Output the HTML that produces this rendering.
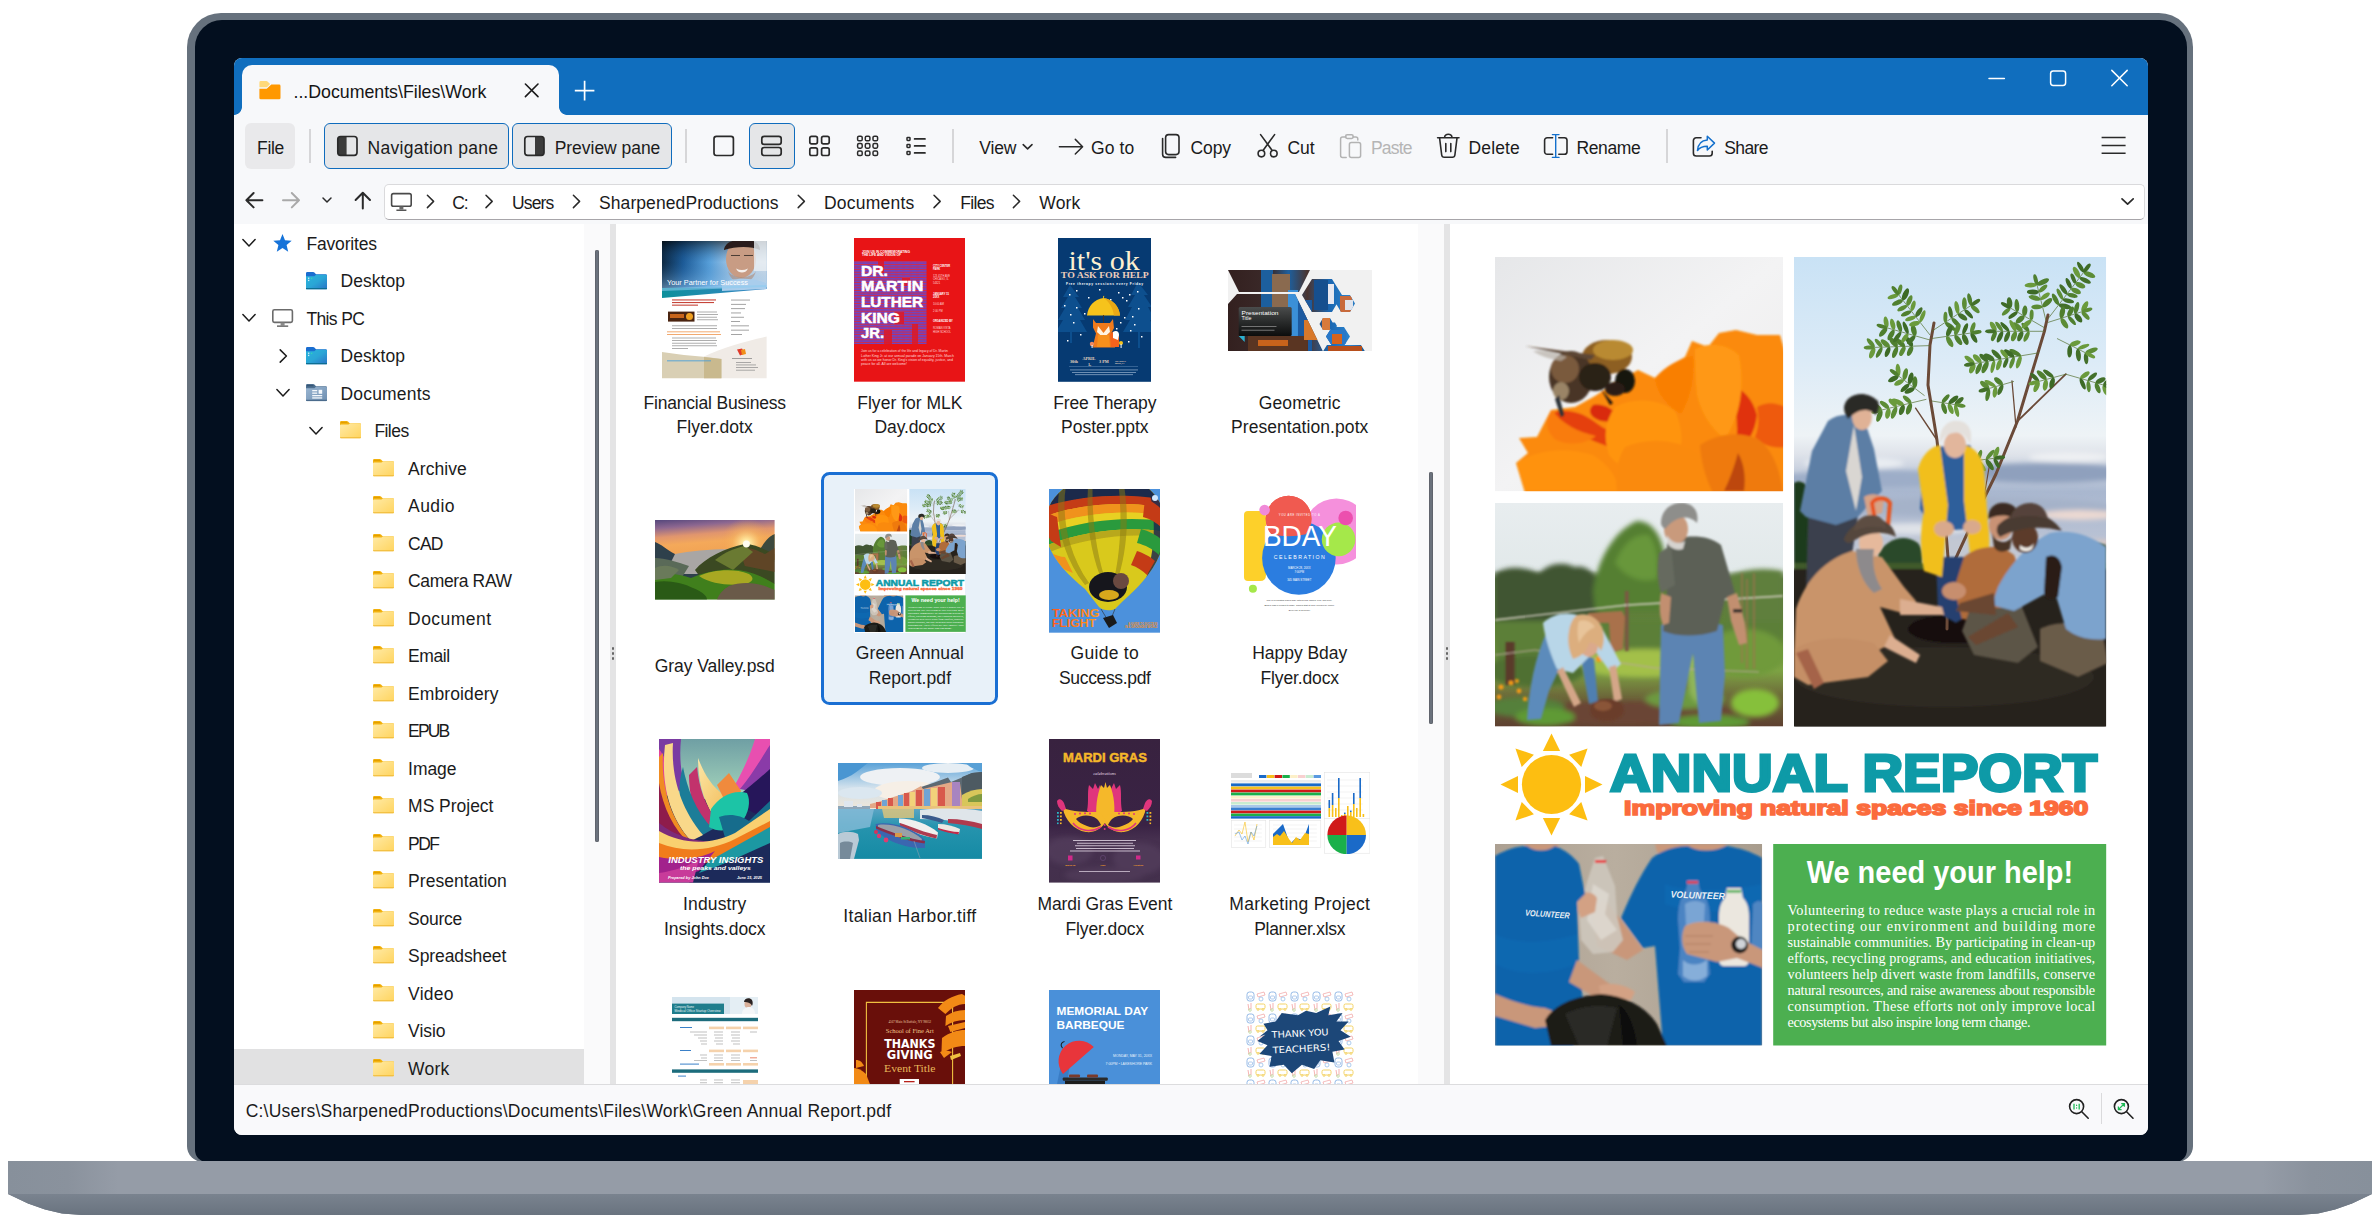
<!DOCTYPE html>
<html lang="en">
<head>
<meta charset="utf-8">
<title>File Viewer - Work</title>
<style>
*{box-sizing:border-box;margin:0;padding:0}
html,body{width:2380px;height:1230px;background:#fff;overflow:hidden}
body{font-family:"Liberation Sans",sans-serif;font-size:17.5px;color:#1b1b1b;position:relative}
.abs{position:absolute}
#stage{position:absolute;left:0;top:0;width:2380px;height:1230px;overflow:hidden;background:#fff}
/* laptop */
#bezel{position:absolute;left:187px;top:13px;width:2006px;height:1149px;background:#66717d;border-radius:34px 34px 16px 16px}
#bezel i{position:absolute;left:8px;top:7px;right:6px;bottom:0;background:#030f1f;border-radius:27px 27px 12px 12px}
#base{position:absolute;left:8px;top:1161px;width:2364px;height:54px;background:#727c88;clip-path:polygon(0 0,2364px 0,2364px 33px,2344px 42.500px,2327px 48.500px,2310px 52.500px,2290px 54px,74px 54px,54px 52.500px,37px 48.500px,20px 42.500px,0 33px);overflow:hidden}
#base i{position:absolute;left:0;top:0;width:100%;height:33px;background:linear-gradient(90deg,#87909b 0,#8a929d 60px,#959ca7 110px,#959ca7 2254px,#8a929d 2304px,#87909b 100%)}
#base b{position:absolute;left:0;top:33px;width:100%;height:21px;background:linear-gradient(180deg,#7a838f,#69737f)}
/* window */
#win{position:absolute;left:234px;top:58px;width:1914px;height:1077px;border-radius:8px;overflow:hidden;background:#f7f8fa}
#g{position:absolute;left:-234px;top:-58px;width:2380px;height:1230px}
.t{position:absolute;white-space:nowrap;line-height:20px}
svg{position:absolute;overflow:visible}
svg.th{overflow:hidden}
.ic{fill:none;stroke:#2a2a2a;stroke-width:1.6;stroke-linecap:round;stroke-linejoin:round}
.sep{position:absolute;width:1.5px;background:#d6d6d8}
</style>
</head>
<body>
<div id="stage">
<div id="bezel"><i></i></div>
<div id="base"><i></i><b></b></div>
<div id="win"><div id="g">
<svg width="0" height="0" style="left:0;top:0"><defs><filter id="b0" x="-5%" y="-5%" width="110%" height="110%"><feGaussianBlur stdDeviation=".5"/></filter></defs></svg>
<!-- title bar -->
<div class="abs" style="left:234px;top:58px;width:1914px;height:57px;background:#106ebe"></div>
<div class="abs" style="left:241.5px;top:64.8px;width:317px;height:51px;background:#f7f8fa;border-radius:10px 10px 0 0"></div>
<div class="abs" style="left:233.5px;top:106.6px;width:8px;height:8px;background:radial-gradient(circle at 0 0,rgba(247,248,250,0) 7.5px,#f7f8fa 8.2px)"></div>
<div class="abs" style="left:558.5px;top:106.6px;width:8px;height:8px;background:radial-gradient(circle at 100% 0,rgba(247,248,250,0) 7.5px,#f7f8fa 8.2px)"></div>
<svg style="left:255px;top:78px" width="30" height="26" viewBox="255 78 30 26"><path d="M259.400 82.400q0-1.300 1.300-1.300h5.800q.6 0 1 .4l2.600 2.600-3.200 3.200h-7.500z" fill="#ffd97a"/><path d="M259.400 88.800h7.300l4.600-4.300h7.800q1.400 0 1.400 1.400v12q0 1.400-1.400 1.400h-18.300q-1.400 0-1.400-1.400z" fill="#ff9800"/></svg>
<span class="t" style="left:293.50px;top:82.13px;font-size:17.80px;letter-spacing:-0.024px;color:#151515">...Documents\Files\Work</span>
<svg style="left:520px;top:80px" width="24" height="22" viewBox="520 80 24 22"><path d="M525.4 84l12.6 12.6M538 84l-12.6 12.6" stroke="#1b1b1b" stroke-width="1.6" fill="none" stroke-linecap="round"/></svg>
<svg style="left:570px;top:76px" width="30" height="30" viewBox="570 76 30 30"><path d="M574.8 90.6h19.6M584.6 80.8v19.6" stroke="#fff" stroke-width="1.7" fill="none"/></svg>
<svg style="left:1980px;top:62px" width="160" height="34" viewBox="1980 62 160 34"><g stroke="#fff" stroke-width="1.5" fill="none" stroke-linecap="round"><path d="M1989 78.6h15.4"/><rect x="2050.6" y="71" width="15" height="14.4" rx="2.6"/><path d="M2111.8 70.4l15.4 15.4M2127.2 70.4l-15.4 15.4"/></g></svg>
<!-- toolbar -->
<div class="abs" style="left:245px;top:123px;width:50.4px;height:45.8px;background:#e9e9eb;border-radius:6px"></div>
<span class="t" style="left:257.00px;top:137.74px;font-size:17.50px;letter-spacing:-0.300px;">File</span>
<div class="sep" style="left:309.2px;top:129px;height:34px"></div>
<div class="abs" style="left:324.4px;top:123px;width:185px;height:45.8px;background:#e5e6e8;border:1.8px solid #0f6cbd;border-radius:6px"></div>
<svg style="left:334px;top:132px" width="28" height="28" viewBox="334 132 28 28"><path d="M346.6 136.5h-6.2a2.6 2.6 0 0 0-2.6 2.6v13.6a2.6 2.6 0 0 0 2.6 2.6h6.2z" fill="#3b3b3b"/><rect x="337.8" y="136.5" width="19.2" height="18.8" rx="2.8" class="ic" style="stroke-width:1.7"/></svg>
<span class="t" style="left:367.50px;top:137.74px;font-size:17.50px;letter-spacing:0.294px;">Navigation pane</span>
<div class="abs" style="left:511.8px;top:123px;width:159.8px;height:45.8px;background:#e5e6e8;border:1.8px solid #0f6cbd;border-radius:6px"></div>
<svg style="left:521px;top:132px" width="28" height="28" viewBox="521 132 28 28"><path d="M535 136.5h6.4a2.6 2.6 0 0 1 2.6 2.6v13.6a2.6 2.6 0 0 1-2.6 2.6H535z" fill="#3b3b3b"/><rect x="524.8" y="136.5" width="19.2" height="18.8" rx="2.8" class="ic" style="stroke-width:1.7"/></svg>
<span class="t" style="left:554.70px;top:137.74px;font-size:17.50px;letter-spacing:-0.036px;">Preview pane</span>
<div class="sep" style="left:685.4px;top:129px;height:34px"></div>
<div class="abs" style="left:748.8px;top:123px;width:46px;height:45.8px;background:#e5e6e8;border:1.8px solid #0f6cbd;border-radius:6px"></div>
<svg style="left:705px;top:128px" width="230" height="36" viewBox="705 128 230 36"><g class="ic" style="stroke-width:1.7">
<rect x="714" y="136.3" width="19.4" height="19.2" rx="2.4"/>
<rect x="761.8" y="136.3" width="19.4" height="8" rx="2.4"/><rect x="761.8" y="147.5" width="19.4" height="8" rx="2.4"/>
<rect x="809.8" y="136.3" width="7.6" height="7.6" rx="1.8"/><rect x="821.6" y="136.3" width="7.6" height="7.6" rx="1.8"/><rect x="809.8" y="147.9" width="7.6" height="7.6" rx="1.8"/><rect x="821.6" y="147.9" width="7.6" height="7.6" rx="1.8"/>
</g><g class="ic" style="stroke-width:1.5">
<rect x="857.6" y="136.2" width="4.6" height="4.6" rx="1.4"/><rect x="865.3" y="136.2" width="4.6" height="4.6" rx="1.4"/><rect x="873" y="136.2" width="4.6" height="4.6" rx="1.4"/>
<rect x="857.6" y="143.6" width="4.6" height="4.6" rx="1.4"/><rect x="865.3" y="143.6" width="4.6" height="4.6" rx="1.4"/><rect x="873" y="143.6" width="4.6" height="4.6" rx="1.4"/>
<rect x="857.6" y="151" width="4.6" height="4.6" rx="1.4"/><rect x="865.3" y="151" width="4.6" height="4.6" rx="1.4"/><rect x="873" y="151" width="4.6" height="4.6" rx="1.4"/>
<rect x="907" y="137.4" width="3" height="3" rx=".6"/><rect x="907" y="144.4" width="3" height="3" rx=".6"/><rect x="907" y="151.4" width="3" height="3" rx=".6"/>
<path d="M914.6 138.9h10.4M914.6 145.9h10.4M914.6 152.9h10.4" style="stroke-width:1.7"/>
</g></svg>
<div class="sep" style="left:952.4px;top:129px;height:34px"></div>
<span class="t" style="left:979.30px;top:137.74px;font-size:17.50px;letter-spacing:-0.154px;">View</span>
<svg style="left:1020px;top:138px" width="16" height="16" viewBox="1020 138 16 16"><path d="M1023.2 144.6l4.4 4.2 4.4-4.2" class="ic" style="stroke-width:1.6"/></svg>
<svg style="left:1055px;top:130px" width="32" height="32" viewBox="1055 130 32 32"><path d="M1059.4 146.7h22.6M1075.3 139.4l7.3 7.3-7.3 7.3" class="ic" style="stroke-width:1.5"/></svg>
<span class="t" style="left:1091.00px;top:137.74px;font-size:17.50px;letter-spacing:0.100px;">Go to</span>
<svg style="left:1158px;top:130px" width="26" height="32" viewBox="1158 130 26 32"><g class="ic" style="stroke-width:1.6"><rect x="1165.6" y="134.6" width="13.4" height="20" rx="3"/><path d="M1162.6 138.6v15.6a3.2 3.2 0 0 0 3.2 3.2h9.8"/></g></svg>
<span class="t" style="left:1190.60px;top:137.74px;font-size:17.50px;letter-spacing:-0.114px;">Copy</span>
<svg style="left:1254px;top:130px" width="28" height="32" viewBox="1254 130 28 32"><g class="ic" style="stroke-width:1.6"><path d="M1260.6 134.6l11.4 15.6M1274.6 134.6l-11.4 15.6"/><circle cx="1261.4" cy="153.6" r="3.3"/><circle cx="1273.8" cy="153.6" r="3.3"/></g></svg>
<span class="t" style="left:1287.40px;top:137.74px;font-size:17.50px;letter-spacing:-0.011px;">Cut</span>
<svg style="left:1336px;top:130px" width="30" height="32" viewBox="1336 130 30 32"><g class="ic" style="stroke:#b3b3b3;stroke-width:1.5"><path d="M1346 137h-3.4a2 2 0 0 0-2 2v16.4a2 2 0 0 0 2 2h3.6M1353 137h2.8a2 2 0 0 1 2 2v1"/><rect x="1345.6" y="134.8" width="7.6" height="3.6" rx="1.6"/><rect x="1349.4" y="142.4" width="11.2" height="15" rx="2"/></g></svg>
<span class="t" style="left:1371.00px;top:137.74px;font-size:17.50px;letter-spacing:-0.830px;color:#b5b5b5">Paste</span>
<svg style="left:1434px;top:130px" width="30" height="32" viewBox="1434 130 30 32"><g class="ic" style="stroke-width:1.6"><path d="M1437.6 137.8h21.4M1444.6 137.6a3.7 3.4 0 0 1 7.4 0M1439.6 138.2l2.1 16.8a2.6 2.6 0 0 0 2.6 2.3h8a2.6 2.6 0 0 0 2.6-2.3l2.1-16.8M1445.8 143.6v8M1450.8 143.6v8"/></g></svg>
<span class="t" style="left:1468.60px;top:137.74px;font-size:17.50px;letter-spacing:0.102px;">Delete</span>
<svg style="left:1540px;top:130px" width="32" height="32" viewBox="1540 130 32 32"><g class="ic" style="stroke-width:1.6"><path d="M1552.6 137.7h-5.4a2.6 2.6 0 0 0-2.6 2.6v11.4a2.6 2.6 0 0 0 2.6 2.6h5.4M1558.8 137.7h5.6a2.6 2.6 0 0 1 2.6 2.6v11.4a2.6 2.6 0 0 1-2.6 2.6h-5.6"/><path d="M1555.7 134.6v22.8M1552.4 134.6h6.6M1552.4 157.4h6.6" style="stroke:#1470cc;stroke-width:1.4"/></g></svg>
<span class="t" style="left:1576.40px;top:137.74px;font-size:17.50px;letter-spacing:-0.358px;">Rename</span>
<div class="sep" style="left:1666px;top:129px;height:34px"></div>
<svg style="left:1688px;top:130px" width="32" height="32" viewBox="1688 130 32 32"><g class="ic" style="stroke-width:1.6"><path d="M1701 137.8h-4.8a2.8 2.8 0 0 0-2.8 2.8v12.6a2.8 2.8 0 0 0 2.8 2.8h13.2a2.8 2.8 0 0 0 2.8-2.8v-2"/><path d="M1707.3 136.2l7.2 6.9-7.2 6.9v-3.8c-4.4 0-7.8 1.300-9.800 4.300.500-6.300 4.400-10.100 9.800-10.500z" style="stroke:#1470cc;stroke-width:1.5"/></g></svg>
<span class="t" style="left:1724.30px;top:137.74px;font-size:17.50px;letter-spacing:-0.640px;">Share</span>
<svg style="left:2096px;top:130px" width="34" height="32" viewBox="2096 130 34 32"><path d="M2101.600 137.500h24M2101.600 145.400h24M2101.600 153.300h24" stroke="#2a2a2a" stroke-width="1.500" fill="none"/></svg>
<!-- address row -->
<svg style="left:240px;top:186px" width="140" height="30" viewBox="240 186 140 30"><g class="ic" style="stroke-width:2"><path d="M246.400 200.200h16M253.600 193l-7.200 7.200 7.200 7.200"/><path d="M355.600 200l7.200-7.200 7.200 7.200M362.800 193v15.400"/></g><path d="M283 200.200h16M291.800 193l7.200 7.200-7.200 7.200" class="ic" style="stroke:#a9a9a9;stroke-width:2"/><path d="M323 198l4 4 4-4" class="ic" style="stroke-width:1.500"/></svg>
<div class="abs" style="left:384px;top:183.600px;width:1761px;height:36.600px;background:#fff;border:1px solid #dadadc;border-bottom:1.600px solid #a7a5a9;border-radius:5px"></div>
<svg style="left:388px;top:188px" width="28" height="26" viewBox="388 188 28 26"><g class="ic" style="stroke:#4a4a4a;stroke-width:1.600"><rect x="391.600" y="193.600" width="19.600" height="12.600" rx="1.800"/></g><path d="M399.400 206.400h4v3h-4z" fill="#6a6a6a"/><path d="M396.400 209.400h10v1.500h-10z" fill="#555"/></svg>
<svg style="left:420px;top:190px" width="610" height="24" viewBox="420 190 610 24"><g class="ic" style="stroke-width:1.500"><path d="M427.400 195.200l6.200 6.200-6.200 6.200"/><path d="M486 195.200l6.200 6.200-6.200 6.200"/><path d="M573.400 195.200l6.200 6.200-6.200 6.200"/><path d="M798.200 195.200l6.200 6.200-6.200 6.200"/><path d="M934 195.200l6.200 6.200-6.200 6.200"/><path d="M1013.400 195.200l6.200 6.200-6.200 6.200"/></g></svg>
<span class="t" style="left:452.20px;top:192.64px;font-size:17.50px;letter-spacing:-1.200px;">C:</span>
<span class="t" style="left:512.00px;top:192.64px;font-size:17.50px;letter-spacing:-0.840px;">Users</span>
<span class="t" style="left:599.00px;top:192.64px;font-size:17.50px;letter-spacing:0.083px;">SharpenedProductions</span>
<span class="t" style="left:824.00px;top:192.64px;font-size:17.50px;letter-spacing:0.221px;">Documents</span>
<span class="t" style="left:960.30px;top:192.64px;font-size:17.50px;letter-spacing:-0.670px;">Files</span>
<span class="t" style="left:1039.30px;top:192.64px;font-size:17.50px;letter-spacing:0.172px;">Work</span>
<svg style="left:2118px;top:192px" width="20" height="20" viewBox="2118 192 20 20"><path d="M2122 198.800l5.600 5.400 5.600-5.400" class="ic" style="stroke-width:1.700"/></svg>
<!-- nav pane -->
<div class="abs" style="left:234px;top:224px;width:350px;height:861px;background:#fff"></div>
<div class="abs" style="left:584px;top:224px;width:26px;height:861px;background:#fafafb"></div>
<div class="abs" style="left:610px;top:224px;width:5.800px;height:861px;background:#e4e4e5"></div>
<div class="abs" style="left:594.800px;top:249.600px;width:4.200px;height:592px;background:#6b727d;border-radius:2.100px;box-shadow:inset 0 0 0 .6px #595c63"></div>
<div class="abs" style="left:611.800px;top:647.400px;width:2.200px;height:2.200px;background:#666;border-radius:50%;box-shadow:0 5px 0 #666,0 10px 0 #666"></div>
<div class="abs" style="left:234px;top:1049px;width:350px;height:36px;background:#e1e1e2"></div>
<svg width="0" height="0" style="left:0;top:0"><defs>
<linearGradient id="gy" x1="0" y1="0" x2="1" y2="1"><stop offset="0" stop-color="#ffeaa6"/><stop offset="1" stop-color="#ffd45e"/></linearGradient>
<linearGradient id="gb" x1="0" y1="0" x2="1" y2="1"><stop offset="0" stop-color="#2ab4dc"/><stop offset=".5" stop-color="#2aa6d6"/><stop offset="1" stop-color="#2a72c6"/></linearGradient>
<linearGradient id="gd" x1="0" y1="0" x2="1" y2="1"><stop offset="0" stop-color="#9ab6d2"/><stop offset="1" stop-color="#6d8eb0"/></linearGradient>
<symbol id="fy" viewBox="0 0 21 17.400"><path d="M0 1.300Q0 0 1.300 0h5.500q.7 0 1.200.5L9.700 2.200h10Q21 2.200 21 3.500v3H0z" fill="#f2b20e"/><path d="M1 1.500h6.300" stroke="#e39e00" stroke-width="1" fill="none"/><path d="M0 4.400q0-1 1-1h7.300q.6 0 1-.4l.9-.800h9.600q1.200 0 1.200 1.200v12.800q0 1.200-1.200 1.200H1.200Q0 17.400 0 16.200z" fill="url(#gy)"/><path d="M0 16.200h21q0 1.200-1.200 1.200H1.200Q0 17.400 0 16.200z" fill="#efb936"/></symbol>
<symbol id="desk" viewBox="0 0 21 17.600"><path d="M0 1.300Q0 0 1.300 0h5.900q.7 0 1.200.5L10 2.200h9.800Q21 2.200 21 3.500v3H0z" fill="#1a6dd0"/><path d="M0 4.200h8.400l1.600-1.400h9.800q1.200 0 1.200 1.200v12.400q0 1.200-1.200 1.200H1.200Q0 17.600 0 16.400z" fill="url(#gb)"/><path d="M0 16h21v.4q0 1.200-1.200 1.200H1.200Q0 17.600 0 16.400z" fill="#0d6e92"/><rect x="2" y="5.600" width="1.300" height="1.300" fill="#cfeefa"/><rect x="2" y="7.800" width="1.300" height="1.300" fill="#cfeefa"/><rect x="5" y="5.800" width="1.200" height="1.200" fill="#35d6b0"/></symbol>
<symbol id="docs" viewBox="0 0 21 17.200"><path d="M0 1.300Q0 0 1.300 0h5.900q.7 0 1.200.5L10 2.200h9.800Q21 2.200 21 3.500v3H0z" fill="#4d6f90"/><path d="M1 1.700h6.500" stroke="#2f4d6b" stroke-width="1.100" fill="none"/><path d="M0 4.200h8.400l1.600-1.400h9.800q1.200 0 1.200 1.200v12q0 1.200-1.200 1.200H1.200Q0 17.200 0 16z" fill="url(#gd)"/><path d="M0 15.800h21v.2q0 1.200-1.200 1.200H1.200Q0 17.200 0 16z" fill="#4b6b8c"/><g fill="#f4f8fc"><rect x="6.200" y="6" width="5" height="1.300"/><rect x="6.200" y="8.500" width="5" height="1.300"/><rect x="12.600" y="5.800" width="3.600" height="4"/><rect x="6.200" y="11" width="10" height="1.300"/><rect x="6.200" y="13.300" width="10" height="1.300"/></g></symbol>
</defs></svg>
<svg style="left:241.0px;top:237.0px" width="16" height="12" viewBox="0 0 16 12"><path d="M1.900 2.600l6.100 6.400 6.100-6.400" class="ic" style="stroke-width:1.500;stroke:#1b1b1b"/></svg>
<svg style="left:273.3px;top:234.2px" width="19" height="18" viewBox="0 0 19 18"><path d="M9.500 0l2.500 6.300 6.700.5-5.100 4.300 1.600 6.600-5.700-3.600-5.700 3.600 1.600-6.600L.3 6.800l6.700-.5z" fill="#1673d9"/></svg>
<span class="t" style="left:306.40px;top:233.74px;font-size:17.50px;letter-spacing:-0.163px;">Favorites</span>
<svg style="left:306.0px;top:271.5px" width="21" height="17.6"><use href="#desk"/></svg>
<span class="t" style="left:340.50px;top:271.24px;font-size:17.50px;letter-spacing:0.029px;">Desktop</span>
<svg style="left:241.0px;top:312.0px" width="16" height="12" viewBox="0 0 16 12"><path d="M1.900 2.600l6.100 6.400 6.100-6.400" class="ic" style="stroke-width:1.500;stroke:#1b1b1b"/></svg>
<svg style="left:272.2px;top:308.8px" width="22" height="19" viewBox="0 0 22 19"><rect x=".8" y=".8" width="19.600" height="12.600" rx="1.600" fill="#fff" stroke="#6b6b6b" stroke-width="1.600"/><rect x="8.600" y="13.600" width="4" height="3" fill="#8a8a8a"/><rect x="5" y="16.400" width="11.200" height="1.500" fill="#6b6b6b"/></svg>
<span class="t" style="left:306.40px;top:308.74px;font-size:17.50px;letter-spacing:-0.619px;">This PC</span>
<svg style="left:276.7px;top:348.1px" width="12" height="16" viewBox="0 0 12 16"><path d="M3.200 1.900l6.200 6.100-6.200 6.100" class="ic" style="stroke-width:1.500;stroke:#1b1b1b"/></svg>
<svg style="left:306.0px;top:346.5px" width="21" height="17.6"><use href="#desk"/></svg>
<span class="t" style="left:340.50px;top:346.24px;font-size:17.50px;letter-spacing:0.029px;">Desktop</span>
<svg style="left:274.7px;top:387.0px" width="16" height="12" viewBox="0 0 16 12"><path d="M1.900 2.600l6.100 6.400 6.100-6.400" class="ic" style="stroke-width:1.500;stroke:#1b1b1b"/></svg>
<svg style="left:306.0px;top:384.0px" width="21" height="17.2"><use href="#docs"/></svg>
<span class="t" style="left:340.50px;top:383.74px;font-size:17.50px;letter-spacing:0.188px;">Documents</span>
<svg style="left:308.3px;top:424.5px" width="16" height="12" viewBox="0 0 16 12"><path d="M1.900 2.600l6.100 6.400 6.100-6.400" class="ic" style="stroke-width:1.500;stroke:#1b1b1b"/></svg>
<svg style="left:339.9px;top:421.3px" width="21" height="17.4"><use href="#fy"/></svg>
<span class="t" style="left:374.40px;top:421.24px;font-size:17.50px;letter-spacing:-0.550px;">Files</span>
<svg style="left:373.3px;top:458.8px" width="21" height="17.4"><use href="#fy"/></svg>
<span class="t" style="left:408.10px;top:458.74px;font-size:17.50px;letter-spacing:0.035px;">Archive</span>
<svg style="left:373.3px;top:496.3px" width="21" height="17.4"><use href="#fy"/></svg>
<span class="t" style="left:408.10px;top:496.24px;font-size:17.50px;letter-spacing:0.408px;">Audio</span>
<svg style="left:373.3px;top:533.8px" width="21" height="17.4"><use href="#fy"/></svg>
<span class="t" style="left:408.10px;top:533.74px;font-size:17.50px;letter-spacing:-0.817px;">CAD</span>
<svg style="left:373.3px;top:571.3px" width="21" height="17.4"><use href="#fy"/></svg>
<span class="t" style="left:408.10px;top:571.24px;font-size:17.50px;letter-spacing:-0.368px;">Camera RAW</span>
<svg style="left:373.3px;top:608.8px" width="21" height="17.4"><use href="#fy"/></svg>
<span class="t" style="left:408.10px;top:608.74px;font-size:17.50px;letter-spacing:0.455px;">Document</span>
<svg style="left:373.3px;top:646.3px" width="21" height="17.4"><use href="#fy"/></svg>
<span class="t" style="left:408.10px;top:646.24px;font-size:17.50px;letter-spacing:-0.432px;">Email</span>
<svg style="left:373.3px;top:683.8px" width="21" height="17.4"><use href="#fy"/></svg>
<span class="t" style="left:408.10px;top:683.74px;font-size:17.50px;letter-spacing:0.092px;">Embroidery</span>
<svg style="left:373.3px;top:721.3px" width="21" height="17.4"><use href="#fy"/></svg>
<span class="t" style="left:408.10px;top:721.24px;font-size:17.50px;letter-spacing:-1.839px;">EPUB</span>
<svg style="left:373.3px;top:758.8px" width="21" height="17.4"><use href="#fy"/></svg>
<span class="t" style="left:408.10px;top:758.74px;font-size:17.50px;letter-spacing:-0.068px;">Image</span>
<svg style="left:373.3px;top:796.3px" width="21" height="17.4"><use href="#fy"/></svg>
<span class="t" style="left:408.10px;top:796.24px;font-size:17.50px;letter-spacing:-0.028px;">MS Project</span>
<svg style="left:373.3px;top:833.8px" width="21" height="17.4"><use href="#fy"/></svg>
<span class="t" style="left:408.10px;top:833.74px;font-size:17.50px;letter-spacing:-1.534px;">PDF</span>
<svg style="left:373.3px;top:871.3px" width="21" height="17.4"><use href="#fy"/></svg>
<span class="t" style="left:408.10px;top:871.24px;font-size:17.50px;letter-spacing:0.045px;">Presentation</span>
<svg style="left:373.3px;top:908.8px" width="21" height="17.4"><use href="#fy"/></svg>
<span class="t" style="left:408.10px;top:908.74px;font-size:17.50px;letter-spacing:-0.275px;">Source</span>
<svg style="left:373.3px;top:946.3px" width="21" height="17.4"><use href="#fy"/></svg>
<span class="t" style="left:408.10px;top:946.24px;font-size:17.50px;letter-spacing:-0.104px;">Spreadsheet</span>
<svg style="left:373.3px;top:983.8px" width="21" height="17.4"><use href="#fy"/></svg>
<span class="t" style="left:408.10px;top:983.74px;font-size:17.50px;letter-spacing:0.251px;">Video</span>
<svg style="left:373.3px;top:1021.3px" width="21" height="17.4"><use href="#fy"/></svg>
<span class="t" style="left:408.10px;top:1021.24px;font-size:17.50px;letter-spacing:-0.063px;">Visio</span>
<svg style="left:373.3px;top:1058.8px" width="21" height="17.4"><use href="#fy"/></svg>
<span class="t" style="left:408.10px;top:1058.74px;font-size:17.50px;letter-spacing:0.222px;">Work</span>
<!-- files pane -->
<div class="abs" style="left:615.800px;top:224px;width:802.400px;height:861px;background:#fff"></div>
<div class="abs" style="left:1418.200px;top:224px;width:26px;height:861px;background:#fafafb"></div>
<div class="abs" style="left:1444.200px;top:224px;width:5.800px;height:861px;background:#e4e4e5"></div>
<div class="abs" style="left:1429px;top:472px;width:4.200px;height:252.400px;background:#6b727d;border-radius:2.100px;box-shadow:inset 0 0 0 .6px #595c63"></div>
<div class="abs" style="left:1445.800px;top:647.400px;width:2.200px;height:2.200px;background:#666;border-radius:50%;box-shadow:0 5px 0 #666,0 10px 0 #666"></div>
<div class="abs" style="left:1450px;top:224px;width:698px;height:861px;background:#fff"></div>
<div class="abs" style="left:821.300px;top:471.900px;width:177.200px;height:233.400px;background:#e8f1f9;border:3px solid #1a6fd3;border-radius:8.500px"></div>
<span class="t" style="left:643.55px;top:392.84px;font-size:17.50px;letter-spacing:-0.200px;">Financial Business</span>
<span class="t" style="left:676.60px;top:417.34px;font-size:17.50px;letter-spacing:0.034px;">Flyer.dotx</span>
<span class="t" style="left:857.25px;top:392.84px;font-size:17.50px;letter-spacing:0.021px;">Flyer for MLK</span>
<span class="t" style="left:874.55px;top:417.34px;font-size:17.50px;letter-spacing:-0.119px;">Day.docx</span>
<span class="t" style="left:1053.30px;top:392.84px;font-size:17.50px;letter-spacing:-0.144px;">Free Therapy</span>
<span class="t" style="left:1061.10px;top:417.34px;font-size:17.50px;letter-spacing:-0.014px;">Poster.pptx</span>
<span class="t" style="left:1258.75px;top:392.84px;font-size:17.50px;letter-spacing:0.131px;">Geometric</span>
<span class="t" style="left:1231.00px;top:417.34px;font-size:17.50px;letter-spacing:0.071px;">Presentation.potx</span>
<span class="t" style="left:654.75px;top:655.64px;font-size:17.50px;letter-spacing:-0.069px;">Gray Valley.psd</span>
<span class="t" style="left:855.85px;top:643.44px;font-size:17.50px;letter-spacing:0.089px;">Green Annual</span>
<span class="t" style="left:868.75px;top:667.94px;font-size:17.50px;letter-spacing:0.058px;">Report.pdf</span>
<span class="t" style="left:1070.55px;top:643.44px;font-size:17.50px;letter-spacing:0.293px;">Guide to</span>
<span class="t" style="left:1059.05px;top:667.94px;font-size:17.50px;letter-spacing:-0.348px;">Success.pdf</span>
<span class="t" style="left:1252.25px;top:643.44px;font-size:17.50px;letter-spacing:-0.044px;">Happy Bday</span>
<span class="t" style="left:1260.55px;top:667.94px;font-size:17.50px;letter-spacing:-0.145px;">Flyer.docx</span>
<span class="t" style="left:683.00px;top:894.04px;font-size:17.50px;letter-spacing:0.144px;">Industry</span>
<span class="t" style="left:663.90px;top:918.54px;font-size:17.50px;letter-spacing:-0.041px;">Insights.docx</span>
<span class="t" style="left:843.25px;top:906.24px;font-size:17.50px;letter-spacing:0.326px;">Italian Harbor.tiff</span>
<span class="t" style="left:1037.40px;top:894.04px;font-size:17.50px;letter-spacing:-0.085px;">Mardi Gras Event</span>
<span class="t" style="left:1065.45px;top:918.54px;font-size:17.50px;letter-spacing:-0.105px;">Flyer.docx</span>
<span class="t" style="left:1229.35px;top:894.04px;font-size:17.50px;letter-spacing:0.267px;">Marketing Project</span>
<span class="t" style="left:1254.15px;top:918.54px;font-size:17.50px;letter-spacing:-0.271px;">Planner.xlsx</span>
<!-- thumb: annual report page (scaled clone) -->
<div class="abs" style="left:853.900px;top:488.600px;width:111.500px;height:144.400px;background:#fff"></div>
<svg style="left:854.700px;top:489.300px" width="110.750" height="142.880" viewBox="0 0 611.200 788.500">
<defs>
<filter id="b1" x="-5%" y="-5%" width="110%" height="110%"><feGaussianBlur stdDeviation="1.1"/></filter>
<filter id="b2" x="-10%" y="-10%" width="120%" height="120%"><feGaussianBlur stdDeviation="2.6"/></filter>
<filter id="b4" x="-20%" y="-20%" width="140%" height="140%"><feGaussianBlur stdDeviation="6"/></filter>
<clipPath id="cbee"><rect x="0" y="0" width="288.1" height="234.3"/></clipPath>
<clipPath id="cpl"><rect x="299" y="0" width="312.2" height="469.6"/></clipPath>
<clipPath id="cga"><rect x="0" y="246" width="288.1" height="223.6"/></clipPath>
<clipPath id="cvo"><rect x="0" y="587" width="267.2" height="201.5"/></clipPath>
<linearGradient id="gbee" x1="0" y1="0" x2="1" y2="1"><stop offset="0" stop-color="#e6e7e9"/><stop offset=".5" stop-color="#f3f3f4"/><stop offset="1" stop-color="#ecebea"/></linearGradient>
<linearGradient id="gsky" x1="0" y1="0" x2="0" y2="1"><stop offset="0" stop-color="#c9e2f5"/><stop offset=".22" stop-color="#dcebf7"/><stop offset=".38" stop-color="#eef3f6"/><stop offset=".42" stop-color="#dfe3ea"/><stop offset=".5" stop-color="#a9b7cf"/><stop offset=".6" stop-color="#b9c2d4"/><stop offset=".66" stop-color="#cfd0d6"/><stop offset=".67" stop-color="#2a2622"/><stop offset="1" stop-color="#1f1b18"/></linearGradient>
<linearGradient id="ggar" x1="0" y1="0" x2="0" y2="1"><stop offset="0" stop-color="#e8edef"/><stop offset=".3" stop-color="#e2e9ea"/><stop offset=".34" stop-color="#5d7442"/><stop offset=".55" stop-color="#5f8238"/><stop offset=".75" stop-color="#7da344"/><stop offset=".86" stop-color="#6d6a3a"/><stop offset="1" stop-color="#5e4030"/></linearGradient>
<linearGradient id="gwall" x1="0" y1="0" x2="1" y2="0"><stop offset="0" stop-color="#aca092"/><stop offset=".45" stop-color="#b9ae9f"/><stop offset="1" stop-color="#a89c8d"/></linearGradient>
</defs>
<!-- ============ BEE ============ -->
<g clip-path="url(#cbee)">
<rect x="0" y="0" width="288.1" height="234.3" fill="url(#gbee)"/>
<g filter="url(#b1)">
<path d="M30 236L21 206 33 196 24 181 42 180 56 153 80 150 100 139 118 127 143 113 160 121 176 108 190 100 197 84 213 90 224 76 241 73 262 78 285 78 290 95V236z" fill="#fb8a08"/>
<path d="M60 155c14-4 30 2 40 10 10 8 22 12 36 20 6 4-2 10-12 8-20-6-40-14-56-26-6-5-10-10-8-12z" fill="#e5400c"/>
<path d="M98 148c10-2 20 4 26 12-8 6-18 6-26 0-4-4-4-8 0-12z" fill="#d92c08"/>
<path d="M236 128c12 4 22 14 26 30-2 18-10 30-22 38 4-20 2-44-4-68z" fill="#e0320a"/>
<path d="M262 150c10-6 20-4 28 0v40c-12 2-22-2-30-10 4-10 4-20 2-30z" fill="#ee5a0a"/>
<path d="M200 92c16-8 34-4 44 6 6 30 2 60-14 84-14-10-24-26-28-44-2-16-2-32-2-46z" fill="#ff9812"/>
<path d="M120 150c20-10 44-8 60 4 10 22 8 44-4 62-24 6-48 0-62-18-6-18-4-34 6-48z" fill="#ff9410"/>
<path d="M22 206c20-14 50-16 76-8 16 10 24 22 26 36H30z" fill="#ff920c"/>
<path d="M160 121c10-12 26-20 38-22 2 20-2 40-12 58-14-8-24-20-26-36z" fill="#f97f06"/>
<path d="M130 190c24-10 52-8 72 6 14 12 22 26 22 40H122c-2-18 0-34 8-46z" fill="#fa8a0a"/>
<path d="M205 188c18-12 40-14 58-6 14 10 22 30 25 54h-70c-8-16-12-32-13-48z" fill="#ef7a0c"/>
<path d="M243 196c6 10 8 24 6 38h-20c6-12 10-24 14-38z" fill="#a8320a" opacity=".7"/>
<path d="M57 153c10 14 26 22 44 26-10 8-26 10-40 4-10-8-12-20-4-30z" fill="#f97c08"/>
</g>
<g filter="url(#b1)">
<ellipse cx="112" cy="100" rx="25" ry="17" fill="#8d5e22"/>
<ellipse cx="118" cy="93" rx="20" ry="10" fill="#b98a32"/>
<ellipse cx="76" cy="120" rx="22" ry="26" fill="#4a3626"/>
<ellipse cx="70" cy="112" rx="14" ry="14" fill="#7a5a3c"/>
<ellipse cx="66" cy="134" rx="8" ry="9" fill="#9a8466"/>
<ellipse cx="100" cy="120" rx="16" ry="14" fill="#2a2018"/>
<ellipse cx="130" cy="124" rx="10" ry="12" fill="#17120f"/>
<ellipse cx="120" cy="132" rx="10" ry="7" fill="#2a1c14"/>
<path d="M30 89l70 9-4 5-38-8z" fill="#5d4634"/>
<path d="M38 94c10-2 24 2 34 6l-6 4c-10-2-20-4-28-10z" fill="#b9b2aa" opacity=".7"/>
<path d="M64 138l5 20-3 2-6-18z" fill="#2a3038"/>
<path d="M106 132l12 14-3 2z" fill="#1d1410"/>
</g>
</g>

<!-- ============ PLANTING ============ -->
<g clip-path="url(#cpl)"><g transform="translate(299,0)">
<rect x="0" y="0" width="312.2" height="469.6" fill="url(#gsky)"/>
<g filter="url(#b2)">
<ellipse cx="250" cy="216" rx="90" ry="10" fill="#8fa0bd"/>
<ellipse cx="90" cy="222" rx="110" ry="9" fill="#9dadc8"/>
<ellipse cx="60" cy="206" rx="50" ry="6" fill="#e9edf2"/>
<ellipse cx="275" cy="200" rx="40" ry="5" fill="#eef0f3"/>
<ellipse cx="180" cy="250" rx="140" ry="10" fill="#a5b2c9"/>
<ellipse cx="285" cy="258" rx="40" ry="5" fill="#ecd9d2"/>
<ellipse cx="120" cy="272" rx="60" ry="6" fill="#dfe2e8"/>
<ellipse cx="290" cy="288" rx="40" ry="5" fill="#f0c9b4"/>
<ellipse cx="200" cy="290" rx="120" ry="10" fill="#c3c8d3"/>
</g>
<g filter="url(#b1)">
<path d="M0 226c6-4 12 0 18 8v80H0z" fill="#1f3a1e"/>
<path d="M84 296c10-14 26-20 40-10 6 8 6 18 2 28H84z" fill="#2c4a2a"/>
<path d="M288 300c8-12 16-16 24-12v24h-24z" fill="#4a5a3a"/>
<rect x="0" y="306" width="312.200" height="8" fill="#3f5a2c"/>
<rect x="0" y="312" width="312.200" height="160" fill="#26211d"/>
<ellipse cx="150" cy="420" rx="150" ry="30" fill="#2f2924"/>
<ellipse cx="160" cy="372" rx="46" ry="14" fill="#14110f"/>
</g>
<!-- tree -->
<g fill="none" stroke="#6b4a38" stroke-linecap="round" stroke-linejoin="round">
<path d="M153 372L154 300 150 250 143 183 134 128 136 88 140 66" stroke-width="3"/>
<path d="M143 183L121.600 151.200" stroke-width="1.400"/>
<path d="M154 318L180 262 202 217 223.600 163.700 250.400 74.300 254 58" stroke-width="3"/>
<path d="M224 163.700L271.800 117.200" stroke-width="1.800"/>
<path d="M222 170L218 124" stroke-width="1.300"/>
<path d="M190 240L196 205" stroke-width="1.200"/>
</g>
<g stroke="#55702f" stroke-width=".7" fill="none">
<path d="M136.0 88.6L80.5 90.4"/>
<path d="M136.0 83.0L93.0 70.8"/>
<path d="M136.0 78.0L104.6 37.7"/>
<path d="M137.7 74.3L177.0 48.4"/>
<path d="M137.7 81.5L177.0 76.0"/>
<path d="M132.4 142.3L87.7 153.0"/>
<path d="M130.6 138.7L104.6 119.0"/>
<path d="M137.7 144.0L161.0 147.6"/>
<path d="M250.4 74.3L202.0 74.3"/>
<path d="M250.4 70.7L216.4 51.0"/>
<path d="M252.0 63.6L243.0 27.8"/>
<path d="M254.0 61.8L289.7 15.3"/>
<path d="M254.0 65.4L288.0 54.7"/>
<path d="M245.0 95.8L180.6 106.5"/>
<path d="M220.0 124.4L195.0 131.5"/>
<path d="M263.0 81.5L291.5 95.8"/>
<path d="M271.8 117.2L309.4 128.0"/>
<path d="M271.8 117.2L245.0 124.4"/>
<path d="M170.0 205.0L200.3 201.3"/>
</g>
<g>
<ellipse cx="116.1" cy="94.0" rx="5.4" ry="2.5" fill="#4f7f2f" transform="rotate(116 116.1 94.0)"/>
<ellipse cx="115.4" cy="84.8" rx="5.3" ry="2.4" fill="#3d6a26" transform="rotate(236 115.4 84.8)"/>
<ellipse cx="108.4" cy="94.1" rx="5.3" ry="2.3" fill="#5c8c36" transform="rotate(117 108.4 94.1)"/>
<ellipse cx="106.3" cy="85.8" rx="5.8" ry="2.6" fill="#4f7f2f" transform="rotate(218 106.3 85.8)"/>
<ellipse cx="101.1" cy="95.3" rx="6.1" ry="2.4" fill="#4f7f2f" transform="rotate(111 101.1 95.3)"/>
<ellipse cx="99.6" cy="85.3" rx="5.8" ry="2.7" fill="#4f7f2f" transform="rotate(230 99.6 85.3)"/>
<ellipse cx="93.6" cy="94.9" rx="5.4" ry="2.3" fill="#3d6a26" transform="rotate(112 93.6 94.9)"/>
<ellipse cx="91.3" cy="86.4" rx="5.6" ry="2.6" fill="#5c8c36" transform="rotate(219 91.3 86.4)"/>
<ellipse cx="85.2" cy="95.4" rx="6.0" ry="2.1" fill="#4f7f2f" transform="rotate(119 85.2 95.4)"/>
<ellipse cx="84.6" cy="86.1" rx="5.3" ry="2.0" fill="#5c8c36" transform="rotate(229 84.6 86.1)"/>
<ellipse cx="78.2" cy="95.9" rx="5.9" ry="2.5" fill="#6a9a3c" transform="rotate(113 78.2 95.9)"/>
<ellipse cx="76.8" cy="85.9" rx="5.8" ry="2.2" fill="#5c8c36" transform="rotate(230 76.8 85.9)"/>
<ellipse cx="75.1" cy="90.6" rx="5.4" ry="2" fill="#5c8c36" transform="rotate(178 75.1 90.6)"/>
<ellipse cx="117.3" cy="82.8" rx="5.6" ry="2.3" fill="#43702a" transform="rotate(-226 117.3 82.8)"/>
<ellipse cx="119.8" cy="73.4" rx="5.6" ry="2.7" fill="#4f7f2f" transform="rotate(-104 119.8 73.4)"/>
<ellipse cx="110.9" cy="81.1" rx="5.4" ry="2.2" fill="#6a9a3c" transform="rotate(-233 110.9 81.1)"/>
<ellipse cx="111.7" cy="70.7" rx="6.5" ry="2.1" fill="#3d6a26" transform="rotate(-112 111.7 70.7)"/>
<ellipse cx="103.3" cy="80.0" rx="6.4" ry="2.2" fill="#43702a" transform="rotate(-234 103.3 80.0)"/>
<ellipse cx="105.3" cy="69.1" rx="6.0" ry="2.3" fill="#4f7f2f" transform="rotate(-108 105.3 69.1)"/>
<ellipse cx="97.1" cy="77.9" rx="5.9" ry="2.5" fill="#4f7f2f" transform="rotate(-240 97.1 77.9)"/>
<ellipse cx="98.7" cy="67.3" rx="5.6" ry="2.4" fill="#6a9a3c" transform="rotate(-104 98.7 67.3)"/>
<ellipse cx="89.2" cy="75.1" rx="5.7" ry="2.5" fill="#4f7f2f" transform="rotate(-229 89.2 75.1)"/>
<ellipse cx="92.1" cy="65.2" rx="5.7" ry="2.4" fill="#6a9a3c" transform="rotate(-99 92.1 65.2)"/>
<ellipse cx="87.8" cy="69.3" rx="5.4" ry="2" fill="#4f7f2f" transform="rotate(-164 87.8 69.3)"/>
<ellipse cx="120.6" cy="66.7" rx="5.6" ry="2.5" fill="#6a9a3c" transform="rotate(-195 120.6 66.7)"/>
<ellipse cx="128.5" cy="59.3" rx="6.4" ry="2.1" fill="#6a9a3c" transform="rotate(-68 128.5 59.3)"/>
<ellipse cx="116.5" cy="61.5" rx="5.6" ry="2.1" fill="#6a9a3c" transform="rotate(-198 116.5 61.5)"/>
<ellipse cx="124.9" cy="55.1" rx="5.6" ry="2.3" fill="#43702a" transform="rotate(-56 124.9 55.1)"/>
<ellipse cx="112.2" cy="56.5" rx="5.7" ry="2.2" fill="#4f7f2f" transform="rotate(-204 112.2 56.5)"/>
<ellipse cx="119.1" cy="48.9" rx="5.5" ry="2.2" fill="#6a9a3c" transform="rotate(-73 119.1 48.9)"/>
<ellipse cx="108.3" cy="51.2" rx="5.5" ry="2.2" fill="#5c8c36" transform="rotate(-207 108.3 51.2)"/>
<ellipse cx="115.4" cy="43.5" rx="5.7" ry="2.4" fill="#5c8c36" transform="rotate(-67 115.4 43.5)"/>
<ellipse cx="103.5" cy="45.6" rx="5.9" ry="2.4" fill="#4f7f2f" transform="rotate(-204 103.5 45.6)"/>
<ellipse cx="111.5" cy="37.3" rx="6.4" ry="2.7" fill="#3d6a26" transform="rotate(-66 111.5 37.3)"/>
<ellipse cx="99.1" cy="39.5" rx="5.8" ry="2.1" fill="#6a9a3c" transform="rotate(-198 99.1 39.5)"/>
<ellipse cx="105.9" cy="32.6" rx="5.3" ry="2.1" fill="#5c8c36" transform="rotate(-76 105.9 32.6)"/>
<ellipse cx="101.3" cy="33.4" rx="5.4" ry="2" fill="#4f7f2f" transform="rotate(-128 101.3 33.4)"/>
<ellipse cx="151.4" cy="60.1" rx="5.3" ry="2.0" fill="#5c8c36" transform="rotate(-88 151.4 60.1)"/>
<ellipse cx="156.3" cy="69.4" rx="6.5" ry="2.4" fill="#4f7f2f" transform="rotate(38 156.3 69.4)"/>
<ellipse cx="156.5" cy="55.2" rx="6.1" ry="2.1" fill="#43702a" transform="rotate(-101 156.5 55.2)"/>
<ellipse cx="161.9" cy="65.5" rx="6.0" ry="2.3" fill="#4f7f2f" transform="rotate(46 161.9 65.5)"/>
<ellipse cx="162.9" cy="50.4" rx="6.6" ry="2.3" fill="#6a9a3c" transform="rotate(-100 162.9 50.4)"/>
<ellipse cx="168.6" cy="59.9" rx="5.4" ry="2.5" fill="#43702a" transform="rotate(34 168.6 59.9)"/>
<ellipse cx="170.4" cy="46.5" rx="6.2" ry="2.4" fill="#5c8c36" transform="rotate(-91 170.4 46.5)"/>
<ellipse cx="174.7" cy="56.9" rx="5.9" ry="2.1" fill="#3d6a26" transform="rotate(46 174.7 56.9)"/>
<ellipse cx="175.7" cy="42.3" rx="6.3" ry="2.2" fill="#4f7f2f" transform="rotate(-102 175.7 42.3)"/>
<ellipse cx="181.2" cy="52.1" rx="5.6" ry="2.3" fill="#5c8c36" transform="rotate(41 181.2 52.1)"/>
<ellipse cx="181.5" cy="45.4" rx="5.4" ry="2" fill="#43702a" transform="rotate(-33 181.5 45.4)"/>
<ellipse cx="155.2" cy="73.9" rx="5.9" ry="2.5" fill="#43702a" transform="rotate(-67 155.2 73.9)"/>
<ellipse cx="155.7" cy="84.7" rx="6.1" ry="2.6" fill="#5c8c36" transform="rotate(61 155.7 84.7)"/>
<ellipse cx="163.3" cy="72.4" rx="6.3" ry="2.5" fill="#5c8c36" transform="rotate(-68 163.3 72.4)"/>
<ellipse cx="164.3" cy="83.0" rx="5.9" ry="2.5" fill="#4f7f2f" transform="rotate(54 164.3 83.0)"/>
<ellipse cx="171.2" cy="71.7" rx="5.9" ry="2.1" fill="#3d6a26" transform="rotate(-67 171.2 71.7)"/>
<ellipse cx="171.3" cy="82.5" rx="5.8" ry="2.7" fill="#43702a" transform="rotate(67 171.3 82.5)"/>
<ellipse cx="178.8" cy="70.6" rx="5.7" ry="2.2" fill="#5c8c36" transform="rotate(-71 178.8 70.6)"/>
<ellipse cx="179.9" cy="80.8" rx="5.7" ry="2.3" fill="#3d6a26" transform="rotate(59 179.9 80.8)"/>
<ellipse cx="182.3" cy="75.3" rx="5.4" ry="2" fill="#4f7f2f" transform="rotate(-8 182.3 75.3)"/>
<ellipse cx="115.0" cy="151.8" rx="6.1" ry="2.6" fill="#4f7f2f" transform="rotate(109 115.0 151.8)"/>
<ellipse cx="113.1" cy="142.4" rx="5.4" ry="2.3" fill="#5c8c36" transform="rotate(222 113.1 142.4)"/>
<ellipse cx="107.9" cy="152.9" rx="5.4" ry="2.6" fill="#43702a" transform="rotate(109 107.9 152.9)"/>
<ellipse cx="103.8" cy="145.0" rx="6.5" ry="2.5" fill="#6a9a3c" transform="rotate(205 103.8 145.0)"/>
<ellipse cx="100.1" cy="155.6" rx="6.5" ry="2.5" fill="#5c8c36" transform="rotate(111 100.1 155.6)"/>
<ellipse cx="98.7" cy="145.7" rx="5.2" ry="2.4" fill="#6a9a3c" transform="rotate(226 98.7 145.7)"/>
<ellipse cx="93.9" cy="156.5" rx="5.4" ry="2.6" fill="#6a9a3c" transform="rotate(102 93.9 156.5)"/>
<ellipse cx="90.5" cy="147.7" rx="5.7" ry="2.4" fill="#5c8c36" transform="rotate(218 90.5 147.7)"/>
<ellipse cx="85.4" cy="158.9" rx="6.3" ry="2.5" fill="#4f7f2f" transform="rotate(111 85.4 158.9)"/>
<ellipse cx="82.4" cy="149.3" rx="6.5" ry="2.3" fill="#5c8c36" transform="rotate(215 82.4 149.3)"/>
<ellipse cx="82.4" cy="154.3" rx="5.4" ry="2" fill="#5c8c36" transform="rotate(167 82.4 154.3)"/>
<ellipse cx="115.6" cy="133.5" rx="5.5" ry="2.4" fill="#3d6a26" transform="rotate(-205 115.6 133.5)"/>
<ellipse cx="120.8" cy="125.2" rx="6.0" ry="2.6" fill="#4f7f2f" transform="rotate(-88 120.8 125.2)"/>
<ellipse cx="111.0" cy="130.9" rx="5.7" ry="2.3" fill="#3d6a26" transform="rotate(-222 111.0 130.9)"/>
<ellipse cx="116.7" cy="121.3" rx="5.9" ry="2.6" fill="#3d6a26" transform="rotate(-76 116.7 121.3)"/>
<ellipse cx="105.1" cy="125.5" rx="5.4" ry="2.4" fill="#6a9a3c" transform="rotate(-207 105.1 125.5)"/>
<ellipse cx="111.3" cy="117.1" rx="6.1" ry="2.5" fill="#5c8c36" transform="rotate(-77 111.3 117.1)"/>
<ellipse cx="99.4" cy="121.8" rx="5.9" ry="2.5" fill="#3d6a26" transform="rotate(-208 99.4 121.8)"/>
<ellipse cx="104.1" cy="112.9" rx="6.2" ry="2.4" fill="#6a9a3c" transform="rotate(-95 104.1 112.9)"/>
<ellipse cx="100.3" cy="115.7" rx="5.4" ry="2" fill="#4f7f2f" transform="rotate(-143 100.3 115.7)"/>
<ellipse cx="151.7" cy="141.6" rx="5.3" ry="2.1" fill="#4f7f2f" transform="rotate(-49 151.7 141.6)"/>
<ellipse cx="150.1" cy="151.3" rx="5.9" ry="2.4" fill="#4f7f2f" transform="rotate(72 150.1 151.3)"/>
<ellipse cx="159.4" cy="142.8" rx="6.1" ry="2.4" fill="#3d6a26" transform="rotate(-39 159.4 142.8)"/>
<ellipse cx="156.7" cy="151.8" rx="5.6" ry="2.4" fill="#6a9a3c" transform="rotate(68 156.7 151.8)"/>
<ellipse cx="165.2" cy="144.0" rx="5.5" ry="2.4" fill="#43702a" transform="rotate(-40 165.2 144.0)"/>
<ellipse cx="162.6" cy="153.8" rx="6.4" ry="2.1" fill="#6a9a3c" transform="rotate(75 162.6 153.8)"/>
<ellipse cx="166.3" cy="148.4" rx="5.4" ry="2" fill="#5c8c36" transform="rotate(9 166.3 148.4)"/>
<ellipse cx="232.6" cy="79.5" rx="5.7" ry="2.2" fill="#5c8c36" transform="rotate(116 232.6 79.5)"/>
<ellipse cx="231.4" cy="70.2" rx="5.5" ry="2.2" fill="#4f7f2f" transform="rotate(229 231.4 70.2)"/>
<ellipse cx="226.3" cy="79.2" rx="5.4" ry="2.5" fill="#43702a" transform="rotate(114 226.3 79.2)"/>
<ellipse cx="223.7" cy="70.0" rx="6.4" ry="2.7" fill="#5c8c36" transform="rotate(222 223.7 70.0)"/>
<ellipse cx="220.0" cy="79.3" rx="5.3" ry="2.6" fill="#5c8c36" transform="rotate(111 220.0 79.3)"/>
<ellipse cx="218.9" cy="68.7" rx="6.4" ry="2.1" fill="#6a9a3c" transform="rotate(242 218.9 68.7)"/>
<ellipse cx="213.1" cy="79.6" rx="5.8" ry="2.3" fill="#43702a" transform="rotate(112 213.1 79.6)"/>
<ellipse cx="210.9" cy="69.8" rx="6.2" ry="2.0" fill="#3d6a26" transform="rotate(226 210.9 69.8)"/>
<ellipse cx="206.0" cy="79.9" rx="6.2" ry="2.3" fill="#3d6a26" transform="rotate(115 206.0 79.9)"/>
<ellipse cx="205.1" cy="69.5" rx="5.9" ry="2.0" fill="#5c8c36" transform="rotate(233 205.1 69.5)"/>
<ellipse cx="199.9" cy="79.2" rx="5.3" ry="2.2" fill="#4f7f2f" transform="rotate(113 199.9 79.2)"/>
<ellipse cx="199.3" cy="69.6" rx="5.5" ry="2.5" fill="#6a9a3c" transform="rotate(240 199.3 69.6)"/>
<ellipse cx="196.6" cy="74.3" rx="5.4" ry="2" fill="#43702a" transform="rotate(180 196.6 74.3)"/>
<ellipse cx="232.7" cy="66.9" rx="6.0" ry="2.4" fill="#6a9a3c" transform="rotate(-219 232.7 66.9)"/>
<ellipse cx="237.6" cy="57.8" rx="5.3" ry="2.0" fill="#5c8c36" transform="rotate(-87 237.6 57.8)"/>
<ellipse cx="226.2" cy="62.4" rx="5.3" ry="2.7" fill="#4f7f2f" transform="rotate(-219 226.2 62.4)"/>
<ellipse cx="230.8" cy="53.8" rx="5.3" ry="2.6" fill="#4f7f2f" transform="rotate(-85 230.8 53.8)"/>
<ellipse cx="219.0" cy="58.2" rx="5.4" ry="2.0" fill="#3d6a26" transform="rotate(-216 219.0 58.2)"/>
<ellipse cx="222.9" cy="48.6" rx="6.5" ry="2.4" fill="#4f7f2f" transform="rotate(-94 222.9 48.6)"/>
<ellipse cx="212.2" cy="54.6" rx="5.5" ry="2.1" fill="#5c8c36" transform="rotate(-221 212.2 54.6)"/>
<ellipse cx="215.6" cy="45.6" rx="5.5" ry="2.7" fill="#43702a" transform="rotate(-98 215.6 45.6)"/>
<ellipse cx="211.7" cy="48.3" rx="5.4" ry="2" fill="#3d6a26" transform="rotate(-150 211.7 48.3)"/>
<ellipse cx="242.9" cy="49.9" rx="5.6" ry="2.4" fill="#5c8c36" transform="rotate(-181 242.9 49.9)"/>
<ellipse cx="253.3" cy="45.6" rx="6.3" ry="2.7" fill="#4f7f2f" transform="rotate(-42 253.3 45.6)"/>
<ellipse cx="240.7" cy="40.9" rx="6.2" ry="2.4" fill="#5c8c36" transform="rotate(-165 240.7 40.9)"/>
<ellipse cx="251.2" cy="39.2" rx="5.5" ry="2.3" fill="#6a9a3c" transform="rotate(-36 251.2 39.2)"/>
<ellipse cx="238.9" cy="35.0" rx="6.0" ry="2.6" fill="#3d6a26" transform="rotate(-179 238.9 35.0)"/>
<ellipse cx="249.0" cy="31.5" rx="5.5" ry="2.2" fill="#5c8c36" transform="rotate(-41 249.0 31.5)"/>
<ellipse cx="236.8" cy="28.1" rx="6.2" ry="2.4" fill="#6a9a3c" transform="rotate(-183 236.8 28.1)"/>
<ellipse cx="249.0" cy="25.0" rx="6.6" ry="2.6" fill="#4f7f2f" transform="rotate(-25 249.0 25.0)"/>
<ellipse cx="241.7" cy="22.6" rx="5.4" ry="2" fill="#4f7f2f" transform="rotate(-104 241.7 22.6)"/>
<ellipse cx="261.5" cy="42.3" rx="6.4" ry="2.3" fill="#4f7f2f" transform="rotate(-119 261.5 42.3)"/>
<ellipse cx="270.9" cy="49.3" rx="6.4" ry="2.6" fill="#43702a" transform="rotate(12 270.9 49.3)"/>
<ellipse cx="265.9" cy="37.1" rx="6.2" ry="2.0" fill="#5c8c36" transform="rotate(-118 265.9 37.1)"/>
<ellipse cx="274.5" cy="43.8" rx="5.8" ry="2.2" fill="#43702a" transform="rotate(13 274.5 43.8)"/>
<ellipse cx="269.4" cy="32.3" rx="6.0" ry="2.2" fill="#43702a" transform="rotate(-127 269.4 32.3)"/>
<ellipse cx="278.3" cy="38.4" rx="5.5" ry="2.2" fill="#4f7f2f" transform="rotate(14 278.3 38.4)"/>
<ellipse cx="274.7" cy="26.3" rx="5.9" ry="2.1" fill="#3d6a26" transform="rotate(-115 274.7 26.3)"/>
<ellipse cx="282.0" cy="33.9" rx="5.3" ry="2.6" fill="#5c8c36" transform="rotate(25 282.0 33.9)"/>
<ellipse cx="279.3" cy="21.4" rx="5.3" ry="2.0" fill="#43702a" transform="rotate(-113 279.3 21.4)"/>
<ellipse cx="286.3" cy="28.2" rx="5.3" ry="2.7" fill="#5c8c36" transform="rotate(22 286.3 28.2)"/>
<ellipse cx="282.5" cy="15.3" rx="6.2" ry="2.6" fill="#6a9a3c" transform="rotate(-119 282.5 15.3)"/>
<ellipse cx="291.2" cy="23.4" rx="6.2" ry="2.3" fill="#43702a" transform="rotate(25 291.2 23.4)"/>
<ellipse cx="286.6" cy="10.1" rx="6.1" ry="2.0" fill="#3d6a26" transform="rotate(-121 286.6 10.1)"/>
<ellipse cx="295.5" cy="17.7" rx="6.2" ry="2.6" fill="#5c8c36" transform="rotate(22 295.5 17.7)"/>
<ellipse cx="293.0" cy="11.0" rx="5.4" ry="2" fill="#3d6a26" transform="rotate(-52 293.0 11.0)"/>
<ellipse cx="268.3" cy="55.4" rx="6.0" ry="2.6" fill="#4f7f2f" transform="rotate(-78 268.3 55.4)"/>
<ellipse cx="270.4" cy="66.3" rx="6.0" ry="2.6" fill="#5c8c36" transform="rotate(57 270.4 66.3)"/>
<ellipse cx="276.6" cy="54.5" rx="5.3" ry="2.4" fill="#4f7f2f" transform="rotate(-62 276.6 54.5)"/>
<ellipse cx="277.9" cy="63.5" rx="5.8" ry="2.0" fill="#4f7f2f" transform="rotate(49 277.9 63.5)"/>
<ellipse cx="282.6" cy="50.9" rx="6.2" ry="2.3" fill="#4f7f2f" transform="rotate(-75 282.6 50.9)"/>
<ellipse cx="284.4" cy="61.0" rx="5.3" ry="2.7" fill="#3d6a26" transform="rotate(51 284.4 61.0)"/>
<ellipse cx="290.8" cy="49.5" rx="5.9" ry="2.5" fill="#6a9a3c" transform="rotate(-62 290.8 49.5)"/>
<ellipse cx="291.6" cy="58.6" rx="5.3" ry="2.2" fill="#5c8c36" transform="rotate(47 291.6 58.6)"/>
<ellipse cx="293.2" cy="53.1" rx="5.4" ry="2" fill="#5c8c36" transform="rotate(-17 293.2 53.1)"/>
<ellipse cx="224.8" cy="105.1" rx="6.6" ry="2.3" fill="#6a9a3c" transform="rotate(108 224.8 105.1)"/>
<ellipse cx="221.2" cy="95.7" rx="6.5" ry="2.2" fill="#4f7f2f" transform="rotate(209 221.2 95.7)"/>
<ellipse cx="218.1" cy="105.6" rx="6.1" ry="2.1" fill="#5c8c36" transform="rotate(110 218.1 105.6)"/>
<ellipse cx="215.2" cy="96.4" rx="6.1" ry="2.5" fill="#3d6a26" transform="rotate(215 215.2 96.4)"/>
<ellipse cx="211.7" cy="105.9" rx="5.2" ry="2.0" fill="#43702a" transform="rotate(111 211.7 105.9)"/>
<ellipse cx="210.2" cy="96.9" rx="5.3" ry="2.2" fill="#6a9a3c" transform="rotate(230 210.2 96.9)"/>
<ellipse cx="204.9" cy="107.7" rx="5.9" ry="2.3" fill="#6a9a3c" transform="rotate(110 204.9 107.7)"/>
<ellipse cx="202.4" cy="97.4" rx="6.6" ry="2.4" fill="#43702a" transform="rotate(225 202.4 97.4)"/>
<ellipse cx="198.9" cy="109.6" rx="6.5" ry="2.0" fill="#6a9a3c" transform="rotate(103 198.9 109.6)"/>
<ellipse cx="195.2" cy="100.3" rx="5.9" ry="2.7" fill="#43702a" transform="rotate(209 195.2 100.3)"/>
<ellipse cx="191.1" cy="110.2" rx="6.5" ry="2.7" fill="#4f7f2f" transform="rotate(115 191.1 110.2)"/>
<ellipse cx="189.7" cy="100.8" rx="5.4" ry="2.4" fill="#43702a" transform="rotate(221 189.7 100.8)"/>
<ellipse cx="184.7" cy="111.3" rx="6.3" ry="2.4" fill="#4f7f2f" transform="rotate(113 184.7 111.3)"/>
<ellipse cx="183.2" cy="101.6" rx="5.5" ry="2.6" fill="#6a9a3c" transform="rotate(224 183.2 101.6)"/>
<ellipse cx="178.3" cy="111.4" rx="5.4" ry="2.7" fill="#6a9a3c" transform="rotate(115 178.3 111.4)"/>
<ellipse cx="175.6" cy="102.8" rx="6.2" ry="2.3" fill="#6a9a3c" transform="rotate(217 175.6 102.8)"/>
<ellipse cx="175.3" cy="107.4" rx="5.4" ry="2" fill="#43702a" transform="rotate(171 175.3 107.4)"/>
<ellipse cx="206.4" cy="132.8" rx="5.7" ry="2.2" fill="#43702a" transform="rotate(114 206.4 132.8)"/>
<ellipse cx="204.5" cy="124.2" rx="5.4" ry="2.6" fill="#4f7f2f" transform="rotate(220 204.5 124.2)"/>
<ellipse cx="201.0" cy="135.1" rx="5.6" ry="2.3" fill="#6a9a3c" transform="rotate(98 201.0 135.1)"/>
<ellipse cx="196.2" cy="126.5" rx="6.4" ry="2.1" fill="#6a9a3c" transform="rotate(209 196.2 126.5)"/>
<ellipse cx="193.8" cy="137.8" rx="6.4" ry="2.2" fill="#4f7f2f" transform="rotate(101 193.8 137.8)"/>
<ellipse cx="190.7" cy="127.9" rx="5.6" ry="2.7" fill="#5c8c36" transform="rotate(219 190.7 127.9)"/>
<ellipse cx="189.8" cy="133.0" rx="5.4" ry="2" fill="#43702a" transform="rotate(164 189.8 133.0)"/>
<ellipse cx="281.3" cy="86.3" rx="5.6" ry="2.5" fill="#6a9a3c" transform="rotate(-18 281.3 86.3)"/>
<ellipse cx="275.7" cy="94.3" rx="6.3" ry="2.4" fill="#3d6a26" transform="rotate(92 275.7 94.3)"/>
<ellipse cx="289.5" cy="89.7" rx="6.2" ry="2.0" fill="#6a9a3c" transform="rotate(-20 289.5 89.7)"/>
<ellipse cx="284.4" cy="98.1" rx="6.3" ry="2.5" fill="#43702a" transform="rotate(84 284.4 98.1)"/>
<ellipse cx="297.6" cy="93.7" rx="6.5" ry="2.4" fill="#5c8c36" transform="rotate(-19 297.6 93.7)"/>
<ellipse cx="292.1" cy="101.5" rx="5.7" ry="2.2" fill="#43702a" transform="rotate(84 292.1 101.5)"/>
<ellipse cx="296.3" cy="98.2" rx="5.4" ry="2" fill="#6a9a3c" transform="rotate(27 296.3 98.2)"/>
<ellipse cx="290.9" cy="118.1" rx="5.6" ry="2.4" fill="#6a9a3c" transform="rotate(-35 290.9 118.1)"/>
<ellipse cx="288.7" cy="126.9" rx="6.1" ry="2.1" fill="#3d6a26" transform="rotate(66 288.7 126.9)"/>
<ellipse cx="298.4" cy="119.7" rx="5.9" ry="2.2" fill="#43702a" transform="rotate(-41 298.4 119.7)"/>
<ellipse cx="294.6" cy="129.4" rx="5.8" ry="2.1" fill="#5c8c36" transform="rotate(84 294.6 129.4)"/>
<ellipse cx="306.6" cy="123.5" rx="5.4" ry="2.4" fill="#43702a" transform="rotate(-25 306.6 123.5)"/>
<ellipse cx="303.7" cy="131.0" rx="5.6" ry="2.4" fill="#4f7f2f" transform="rotate(69 303.7 131.0)"/>
<ellipse cx="314.0" cy="124.5" rx="5.8" ry="2.3" fill="#3d6a26" transform="rotate(-37 314.0 124.5)"/>
<ellipse cx="311.5" cy="133.2" rx="5.6" ry="2.5" fill="#6a9a3c" transform="rotate(68 311.5 133.2)"/>
<ellipse cx="314.6" cy="129.5" rx="5.4" ry="2" fill="#43702a" transform="rotate(16 314.6 129.5)"/>
<ellipse cx="258.1" cy="126.0" rx="5.7" ry="2.5" fill="#3d6a26" transform="rotate(105 258.1 126.0)"/>
<ellipse cx="254.4" cy="116.7" rx="6.4" ry="2.2" fill="#43702a" transform="rotate(216 254.4 116.7)"/>
<ellipse cx="251.4" cy="128.1" rx="5.7" ry="2.5" fill="#6a9a3c" transform="rotate(99 251.4 128.1)"/>
<ellipse cx="247.7" cy="118.1" rx="6.4" ry="2.6" fill="#4f7f2f" transform="rotate(223 247.7 118.1)"/>
<ellipse cx="242.6" cy="129.7" rx="5.8" ry="2.5" fill="#6a9a3c" transform="rotate(114 242.6 129.7)"/>
<ellipse cx="240.7" cy="120.3" rx="5.9" ry="2.1" fill="#3d6a26" transform="rotate(224 240.7 120.3)"/>
<ellipse cx="239.8" cy="125.8" rx="5.4" ry="2" fill="#6a9a3c" transform="rotate(165 239.8 125.8)"/>
<ellipse cx="185.6" cy="198.1" rx="5.5" ry="2.1" fill="#5c8c36" transform="rotate(-71 185.6 198.1)"/>
<ellipse cx="187.6" cy="208.7" rx="6.6" ry="2.1" fill="#6a9a3c" transform="rotate(54 187.6 208.7)"/>
<ellipse cx="196.2" cy="197.6" rx="6.3" ry="2.0" fill="#5c8c36" transform="rotate(-49 196.2 197.6)"/>
<ellipse cx="195.7" cy="207.7" rx="6.5" ry="2.5" fill="#43702a" transform="rotate(56 195.7 207.7)"/>
<ellipse cx="202.3" cy="195.6" rx="6.1" ry="2.4" fill="#6a9a3c" transform="rotate(-70 202.3 195.6)"/>
<ellipse cx="202.7" cy="206.1" rx="5.4" ry="2.0" fill="#3d6a26" transform="rotate(63 202.7 206.1)"/>
<ellipse cx="205.7" cy="200.6" rx="5.4" ry="2" fill="#3d6a26" transform="rotate(-7 205.7 200.6)"/>
</g>
<!-- people -->
<g filter="url(#b1)">
<!-- left standing -->
<path d="M14 262l4 -10 46 6-6 40-22 34-24 4z" fill="#3b414d"/>
<path d="M34 164c10-8 24-8 36-2l10 30 8 42-10 10-14 16-22 8-30-8-6-6 12-60z" fill="#5b7ea5"/>
<path d="M60 168l8 52-6 34-10-40z" fill="#d9d6d2"/>
<path d="M70 240c6-4 14-4 20 2l-2 14-14 4z" fill="#d7a386"/>
<ellipse cx="68" cy="160" rx="10" ry="13" fill="#e0b296"/>
<path d="M50 150c2-14 22-18 34-6 2 6 0 10-2 14-8-8-18-6-28 4-3-4-4-8-4-12z" fill="#2b2a27"/>
<path d="M78 246c4-6 14-6 18 0l-2 22c-4 4-10 4-12 0z" fill="none" stroke="#e8531c" stroke-width="4"/>
<!-- center woman -->
<path d="M142 300h40l-4 56-16 10-18-10z" fill="#25416f"/>
<path d="M126 252c2-30 8-50 14-62l36-2c8 14 12 34 14 62l-14 22-36 2z" fill="#2f5f9b"/>
<path d="M124 212c4-14 12-22 22-24l8 60-6 72-18-6c-4-20-4-40 0-60z" fill="#f1bf1d"/>
<path d="M170 188c10 2 18 10 20 24l4 54c2 14 2 28-2 42l-14 6-8-70z" fill="#f1bf1d"/>
<ellipse cx="161" cy="188" rx="11" ry="13" fill="#e2b69c"/>
<path d="M146 186c-2-14 8-24 18-22 10 0 16 10 12 24-4-10-10-14-16-12-6 0-10 4-14 10z" fill="#e4e0dc"/>
<ellipse cx="150" cy="272" rx="10" ry="8" fill="#d9a98c"/>
<ellipse cx="178" cy="270" rx="9" ry="7" fill="#d9a98c"/>
<!-- man -->
<path d="M170 300c14-12 36-14 50-2l16 40-20 30-48-6-8-30z" fill="#b06c3a"/>
<path d="M176 352l52-2 16 40-20 16-44-8-12-24z" fill="#5c5446"/>
<ellipse cx="207" cy="268" rx="12" ry="15" fill="#c99274"/>
<path d="M194 262c0-14 12-20 24-14 6 4 8 10 6 18-6-8-16-10-30-4z" fill="#3a2a20"/>
<path d="M198 276c4 10 14 12 20 4l-2 12c-6 4-12 4-16-2z" fill="#4a3526"/>
<ellipse cx="160" cy="334" rx="12" ry="9" fill="#c78e6e"/>
<!-- right woman -->
<path d="M246 372c14-8 40-8 62 0l6 34-30 14-38-16z" fill="#6b5b49"/>
<path d="M204 330c10-20 30-44 52-54 20-4 40 2 56 14v92c-16 2-30-2-40-10l-12-40-40 22-22-6z" fill="#7ba3cd"/>
<path d="M200 336l-34 10-4 8 40 4z" fill="#6b4630"/>
<path d="M214 356l-40 24 8 8 42-18z" fill="#6b4630"/>
<ellipse cx="231" cy="281" rx="13" ry="15" fill="#5b3b2b"/>
<path d="M226 288c4 4 10 4 14-2l-2 6c-4 3-8 3-12 0z" fill="#f4f0ea"/>
<path d="M204 268c10-10 26-14 44-10 10 4 16 10 20 16-20-6-44-4-62 6-4-4-4-8-2-12z" fill="#4a3a31"/>
<path d="M216 262c2-10 10-16 20-16s16 6 18 16c-12-4-26-4-38 0z" fill="#54433a"/>
<path d="M252 300c8-4 14 0 16 10l-4 30c-6 4-12 2-14-4z" fill="#2b1f18"/>
<!-- kneeling woman -->
<path d="M2 352c10-30 30-50 56-58l30 6 22 30 12 14-6 14-30-8 16 34-34 18-40 4-28-10z" fill="#c9946b"/>
<path d="M0 392c20-12 50-14 80-6l14 18-20 16-60 8-14-8z" fill="#c58f66"/>
<path d="M106 342l42 8 2 8-44 0z" fill="#dcae90"/>
<path d="M96 378l30 20-4 8-32-16z" fill="#dcae90"/>
<path d="M2 396l12-4 16 34-10 6z" fill="#a5644a"/>
<ellipse cx="77" cy="286" rx="12" ry="14" fill="#e6b99c"/>
<path d="M62 292c0 16 6 34 18 44l8-4c-8-12-10-26-8-40z" fill="#8d8a8c"/>
<path d="M50 282c4-12 20-22 34-20 10 2 16 8 18 18-12-6-28-6-46 6-4 0-6-2-6-4z" fill="#54463c"/>
<path d="M60 274c0-10 8-16 18-16 8 0 14 6 14 14-10-4-22-2-32 2z" fill="#5d4e43"/>
</g>
</g></g>

<!-- ============ GARDEN ============ -->
<g clip-path="url(#cga)"><g transform="translate(0,246)">
<rect x="0" y="0" width="288.100" height="223.600" fill="url(#ggar)"/>
<g filter="url(#b2)">
<path d="M0 70c14-8 30-6 44 0 10-10 24-12 36-6 8-2 14 2 20 8l4 50H0z" fill="#3f5533"/>
<path d="M98 88c4-30 20-60 44-70 18 0 28 20 30 50l-4 40H100z" fill="#557f30"/>
<path d="M120 60c8-20 20-30 34-28 8 10 10 26 8 44-14 4-30 0-42-16z" fill="#68973a"/>
<path d="M232 74c16-8 36-10 56-6v60h-56z" fill="#5f7f3d"/>
<rect x="0" y="118" width="288" height="40" fill="#5c7f37"/>
<ellipse cx="150" cy="160" rx="70" ry="14" fill="#a3c04a"/>
<ellipse cx="250" cy="150" rx="40" ry="24" fill="#6f9a3b"/>
<ellipse cx="40" cy="168" rx="50" ry="16" fill="#4f6f33"/>
<ellipse cx="130" cy="210" rx="110" ry="12" fill="#6a4534"/><ellipse cx="30" cy="204" rx="40" ry="10" fill="#55803a"/><ellipse cx="190" cy="196" rx="40" ry="10" fill="#6d9a40"/>
<ellipse cx="260" cy="200" rx="24" ry="14" fill="#86c03a"/>
<ellipse cx="205" cy="178" rx="12" ry="22" fill="#8fb65a"/>
<ellipse cx="50" cy="214" rx="30" ry="9" fill="#5e9a36"/>
<ellipse cx="215" cy="219" rx="40" ry="7" fill="#5e9a36"/>
</g>
<g filter="url(#b1)">
<path d="M93 110l34-2 3 6-2 32-12 4-2-30-22 0z" fill="#a9714c"/>
<rect x="10.600" y="139" width="9" height="43" fill="#5a3a2b"/>
<rect x="130" y="88" width="3.600" height="60" fill="#7a5843"/>
<path d="M0 117l132-15M133 102l155-9" stroke="#d9d2c8" stroke-width="1.300" fill="none"/>
<path d="M0 152l40-5 120 18 104 4" stroke="#b9a89a" stroke-width="1" fill="none"/>
<path d="M247 70v90M252 76v90M259 70v96" stroke="#a4714e" stroke-width="1.200" fill="none"/>
<g fill="#f29a16"><circle cx="6" cy="184" r="2.600"/><circle cx="16" cy="180" r="2.400"/><circle cx="24" cy="188" r="2.400"/><circle cx="4" cy="194" r="2.400"/><circle cx="30" cy="196" r="2.200"/><circle cx="22" cy="178" r="2"/><circle cx="104" cy="156" r="3"/></g>
<!-- man -->
<path d="M166 122c14-6 40-6 62 0l2 50-4 46-22 2-6-70-14 70-20 2z" fill="#5b84b3"/>
<path d="M172 40c12-8 40-10 54 2l14 48-10 6-8 32c-18 6-40 6-54 0l4-40z" fill="#5c6056"/>
<path d="M164 50l12-8 4 40-14 8c-4-12-4-26-2-40z" fill="#666a5f"/>
<path d="M166 90l10 4-2 26-6 2c-4-10-4-20-2-32z" fill="#c28f70"/>
<path d="M232 94l10-4 8 30 2 20-8 2-8-24z" fill="#c28f70"/>
<rect x="238" y="106" width="9" height="3.500" fill="#2a2a2a"/>
<ellipse cx="181" cy="26" rx="12" ry="15" fill="#c99a7b"/>
<path d="M166 20c0-14 12-22 24-20 10 2 14 10 12 20-8-8-20-8-32 6-3-2-4-4-4-6z" fill="#8e8e8b"/>
<path d="M172 32c4 8 12 10 18 6l-2 8c-6 2-12 0-16-6z" fill="#d6d3cf"/>
<!-- woman -->
<path d="M52 128c6-4 14-4 20 0l-4 30-14 30-8 28-14 1c2-32 8-62 20-89z" fill="#5b8bbb"/>
<path d="M86 156c4-3 9-3 13 0l4 42-9 3z" fill="#4f7fb0"/>
<path d="M48 120c8-8 20-11 30-9 12 2 22 8 30 16l18 34-10 9-16-22-22 22-16-4c-6-14-12-30-14-46z" fill="#b8d6e8"/>
<path d="M62 168l6-4 18 36-7 4z" fill="#d4a688"/>
<path d="M114 164l7-2 6 34-8 3z" fill="#d4a688"/>
<ellipse cx="94" cy="144" rx="9" ry="10" fill="#dba98c"/>
<path d="M82 112c10-3 20 2 25 12 3 9 2 18-1 24-3-6-7-9-12-8-2 8-8 14-16 16-4-8-6-18-4-28 1-7 4-13 8-16z" fill="#dcae7e"/>
<path d="M84 118c6-2 12 0 16 6-6 2-12 8-16 16-2-8-2-16 0-22z" fill="#e8c49a"/>
<ellipse cx="112" cy="207" rx="17" ry="11" fill="#6a3e2a"/>
<ellipse cx="108" cy="203" rx="9" ry="5" fill="#8a5438"/>
</g>
</g></g>
<!-- ============ BANNER ============ -->
<g fill="#fdbe11">
<circle cx="56.500" cy="527.500" r="29.600"/>
<g id="rays"><path d="M56.500 476.500l8.600 17.500h-17.200z"/><path d="M56.500 578.500l8.600-17.500h-17.200z"/><path d="M5.500 527.500l17.500-8.600v17.200z"/><path d="M107.500 527.500l-17.500-8.600v17.200z"/></g>
<use href="#rays" transform="rotate(45 56.500 527.500)"/>
</g>
<text x="115.100" y="534.500" font-family="'Liberation Sans',sans-serif" font-weight="700" font-size="51.600" fill="#0e9aa7" stroke="#0e9aa7" stroke-width="3" stroke-linejoin="miter" stroke-miterlimit="3" textLength="487" lengthAdjust="spacingAndGlyphs">ANNUAL REPORT</text>
<text x="129.100" y="557.800" font-family="'Liberation Sans',sans-serif" font-weight="700" font-size="21" fill="#fb6b3d" stroke="#fb6b3d" stroke-width="1.700" stroke-linejoin="miter" stroke-miterlimit="3" textLength="464.300" lengthAdjust="spacingAndGlyphs">Improving natural spaces since 1960</text>

<!-- ============ VOLUNTEERS ============ -->
<g clip-path="url(#cvo)"><g transform="translate(0,587)">
<rect x="0" y="0" width="267.200" height="201.500" fill="url(#gwall)"/>
<g filter="url(#b1)">
<!-- right person -->
<path d="M160 0h70l2 8c-14 8-50 8-70 0z" fill="#c9977a"/>
<path d="M157 14c10-8 24-12 36-12 10 6 26 6 38 0 14 2 26 6 36 12v188H168l-8-100-12 2-22-30c10-24 20-44 31-60z" fill="#0a63ab"/>
<path d="M170 40c20 8 60 8 97 0v20c-30 10-70 10-97 0z" fill="#0f6cb6" opacity=".6"/>
<path d="M126 76l22 30-16 10-30-14-6-40 14-6z" fill="#c9977a"/>
<!-- crushed bottle -->
<path d="M100 14l8-2 4 10 8 20 2 30 6 24-10 12-20 2-12-14-2-28 8-30z" fill="#cdc6bd" opacity=".9"/>
<path d="M98 40l16 10-4 20 12 16-16 10-14-20z" fill="#e6e1da" opacity=".6"/>
<rect x="100" y="16" width="11" height="3" fill="#e8343a"/>
<path d="M84 52c6-6 14-4 18 2l-2 14-14 6c-4-8-4-16-2-22z" fill="#d3a184"/>
<!-- left person -->
<path d="M30 0h34l-4 8c-8 4-18 4-26 0z" fill="#c9977a"/>
<path d="M0 12c10-6 22-10 32-10 8 6 20 6 28 0 10 4 18 10 24 18l6 30-8 8 2 60 4 40-10 46H0z" fill="#0a63ab"/>
<path d="M0 90c20 10 50 10 82 0v30c-30 12-60 12-82 0z" fill="#0f6cb6" opacity=".5"/>
<path d="M82 116l30 22 10 6-4 10-20-2-24-14z" fill="#c9977a"/>
<path d="M104 142c10-4 26-2 36 6l-4 8-30-4z" fill="#d3a184"/>
<path d="M0 150c14 6 30 12 50 14l16 6-6 12-20 2-40-12z" fill="#c9977a"/>
<!-- bag -->
<path d="M50 176c10-16 30-24 56-26 24 2 44 12 56 30l10 22H56z" fill="#1b1b19"/>
<path d="M70 170c16-8 34-10 52-6l-10 38H84z" fill="#2b2b28"/>
<path d="M124 160c10 8 16 24 18 42h-14z" fill="#0f0f0e"/>
<!-- bottles -->
<path d="M193 36h10l2 10c8 8 10 18 10 30l-2 30 2 24-6 8h-20l-6-8 2-26-2-28c0-12 2-22 8-30z" fill="#4f86c4" opacity=".95"/>
<path d="M190 60c6-4 14-4 20 0l-2 40c-4 4-12 4-16 0z" fill="#8fb4dc" opacity=".7"/>
<path d="M188 116c6 6 16 6 24 0v16c-8 6-16 6-24 0z" fill="#9fc0e2" opacity=".7"/>
<rect x="192" y="37" width="11" height="2.600" fill="#e8343a"/>
<path d="M232 44h14l2 10c4 4 6 10 6 18v44c0 4-2 6-6 6h-18c-4 0-6-2-6-6V72c0-8 2-14 6-18z" fill="#ebe7df"/>
<rect x="232" y="46" width="14" height="2.600" fill="#3fae4a"/>
<path d="M258 60c4-4 8-4 10 0v50l-12-4z" fill="#4f86c2"/>
<!-- right hand -->
<path d="M190 82c10-6 30-6 44 2l14 12 20 10v18l-26-10-20 4-30-8c-6-8-6-20-2-28z" fill="#c9977a"/>
<path d="M190 92h28M190 100h26M194 108h20" stroke="#b07f63" stroke-width="1.200" fill="none"/>
<circle cx="244.700" cy="101" r="8.400" fill="#1d1d1d"/>
<circle cx="246" cy="100" r="5" fill="#cfd3d8"/>
</g>
<text x="30" y="71.600" font-family="'Liberation Sans',sans-serif" font-weight="700" font-style="italic" font-size="8.600" fill="#e9eef4" textLength="44.500" lengthAdjust="spacingAndGlyphs" transform="rotate(4 30 71.600)">VOLUNTEER</text>
<text x="175.400" y="53.600" font-family="'Liberation Sans',sans-serif" font-weight="700" font-style="italic" font-size="9.400" fill="#e9eef4" textLength="54.600" lengthAdjust="spacingAndGlyphs" transform="rotate(2 175.400 53.600)">VOLUNTEER</text>
</g></g>
<!-- ============ GREEN BOX ============ -->
<rect x="278.200" y="587" width="333" height="201.500" fill="#4caf50"/>
<text x="444.900" y="626" text-anchor="middle" font-family="'Liberation Sans',sans-serif" font-weight="700" font-size="32" fill="#fff" textLength="266.400" lengthAdjust="spacingAndGlyphs">We need your help!</text>
<g font-family="'Liberation Serif',serif" font-size="14.300" fill="#fff">
<text x="292.500" y="658.200" textLength="307.700" lengthAdjust="spacing">Volunteering to reduce waste plays a crucial role in</text>
<text x="292.500" y="674.200" textLength="307.700" lengthAdjust="spacing">protecting our environment and building more</text>
<text x="292.500" y="690.200" textLength="307.700" lengthAdjust="spacing">sustainable communities. By participating in clean-up</text>
<text x="292.500" y="706.200" textLength="307.700" lengthAdjust="spacing">efforts, recycling programs, and education initiatives,</text>
<text x="292.500" y="722.200" textLength="307.700" lengthAdjust="spacing">volunteers help divert waste from landfills, conserve</text>
<text x="292.500" y="738.200" textLength="307.700" lengthAdjust="spacing">natural resources, and raise awareness about responsible</text>
<text x="292.500" y="754.200" textLength="307.700" lengthAdjust="spacing">consumption. These efforts not only improve local</text>
<text x="292.500" y="770.200" textLength="243" lengthAdjust="spacing">ecosystems but also inspire long term change.</text>
</g>

</svg>
<!-- thumb 1: Financial Business Flyer -->
<svg class="th" style="left:662.400px;top:241.400px" width="104.800" height="137.600" viewBox="0 0 104.800 137.600">
<defs>
<linearGradient id="t1a" x1="0" y1="0" x2="1" y2="0"><stop offset="0" stop-color="#0c2236"/><stop offset=".2" stop-color="#1c5a96"/><stop offset=".45" stop-color="#5da6e0"/><stop offset=".75" stop-color="#d6e6f4"/><stop offset="1" stop-color="#eef2f6"/></linearGradient>
<linearGradient id="t1b" x1="0" y1="0" x2="0" y2="1"><stop offset="0" stop-color="#000" stop-opacity=".55"/><stop offset=".45" stop-color="#1a5a9a" stop-opacity=".1"/><stop offset="1" stop-color="#8cc0ea" stop-opacity=".55"/></linearGradient>
<linearGradient id="t1c" x1="0" y1="0" x2="1" y2="0"><stop offset="0" stop-color="#0d8f9b"/><stop offset="1" stop-color="#3a86c8"/></linearGradient>
<clipPath id="t1k"><rect width="104.800" height="137.600"/></clipPath>
</defs>
<g clip-path="url(#t1k)">
<rect width="104.800" height="137.600" fill="#fff"/>
<path d="M0 0h104.800v48L0 57z" fill="url(#t1c)"/>
<path d="M0 0h104.800v46L0 47z" fill="url(#t1a)"/>
<path d="M0 0h104.800v46L0 47z" fill="url(#t1b)"/>
<g filter="url(#b0)"><ellipse cx="79" cy="18" rx="15" ry="19" fill="#c89c84"/><path d="M62 8c2-8 12-10 22-9 8 0 14 3 14 10-8-4-24-4-36 0z" fill="#2a1f1a"/><path d="M74 27.500c4 2 8 2 12 0-1.500 3-3.500 4-6 4s-4.500-1-6-4z" fill="#f5f0ec"/><path d="M69 14.500h9M82 14.500h9" stroke="#4a3a34" stroke-width="1" fill="none"/><path d="M66 30c4 8 24 8 28 0-2 8-8 12-14 12s-12-4-14-12z" fill="#b08a76" opacity=".6"/><path d="M60 44c6-8 30-8 44-2v6l-44 2z" fill="#a9cdec"/><rect x="92" y="0" width="13" height="30" fill="#e9eef3" opacity=".8"/></g>
<path d="M0 47l104.800-3v2L0 50z" fill="#8ecbf0" opacity=".6"/>
<text x="5" y="43.600" font-family="'Liberation Sans',sans-serif" font-size="7.300" fill="#fff" textLength="81" lengthAdjust="spacingAndGlyphs">Your Partner for Success</text>
<g fill="#c6453a"><rect x="10" y="58.400" width="44" height="1.100"/><rect x="10" y="61" width="42" height="1.100"/><rect x="10" y="63.600" width="26" height="1.100"/></g>
<rect x="6" y="70.600" width="26.500" height="10" fill="#4a2410"/><rect x="8" y="73" width="14" height="4" fill="#c8641a"/><circle cx="27.500" cy="75.500" r="3.500" fill="#f0a020"/>
<g fill="#9a9a9a"><rect x="35" y="70.600" width="20" height=".8"/><rect x="35" y="73.200" width="21" height=".8"/><rect x="35" y="75.800" width="20" height=".8"/><rect x="35" y="78.400" width="21" height=".8"/><rect x="10" y="84.400" width="45" height=".8"/><rect x="10" y="87" width="45" height=".8"/>
<rect x="10" y="96.600" width="44" height=".8"/><rect x="10" y="99.200" width="45" height=".8"/><rect x="10" y="101.800" width="44" height=".8"/><rect x="10" y="104.400" width="45" height=".8"/><rect x="10" y="107" width="16" height=".8"/>
<rect x="69" y="58.600" width="19" height=".9"/><rect x="69" y="62.900" width="15" height=".9"/><rect x="69" y="67.200" width="14" height=".9"/><rect x="69" y="71.500" width="10" height=".9"/><rect x="69" y="75.800" width="13" height=".9"/><rect x="69" y="80.100" width="9" height=".9"/><rect x="69" y="84.400" width="18" height=".9"/><rect x="69" y="88.700" width="18" height=".9"/><rect x="69" y="93" width="11" height=".9"/></g>
<g fill="#f0a060"><rect x="5" y="90.400" width="53" height=".9"/><rect x="5" y="93" width="54" height=".9"/></g>
<path d="M42 137.600v-22c20-10 44-16 62.800-20v42z" fill="#f0ebe6"/>
<path d="M0 111c14 2 30 4 44 5l16 2v19.600H0z" fill="#d9cfb4"/>
<path d="M42 116l17 2v19.600H42z" fill="#c9b98e"/>
<rect x="5" y="119.400" width="44" height=".9" fill="#4aa0d8"/>
<path d="M75 108.600l5-1 3 5-5 2z" fill="#e03a2a"/><path d="M79 109l4-1 1 5-4 1z" fill="#f0901a"/>
<g fill="#8a8a8a"><rect x="70" y="117" width="20" height=".8"/><rect x="74" y="121" width="15" height=".7"/><rect x="74" y="123.600" width="20" height=".7"/><rect x="74" y="126.200" width="22" height=".7"/><rect x="74" y="128.800" width="19" height=".7"/></g>
</g></svg>
<!-- thumb 2: MLK -->
<svg class="th" style="left:854.200px;top:238.200px" width="111.300" height="143.700" viewBox="0 0 111.300 143.700">
<defs><pattern id="t2p" width="7" height="2.600" patternUnits="userSpaceOnUse"><rect width="7" height="2.600" fill="#7b3fb4"/><rect y="0" width="7" height=".7" fill="#e8262a"/><rect x="2" y="1.300" width="4" height=".6" fill="#5a4fd0"/></pattern></defs>
<rect width="111.300" height="143.700" fill="#e81416"/>
<rect x="0" y="23" width="72.500" height="83" fill="url(#t2p)"/>
<g fill="#e81416" opacity=".75"><rect x="24" y="23" width="6" height="12"/><rect x="48" y="40" width="8" height="8"/><rect x="40" y="74" width="10" height="12"/><rect x="58" y="86" width="6" height="20"/><rect x="30" y="92" width="8" height="14"/></g>
<g font-family="'Liberation Sans',sans-serif" font-weight="700" fill="#fff">
<text x="8" y="14.600" font-size="2.700" textLength="48" lengthAdjust="spacingAndGlyphs">JOIN US IN COMMEMORATING</text>
<text x="8" y="18.200" font-size="2.700" textLength="39" lengthAdjust="spacingAndGlyphs">THE LIFE AND VISION OF</text>
<g font-size="14" stroke="#fff" stroke-width=".5">
<text x="7" y="37.900" textLength="27" lengthAdjust="spacingAndGlyphs">DR.</text>
<text x="7" y="53.400" textLength="62.400" lengthAdjust="spacingAndGlyphs">MARTIN</text>
<text x="7" y="69.300" textLength="62" lengthAdjust="spacingAndGlyphs">LUTHER</text>
<text x="7" y="84.600" textLength="39" lengthAdjust="spacingAndGlyphs">KING</text>
<text x="7" y="100.500" textLength="23" lengthAdjust="spacingAndGlyphs">JR.</text>
</g>
<text x="79" y="28.600" font-size="2.600">CITY CENTER</text><text x="79" y="32" font-size="2.600">PARK</text>
<text x="79" y="56.600" font-size="2.600">JANUARY 15</text><text x="79" y="60" font-size="2.600">20XX</text>
<text x="79" y="84.400" font-size="2.600">ORGANIZED BY</text>
</g>
<g font-family="'Liberation Sans',sans-serif" fill="#ffd9d6" font-size="2.600">
<text x="79" y="38.800">123 45TH AVE</text><text x="79" y="42.300">CHICAGO, IL</text><text x="79" y="45.800">54321</text>
<text x="79" y="67">10:00 AM</text><text x="79" y="74">2:00 PM</text>
<text x="79" y="91.500">ROMAN VISTA</text><text x="79" y="95">HIGH SCHOOL</text>
<text x="7" y="114.500" textLength="87" lengthAdjust="spacingAndGlyphs">Join us for a celebration of the life and legacy of Dr. Martin</text>
<text x="7" y="118.700" textLength="93" lengthAdjust="spacingAndGlyphs">Luther King Jr. at our annual parade on January 15th. March</text>
<text x="7" y="122.900" textLength="92" lengthAdjust="spacingAndGlyphs">with us as we honor Dr. King's vision of equality, justice, and</text>
<text x="7" y="127.100" textLength="46" lengthAdjust="spacingAndGlyphs">peace for all. All are welcome!</text>
</g>
</svg>
<!-- thumb 3: Therapy poster -->
<svg class="th" style="left:1058.100px;top:238.200px" width="93.400" height="143.800" viewBox="0 0 93.400 143.800">
<rect width="93.400" height="143.800" fill="#063a72"/>
<g fill="#0d4f8e">
<path d="M12 47l9 12h-4l7 11h-4l7 12h-5l7 12H14v11h-2V94H-2l7-12H0l7-12H3l7-11H5z"/>
<path d="M80 44l10 13h-4l8 12h-4l7 13h-5l6 12H82v16h-2V94H65l7-12h-5l7-13h-4l7-12h-4z"/>
</g>
<g fill="#fff"><rect x="11" y="56" width="1.500" height="1.500"/><rect x="18" y="52" width="1.500" height="1.500"/><rect x="30" y="59" width="1.500" height="1.500"/><rect x="41" y="51" width="1.500" height="1.500"/><rect x="52" y="61" width="1.500" height="1.500"/><rect x="60" y="54" width="1.500" height="1.500"/><rect x="64" y="59" width="1.500" height="1.500"/><rect x="71" y="56" width="1.500" height="1.500"/><rect x="79" y="53" width="1.500" height="1.500"/><rect x="6" y="67" width="1.500" height="1.500"/><rect x="18" y="69" width="1.500" height="1.500"/><rect x="26" y="75" width="1.500" height="1.500"/><rect x="12" y="76" width="1.500" height="1.500"/><rect x="68" y="62" width="1.500" height="1.500"/><rect x="80" y="70" width="1.500" height="1.500"/><rect x="74" y="78" width="1.500" height="1.500"/><rect x="66" y="79" width="1.500" height="1.500"/><rect x="62" y="84" width="1.500" height="1.500"/><rect x="15" y="84" width="1.500" height="1.500"/><rect x="22" y="96" width="1.500" height="1.500"/><rect x="9" y="102" width="1.500" height="1.500"/><rect x="76" y="86" width="1.500" height="1.500"/><rect x="72" y="92" width="1.500" height="1.500"/><rect x="83" y="98" width="1.500" height="1.500"/><rect x="70" y="103" width="1.500" height="1.500"/><rect x="58" y="90" width="1.500" height="1.500"/></g>
<path d="M29 77.400C30 68 36 61.500 45.400 59.900 55 61.500 61 68 62 77.400z" fill="#f6c31c"/>
<path d="M45.400 59.900C51 63 55 70 56 77.400h6C61 68 55 61.500 45.400 59.900z" fill="#e9a815"/>
<path d="M45.400 59.900l.4-2" stroke="#f6c31c" stroke-width="1"/>
<rect x="45" y="77" width=".9" height="8" fill="#4a3020"/>
<path d="M35 81l3 4h14l3-4 1 9-3 6 4 8v5.600H35l1-6 2-8-3-6z" fill="#f07a1c"/>
<path d="M40 88l5.500 7 5.500-7 1 6-6.500 6-6.500-6z" fill="#fff3e0"/>
<path d="M52 96c4-4 8-3 9 1v12h-8z" fill="#f4621c"/><path d="M55 94c3-2 6-1 6 3l-1 5-5-2z" fill="#fff"/>
<path d="M40 97h11l1 12H39z" fill="#f6901c"/>
<circle cx="34" cy="106" r="2.200" fill="#f08a60"/><circle cx="63" cy="105" r="2" fill="#f6c31c"/><rect x="33.600" y="107" width="1" height="3" fill="#fff"/><rect x="62.600" y="106" width="1" height="4" fill="#fff"/>
<text x="46.200" y="31.700" text-anchor="middle" font-family="'Liberation Serif',serif" font-size="27" fill="#fdf0d0" textLength="71.500" lengthAdjust="spacingAndGlyphs">it's ok</text>
<text x="46.800" y="40.300" text-anchor="middle" font-family="'Liberation Serif',serif" font-weight="700" font-size="8.400" fill="#eccdbc" textLength="88" lengthAdjust="spacingAndGlyphs">TO ASK FOR HELP</text>
<text x="46.500" y="47" text-anchor="middle" font-family="'Liberation Sans',sans-serif" font-weight="700" font-size="3.300" fill="#fff" textLength="77" lengthAdjust="spacing">Free therapy sessions every Friday</text>
<g font-family="'Liberation Serif',serif" font-weight="700" fill="#e8d8c0">
<text x="12" y="125.400" font-size="4.200">30th</text><text x="24.500" y="122" font-size="4.200">APRIL</text><text x="30" y="128" font-size="4.200">1,</text><text x="41" y="125.400" font-size="4.200">3 PM</text>
<text x="57" y="123.600" font-size="1.900">4567 Main St.</text><text x="57" y="126.200" font-size="1.900">Buffalo, NY</text>
</g>
<rect x="11" y="128.500" width="69" height=".4" fill="#7aa0c8"/>
<g fill="#9ab4d0"><rect x="12" y="131.600" width="68" height=".7"/><rect x="14" y="134" width="64" height=".7"/><rect x="17" y="136.400" width="58" height=".7"/></g>
</svg>
<!-- thumb 4: Geometric presentation -->
<svg class="th" style="left:1227.800px;top:269.500px" width="144.200" height="81.400" viewBox="0 0 144.200 81.400">
<defs>
<linearGradient id="t4a" x1="0" y1="0" x2="1" y2="0"><stop offset="0" stop-color="#33201f"/><stop offset=".3" stop-color="#3b2a2a"/><stop offset=".42" stop-color="#1d5f9e"/><stop offset=".55" stop-color="#4a3430"/><stop offset=".7" stop-color="#1b66b0"/><stop offset=".85" stop-color="#2b84d0"/><stop offset="1" stop-color="#16406e"/></linearGradient>
<linearGradient id="t4b" x1="0" y1="0" x2="0" y2="1"><stop offset="0" stop-color="#4a4c4c"/><stop offset=".5" stop-color="#2a2c2c"/><stop offset="1" stop-color="#0c0d0d"/></linearGradient>
<clipPath id="t4k"><path d="M0 0h82l-11 22H11zM0 34l9-10h58l28 57.400H0zM84 9h20l10 16-10 17H84L74 25zM113 25h9l5 8.500-5 8.500h-9l-5-8.500zM95 48h7l3.500 6-3.500 6h-7l-3.500-6zM104 57h12l6 9.500-6 9.500h-12l-6-9.500zM99 75h34l4 6.400H95zM103 52.500h4l2 3.500-2 3.500h-4l-2-3.500z"/></clipPath>
</defs>
<rect width="144.200" height="81.400" fill="#f1f1f1"/>
<g clip-path="url(#t4k)">
<rect width="144.200" height="81.400" fill="url(#t4a)"/>
<g filter="url(#b0)">
<rect x="33" y="0" width="12" height="50" fill="#1d5f9e"/><rect x="44" y="4" width="18" height="40" fill="#8a6a50"/><rect x="60" y="20" width="10" height="61" fill="#3a90d8"/><rect x="70" y="30" width="14" height="51" fill="#1a5aa0"/>
<rect x="20" y="66" width="60" height="15.400" fill="#5a3424"/><rect x="30" y="70" width="30" height="6" fill="#c8641a"/><rect x="76" y="50" width="14" height="20" fill="#d8782a"/>
<rect x="86" y="10" width="14" height="30" fill="#174f8e"/><rect x="100" y="14" width="6" height="20" fill="#e8e8f0"/><rect x="112" y="26" width="12" height="16" fill="#c86a3a"/><rect x="117" y="30" width="8" height="10" fill="#e0e4ec"/>
<rect x="98" y="60" width="20" height="14" fill="#2a78c8"/><rect x="104" y="64" width="10" height="10" fill="#d8641a"/><rect x="100" y="76" width="34" height="6" fill="#b8501a"/><rect x="94" y="48" width="8" height="12" fill="#d87a3a"/>
</g>
</g>
<rect x="10.700" y="37" width="53" height="29" rx="1.500" fill="url(#t4b)"/>
<path d="M10.700 66l6 6v-6z" fill="#2bb0d0"/>
<g font-family="'Liberation Sans',sans-serif" fill="#fff"><text x="13.500" y="44.800" font-size="5.400" textLength="37" lengthAdjust="spacingAndGlyphs">Presentation</text><text x="13.500" y="50.300" font-size="5.400">Title</text></g>
<g fill="#8a8a8a"><rect x="13.500" y="56" width="35" height=".8"/><rect x="13.500" y="59.800" width="33" height=".8"/></g>
</svg>
<!-- thumb 5: Gray Valley -->
<svg class="th" style="left:654.800px;top:520.400px" width="119.800" height="79.700" viewBox="0 0 119.800 79.700">
<defs>
<linearGradient id="t5a" x1="0" y1="0" x2=".25" y2="1"><stop offset="0" stop-color="#55477c"/><stop offset=".2" stop-color="#8d6790"/><stop offset=".42" stop-color="#e0956e"/><stop offset=".62" stop-color="#f4a95a"/><stop offset="1" stop-color="#f0a050"/></linearGradient>
<radialGradient id="t5s" cx="91.400" cy="24" r="26" gradientUnits="userSpaceOnUse"><stop offset="0" stop-color="#fffbe8"/><stop offset=".18" stop-color="#ffe9a0" stop-opacity=".95"/><stop offset=".55" stop-color="#f8b860" stop-opacity=".5"/><stop offset="1" stop-color="#f0a050" stop-opacity="0"/></radialGradient>
<clipPath id="t5k"><rect width="119.800" height="79.700"/></clipPath>
</defs>
<g clip-path="url(#t5k)">
<rect width="119.800" height="40" fill="url(#t5a)"/>
<rect width="119.800" height="50" fill="url(#t5s)"/>
<g filter="url(#b0)">
<path d="M0 22c6 2 12 8 20 12 10 4 20 8 30 10v14H0z" fill="#2f3f4c"/>
<path d="M20 34c20-4 50-6 72-4l-30 24H10z" fill="#a9a6a4"/>
<path d="M0 38c10 0 22 4 34 8l-10 16H0z" fill="#5a6a58"/>
<path d="M119.800 14c-6 2-10 8-14 14l-8 8 22 6z" fill="#3d4a3e"/>
<path d="M40 50c10-12 30-22 50-26 10 0 20 6 29.800 10v30H50z" fill="#3a4a20"/><path d="M84 28c8-2 18 2 26 6l9.800-6v24l-30-6z" fill="#5e4428"/>
<path d="M60 40c10-8 20-12 30-14l8 6-20 18z" fill="#6a7a30"/>
<path d="M0 56c10-4 24-2 36 2 14-6 30-10 48-8 14 2 26 8 35.800 14v15.700H0z" fill="#3f7f1c"/>
<path d="M44 56c14-6 34-8 50-2 6 4 4 8-4 10-16 2-34 0-46-8z" fill="#a8a822"/>
<path d="M0 62c12-2 26 0 38 6 10 4 14 8 14 11.700H0z" fill="#2a5a16"/>
<path d="M74 66c10-4 24-4 36 0l9.800 4v9.700H62c2-6 6-10 12-13.700z" fill="#6a5a48"/>
<path d="M0 48c8-4 18-2 24 2l-8 8-16 2z" fill="#6a7a5a"/>
</g>
<circle cx="91.400" cy="24" r="3.500" fill="#fffdf0" filter="url(#b0)"/>
</g></svg>
<!-- thumb 7: Balloon -->
<svg class="th" style="left:1049.300px;top:488.900px" width="111" height="143.700" viewBox="0 0 111 143.700">
<defs>
<clipPath id="t7k"><path d="M-4 40C-6 10 20-14 58-14c40 0 62 26 58 60-4 30-24 50-42 66l-8 8c-4 2-12 2-16-2L36 100C14 82-2 64-4 40z"/></clipPath>
<linearGradient id="t7t" x1="0" y1="0" x2="1" y2="0"><stop offset="0" stop-color="#ff5a1a"/><stop offset="1" stop-color="#ff9a1a"/></linearGradient>
</defs>
<rect width="111" height="143.700" fill="#4c91dc"/>
<g clip-path="url(#t7k)">
<rect x="-10" y="-20" width="130" height="150" fill="#d9c91c"/>
<g filter="url(#b0)">
<path d="M-10-20h130v34C90 4 30 4-10 22z" fill="#1d2b4c"/>
<path d="M-10 20C30 4 90 4 120 12v8C90 12 30 12-10 30z" fill="#c43a16"/>
<path d="M-10 30C30 12 90 12 120 20v8C90 20 30 22-10 40z" fill="#f0921c"/>
<path d="M-10 40C30 22 90 20 120 28v6C90 26 30 30-10 48z" fill="#e8d022"/>
<path d="M-10 48C30 30 90 26 120 34v10C90 36 30 40-10 60z" fill="#2a9a3c"/>
<path d="M-10 60C30 40 90 36 120 44v6C90 42 30 48-10 68z" fill="#b8a81a"/>
<path d="M84-20c20 6 34 26 36 50l-4 40-22 30c10-30 14-60 8-90-2-12-8-22-18-30z" fill="#1d2b4c" opacity=".85"/>
<path d="M96 10c8 2 16 8 20 16l-2 14c-6-6-12-10-20-12z" fill="#c43a16"/>
<path d="M92 40c8 2 16 6 22 12l-4 14c-6-6-14-10-22-12z" fill="#2a9a3c"/>
<path d="M88 62c6 2 14 6 18 10l-8 14c-4-4-10-8-16-10z" fill="#c43a16"/>
<path d="M-6 20c4 4 8 6 14 8l4 30-10-6c-6-10-8-20-8-32z" fill="#c43a16"/>
<path d="M2 64c4 2 10 4 14 4l8 16-10-4c-6-4-10-10-12-16z" fill="#f0921c"/>
<path d="M18-10c-6 30-2 70 22 104l-4 2C12 66 4 26 12-8z" fill="#8a7a10" opacity=".5"/>
<path d="M44-14c-2 36 2 76 14 110h-3C40 64 36 24 40-14z" fill="#8a7a10" opacity=".5"/>
<path d="M68-14c6 36 4 76-4 110h3c12-34 14-74 6-110z" fill="#8a7a10" opacity=".5"/>
<ellipse cx="59" cy="98" rx="19" ry="15" fill="#14181f"/>
<circle cx="72" cy="92" r="8" fill="#6a4a40"/>
<ellipse cx="60" cy="106" rx="10" ry="5" fill="#d8a81a"/>
</g></g>
<path d="M52 120l6 10M66 120l-4 10" stroke="#2a2a2a" stroke-width=".6"/>
<path d="M54 129l10-3 4 8-8 5z" fill="#1a1a1a"/>
<circle cx="106" cy="9" r="3" fill="#cfe6ff" filter="url(#b0)"/>
<g font-family="'Liberation Sans',sans-serif" font-weight="700" fill="url(#t7t)"><text x="2.900" y="127.600" font-size="11" textLength="47.800" lengthAdjust="spacingAndGlyphs">TAKING</text><text x="2.900" y="138.300" font-size="11" textLength="44" lengthAdjust="spacingAndGlyphs">FLIGHT</text></g>
<g font-family="'Liberation Sans',sans-serif" font-weight="700" fill="#f0901c" font-size="2.700" text-anchor="end"><text x="108.500" y="135.600">A GUIDE TO SUCCESS</text><text x="108.500" y="139.200">IN A GROUNDED WORLD</text></g>
</svg>
<!-- thumb 8: Bday -->
<svg class="th" style="left:1244px;top:488.900px" width="111.700" height="143.700" viewBox="0 0 111.700 143.700">
<rect width="111.700" height="143.700" fill="#fff"/>
<path d="M0 26q0-4 4-4h12q6 0 6 6v58q0 6-6 6H4q-4 0-4-4z" fill="#fdd02a"/>
<circle cx="92.400" cy="42.600" r="33" fill="#f590dc"/>
<circle cx="44.600" cy="29.700" r="22.900" fill="#f05a50"/>
<circle cx="54.900" cy="69" r="36.800" fill="#2b7de0"/>
<path d="M21.700 29.700a22.900 22.900 0 0 1 45.800 0c0 6-2 11.500-5.600 15.600q-17 4-34.600 0c-3.600-4.100-5.600-9.600-5.600-15.600z" fill="#f05a50"/>
<circle cx="94.600" cy="50.400" r="16.800" fill="#a5e84a"/>
<circle cx="101.700" cy="29" r="7.300" fill="#ec4fae"/>
<circle cx="20.600" cy="21.100" r="5.300" fill="#f08ad8"/>
<circle cx="8.900" cy="99.700" r="4" fill="#a5e84a"/>
<g font-family="'Liberation Sans',sans-serif" fill="#fff" text-anchor="middle">
<text x="55.300" y="26.600" font-size="2.700" textLength="41" lengthAdjust="spacing">YOU ARE INVITED TO A</text>
<text x="56" y="56.900" font-size="29" textLength="74" lengthAdjust="spacingAndGlyphs" stroke="#2b7de0" stroke-width="0">BDAY</text>
<text x="55.300" y="70.400" font-size="5.200" textLength="51" lengthAdjust="spacing">CELEBRATION</text>
<text x="55.300" y="79.600" font-size="2.800">MARCH 28, 20XX</text><text x="55.300" y="84.400" font-size="2.800">7:00PM</text><text x="55.300" y="91.600" font-size="2.800">345 MAIN STREET</text>
</g>
<g font-family="'Liberation Sans',sans-serif" fill="#333" text-anchor="middle" font-size="2.200">
<text x="55.500" y="112.500">Join in celebrating John's bday with friends, games, food, and more.</text>
<text x="55.500" y="117.500">Bring a dish or dessert to share. Games start at 7pm, followed by dinner.</text>
<text x="55.500" y="122.500">Everyone is welcome!</text>
</g>
</svg>
<!-- thumb 9: Industry insights -->
<svg class="th" style="left:659.300px;top:739.300px" width="111" height="143.600" viewBox="0 0 111 143.600">
<defs><linearGradient id="t9s" x1="0" y1="0" x2="0" y2="1"><stop offset="0" stop-color="#6f9fa4"/><stop offset="1" stop-color="#a6d6bc"/></linearGradient>
<linearGradient id="t9y" x1="0" y1="0" x2="1" y2="1"><stop offset="0" stop-color="#fbe7a8"/><stop offset="1" stop-color="#f2b44a"/></linearGradient></defs>
<rect width="111" height="143.600" fill="#1d2a5c"/>
<rect x="14" y="0" width="84" height="60" fill="url(#t9s)"/>
<g filter="url(#b0)">
<path d="M0 0h22c-2 20 0 40 8 58L0 40z" fill="#7a3aa2"/>
<path d="M0 10c8 10 14 30 20 50l-20-6z" fill="#e2429a"/>
<path d="M111 0H96C90 20 80 40 70 56l41-20z" fill="#e850b0"/>
<path d="M111 6c-8 12-18 30-30 44l30 6z" fill="#8a3aa8"/>
<path d="M111 30C100 40 88 50 78 58c8 14 20 20 33 18z" fill="#26185a"/>
<path d="M39 19c4 10 10 24 22 34 8 8 14 14 16 22l-20 6c-10-14-18-34-18-62z" fill="url(#t9y)"/>
<path d="M58 46l12-12 12 18-10 22z" fill="#f08a3c"/>
<path d="M30 36l8-8c2 20 8 40 22 56l-16 4C34 74 30 54 30 36z" fill="#c2306c"/>
<path d="M24 28c4 20 12 44 30 62l-14 8C22 80 16 54 24 28z" fill="#1f7d98"/>
<path d="M14 4c-2 30 6 64 30 92l-12 6C8 76 2 40 6 6z" fill="#f9d88a"/>
<path d="M4 14c-2 30 6 66 30 90l-10 4C2 84-4 50 0 18z" fill="#f08c24"/>
<path d="M0 44c4 24 14 46 32 62l-32 6z" fill="#8e1c4c"/>
<path d="M52 70c8-12 22-20 36-16 4 8 2 20-6 30-10 8-22 10-32 4z" fill="#1fc4a6"/>
<path d="M60 78c10-4 22-2 30 4l21-20v40L70 112z" fill="#176c8c"/>
<path d="M0 84c20 16 46 22 70 16l41-28v18L64 118 0 112z" fill="#7c2a7a"/>
<path d="M0 92c24 14 52 14 76 2l35-24v14L66 112 0 116z" fill="#f9d070"/>
<path d="M0 104c24 10 52 8 76-4l35-18v10l-50 30-61 8z" fill="#f07c1c"/>
<path d="M111 88L50 122l-10 12 71-26z" fill="#1d98a2"/>
<path d="M0 118c20 4 40 2 56-6l-16 20-40 11.600z" fill="#a2208c"/>
<path d="M111 104L40 136l-10 7.600h81z" fill="#1a2a5a"/>
<path d="M0 134c14-2 28-6 40-14l-6 23.600H0z" fill="#c83a9a"/>
</g>
<g font-family="'Liberation Sans',sans-serif" font-weight="700" font-style="italic" fill="#fff">
<text x="9.300" y="124.300" font-size="9" textLength="95" lengthAdjust="spacingAndGlyphs">INDUSTRY INSIGHTS</text>
<text x="21" y="130.600" font-size="5.600" textLength="71" lengthAdjust="spacingAndGlyphs">the peaks and valleys</text>
<text x="9" y="140" font-size="2.900" textLength="41" lengthAdjust="spacingAndGlyphs">Prepared by John Doe</text>
<text x="78" y="140" font-size="2.900" textLength="25" lengthAdjust="spacingAndGlyphs">June 15, 2025</text>
</g>
</svg>
<!-- thumb 10: Italian Harbor -->
<svg class="th" style="left:837.900px;top:763.100px" width="144" height="95.900" viewBox="0 0 144 95.900">
<defs>
<linearGradient id="t10s" x1="0" y1="0" x2="0" y2="1"><stop offset="0" stop-color="#5aa2d8"/><stop offset=".5" stop-color="#cfe0ec"/><stop offset="1" stop-color="#f3e7d6"/></linearGradient>
<linearGradient id="t10w" x1="0" y1="0" x2="0" y2="1"><stop offset="0" stop-color="#5aa4c4"/><stop offset=".35" stop-color="#2694ae"/><stop offset="1" stop-color="#158aa4"/></linearGradient>
</defs>
<rect width="144" height="48" fill="url(#t10s)"/>
<g filter="url(#b0)">
<ellipse cx="62" cy="14" rx="40" ry="9" fill="#eef1f4"/><ellipse cx="70" cy="28" rx="34" ry="10" fill="#f6efe6"/><ellipse cx="22" cy="30" rx="22" ry="6" fill="#dbe7f0"/><ellipse cx="110" cy="5" rx="26" ry="5" fill="#e6eef4"/>
<path d="M0 0h30c-8 6-16 14-30 18z" fill="#4a96d2"/><path d="M128 0h16v9c-6-2-12-4-16-9z" fill="#58a0d6"/>
<path d="M83 24l12-4 15-5.500 3 4.500 11-4.500 10-4.500 10-1V44H83z" fill="#5d6972"/>
<path d="M124 14l10-4 10-1v22l-20 4z" fill="#4e5a62"/>
<path d="M32 41l8-2 34-11 9-5 2 3 29-7 8 1 2 16 20-5v14H32z" fill="#e4a886"/>
<path d="M38 39h5v7h-5zM50 35h5v11h-5zM66 30h5v16h-5zM78 27h6v19h-6zM100 24h7v22h-7z" fill="#d8584c"/>
<path d="M44 37h5v9h-5zM60 32h5v14h-5zM86 26h6v20h-6z" fill="#6fa4d4"/>
<path d="M72 29h5v17h-5zM93 25h6v21h-6z" fill="#f2d27a"/>
<path d="M114 19h8v24h-8z" fill="#a884c0"/>
<path d="M124 32c6-4 14-6 20-6v18h-20z" fill="#d8c65a"/><path d="M130 36c4-3 10-5 14-5v8h-14z" fill="#7f9a40"/>
<path d="M0 43h32v3H0z" fill="#8fa6b8"/><rect x="6" y="38" width="9" height="6" fill="#dfe6ee"/><rect x="19" y="41" width="5" height="3" fill="#dfe6ee"/>
<rect x="40" y="43" width="104" height="3.500" fill="#e9c27c"/>
</g>
<rect y="46" width="144" height="49.900" fill="url(#t10w)"/>
<g filter="url(#b0)">
<path d="M0 46h36l-4 18-32 6z" fill="#86bcd8" opacity=".8"/>
<path d="M44 46h32v9H46z" fill="#ecc873" opacity=".75"/>
<path d="M82 47c20-2 44-2 62 1v14c-18-3-40-6-62-6z" fill="#dfe5ea"/>
<path d="M110 56c12 0 24 2 34 5v5c-10-3-22-5-34-6z" fill="#b03a4e"/>
<path d="M84 52c8 0 16 2 22 5l-2 3c-6-2-14-4-20-5z" fill="#3a5a8c"/>
<path d="M61 55.600c14 0 30 6 39 14l-1 6c-14-2-30-8-38-16z" fill="#f0f0ee"/>
<path d="M62 60c12 4 26 10 37 12l-.5 3.500c-12-2-26-8-36.500-13z" fill="#ad3a50"/>
<path d="M100 61c8 0 16 2 22 5l-1 5c-8-1-16-3-21-6z" fill="#ece8e2"/><path d="M100 65c7 2 15 4 21 4l-.5 2.500c-7-1-15-3-20.500-5z" fill="#c02a48"/>
<path d="M37.600 61c16-3 38 4 49 16l.5 8c-18 1-40-7-49-18z" fill="#3a66b0"/>
<path d="M40 62c14-2 32 4 44 14l-1 3c-14-1-32-7-43-15z" fill="#9aa0a8"/>
<path d="M38 63c14 6 34 13 49 15l-.3 2.500c-16-2-36-9-48.700-15z" fill="#8a2f48"/>
<rect x="57" y="70" width="7" height="4" fill="#d89a4a"/><rect x="63" y="74" width="9" height="2.500" fill="#34b070"/>
<circle cx="38" cy="69" r="2" fill="#d8305a"/><circle cx="41" cy="73" r="2.200" fill="#e03a70"/><circle cx="48" cy="77" r="2.400" fill="#e03a70"/>
<path d="M0 71c6-3 14-3 20 0l1 6-5 18.900H0z" fill="#b9cad6"/>
<path d="M2 80c4-2 9-2 13 0l-3 15.900H2z" fill="#768a9a"/>
<path d="M76 78l6 17" stroke="#8aa0b0" stroke-width=".6"/>
</g>
</svg>
<!-- thumb 11: Mardi Gras -->
<svg class="th" style="left:1049px;top:739.300px" width="111.300" height="143.600" viewBox="0 0 111.300 143.600">
<defs><linearGradient id="t11b" x1="0" y1="0" x2="0" y2="1"><stop offset="0" stop-color="#38223f"/><stop offset=".6" stop-color="#3a2345"/><stop offset=".7" stop-color="#46304f"/><stop offset="1" stop-color="#43304c"/></linearGradient></defs>
<rect width="111.300" height="143.600" fill="url(#t11b)"/>
<g filter="url(#b2)" opacity=".5"><ellipse cx="20" cy="112" rx="24" ry="14" fill="#5a4463"/><ellipse cx="90" cy="120" rx="26" ry="16" fill="#5a4463"/><ellipse cx="55" cy="136" rx="40" ry="8" fill="#584260"/></g>
<text x="55.900" y="23.300" text-anchor="middle" font-family="'Liberation Sans',sans-serif" font-weight="700" font-size="13.600" fill="#f5b82a" stroke="#f5b82a" stroke-width=".5" textLength="84" lengthAdjust="spacingAndGlyphs">MARDI GRAS</text>
<text x="55.500" y="35.600" text-anchor="middle" font-family="'Liberation Serif',serif" font-style="italic" font-size="4.600" fill="#e8dcea">celebrations</text>
<path d="M38 72c2-10 0-18 2-26l4 4 2-6 3 6 2-4c2 12 2 24 3 36z" fill="#e0357c"/>
<path d="M73 72c-2-10 0-18-2-26l-4 4-2-6-3 6-2-4c-2 12-2 24-3 36z" fill="#e0357c"/>
<path d="M48 84c-2-14 0-28 4-38l3 3 1.500-6 1.500 6 3-3c4 10 6 24 3 38z" fill="#f5b82a"/>
<path d="M13.900 69c10 4 22 4 34 4 4 0 6 4 8 8 2-4 4-8 8-8 12 0 24 0 33-4-2 12-10 22-22 24-8 1-15-3-19-9-4 6-11 10-19 9-12-2-21-12-23.100-24z" fill="#f5b82a"/>
<path d="M27 80c4-4 14-5 21 0 2 2 3 4 4 6-4 3-10 3-14 1-5-2-9-4-11-7z" fill="#3a2345"/>
<path d="M84 80c-4-4-14-5-21 0-2 2-3 4-4 6 4 3 10 3 14 1 5-2 9-4 11-7z" fill="#3a2345"/>
<path d="M24 84c6 8 18 10 28 4M87 84c-6 8-18 10-28 4" stroke="#e0357c" stroke-width="1.600" fill="none"/>
<g fill="#e0357c"><circle cx="26" cy="75" r="1"/><circle cx="31" cy="74.400" r="1"/><circle cx="36" cy="74.200" r="1"/><circle cx="41" cy="74.400" r="1"/><circle cx="70" cy="74.400" r="1"/><circle cx="75" cy="74.200" r="1"/><circle cx="80" cy="74.400" r="1"/><circle cx="85" cy="75" r="1"/><circle cx="55.700" cy="86" r="1"/><circle cx="55.700" cy="90" r="1"/></g>
<path d="M8 62c2-3 5-2 7 2l2 6-4 2c-3-3-5-6-5-10z" fill="#e0357c"/><path d="M103 62c-2-3-5-2-7 2l-2 6 4 2c3-3 5-6 5-10z" fill="#e0357c"/>
<g fill="#2bb8c8"><rect x="8" y="73" width="1.800" height="1.800"/><rect x="8" y="76.500" width="1.800" height="1.800"/><rect x="8" y="80" width="1.800" height="1.800"/><rect x="8" y="83.500" width="1.600" height="1.600"/><rect x="84.500" y="73" width="1.800" height="1.800" transform="translate(13 0)"/><rect x="97.500" y="76.500" width="1.800" height="1.800"/><rect x="97.500" y="80" width="1.800" height="1.800"/></g>
<g fill="#f5b82a"><rect x="11" y="73" width="1.800" height="1.800"/><rect x="11" y="76.500" width="1.800" height="1.800"/><rect x="11" y="80" width="1.800" height="1.800"/><rect x="11" y="83.500" width="1.600" height="1.600"/><rect x="100.500" y="73" width="1.800" height="1.800"/><rect x="100.500" y="76.500" width="1.800" height="1.800"/><rect x="100.500" y="80" width="1.800" height="1.800"/><rect x="100.500" y="83.500" width="1.600" height="1.600"/></g>
<g fill="#e8dcea"><rect x="24" y="101.200" width="63" height=".8"/><rect x="28" y="103.800" width="56" height=".8"/><rect x="26" y="106.400" width="60" height=".8"/><rect x="27" y="109" width="58" height=".8"/><rect x="21" y="111.600" width="70" height=".8"/><rect x="30" y="132" width="51" height=".7"/></g>
<g fill="#d02a8a"><rect x="19" y="116.500" width="4.500" height="5"/><rect x="87" y="116.500" width="4.500" height="4"/></g><circle cx="54" cy="119" r="2.600" fill="none" stroke="#6a4a7a" stroke-width=".6"/>
<g fill="#f5a02a" font-family="'Liberation Sans',sans-serif" font-weight="700" font-size="2.300" text-anchor="middle"><text x="21.300" y="126.600">March 15</text><text x="54" y="126.600">Time</text><text x="89.300" y="126.600">Location</text></g>
</svg>
<!-- thumb 12: Marketing planner -->
<svg class="th" style="left:1230.600px;top:772.100px" width="139.200" height="81.600" viewBox="0 0 139.200 81.600">
<rect width="139.200" height="81.600" fill="#fff"/>
<rect x="0" y="1" width="21" height="5" fill="#dcdcdc"/>
<g><rect x="28" y="3" width="7.400" height="3" fill="#1a6ac8"/><rect x="35.800" y="3" width="7.400" height="3" fill="#f8c01a"/><rect x="43.600" y="3" width="7.400" height="3" fill="#d01a1a"/><rect x="51.400" y="3" width="7.400" height="3" fill="#1ab04a"/><rect x="59.200" y="3" width="7.400" height="3" fill="#fdf0c8"/><rect x="67" y="3" width="7.400" height="3" fill="#f8d0d0"/><rect x="74.800" y="3" width="7.400" height="3" fill="#c8ecd0"/><rect x="82.600" y="3" width="7.400" height="3" fill="#5a9ae0"/></g>
<rect x="0" y="8" width="90" height="2.600" fill="#ececec"/>
<g><rect x="0" y="11.400" width="90" height="3" fill="#1a6ac8"/><rect x="0" y="14.600" width="90" height="2.800" fill="#f8c01a"/><rect x="0" y="17.600" width="90" height="2.800" fill="#d01a1a"/><rect x="0" y="20.600" width="90" height="2.800" fill="#1ab04a"/><rect x="0" y="24" width="90" height="2.600" fill="#fdf0c8"/><rect x="0" y="27" width="90" height="2.600" fill="#f8d0d0"/><rect x="0" y="30" width="90" height="2.600" fill="#c8ecd0"/><rect x="0" y="33" width="90" height="2.600" fill="#a8c8e8"/><rect x="0" y="35.600" width="90" height="2.800" fill="#3a80d0"/><rect x="0" y="38.600" width="90" height="2.800" fill="#d01a1a"/><rect x="0" y="41.600" width="90" height="2.600" fill="#1ab04a"/><rect x="0" y="44.200" width="90" height="2.400" fill="#1a6ac8"/></g>
<g fill="none" stroke="#dedede" stroke-width=".5"><rect x=".300" y="48.300" width="34.500" height="27"/><rect x="38.300" y="48.300" width="51.500" height="27"/><rect x="93.300" y=".300" width="45.600" height="80.900"/><path d="M93 46.500h46"/></g>
<g stroke="#e4e4e4" stroke-width=".4"><path d="M3 53h28M3 57h28M3 61h28M3 65h28M3 69h28M42 53h44M42 57h44M42 61h44M42 65h44M42 69h44M96 8h36M96 14h36M96 20h36M96 26h36M96 32h36M96 38h36"/></g>
<path d="M4 64l4-6 3 4 3-12 3 20 3-10 3 8 3-16" stroke="#f8c01a" stroke-width=".6" fill="none"/><path d="M4 62l4-2 3 8 3-4 3 8 3-12 3 4 3-10" stroke="#5a9ae0" stroke-width=".6" fill="none"/>
<path d="M42 73V62l10-10 7 20 6-6 7 2 6-16v21z" fill="#1a6ac8"/>
<path d="M42 73v-8l4-3 3 2 4-5 5 8 3 4 4-6 4 3 5-7 4 1v11z" fill="#f8c01a"/>
<g fill="#f8c01a"><rect x="97.500" y="36" width="1.600" height="9"/><rect x="100.800" y="33" width="1.600" height="12"/><rect x="104" y="36" width="1.600" height="9"/><rect x="107" y="26" width="1.600" height="19"/><rect x="110" y="43" width="1.600" height="2"/><rect x="113" y="42" width="1.600" height="3"/><rect x="116" y="34" width="1.600" height="11"/><rect x="119" y="40" width="1.600" height="5"/><rect x="122" y="32" width="1.600" height="13"/><rect x="125" y="36" width="1.600" height="9"/><rect x="128.400" y="26" width="1.600" height="19"/><rect x="131.600" y="42" width="1.600" height="3"/></g>
<g fill="#1a6ac8"><rect x="97.500" y="28" width="1.600" height="8"/><rect x="100.800" y="21" width="1.600" height="12"/><rect x="107" y="6" width="1.600" height="20"/><rect x="122" y="21" width="1.600" height="11"/><rect x="128.400" y="6" width="1.600" height="20"/><rect x="113" y="40.600" width="1.600" height="1.400"/><rect x="119" y="38.600" width="1.600" height="1.400"/></g>
<path d="M115.700 62.900V43.600a19.300 19.300 0 0 0-19.300 19.300z" fill="#d01a1a"/><path d="M115.700 62.900V43.600a19.300 19.300 0 0 1 19.300 19.300z" fill="#f8c01a"/><path d="M115.700 62.900v19.300a19.300 19.300 0 0 1-19.300-19.300z" fill="#1ab04a"/><path d="M115.700 62.900v19.300a19.300 19.300 0 0 0 19.300-19.300z" fill="#1a6ac8"/>
</svg>
<!-- thumb 13: Medical xlsx (clipped) -->
<svg class="th" style="left:672px;top:997.100px" width="86.200" height="87.100" viewBox="0 0 86.200 87.100">
<rect width="86.200" height="87.100" fill="#fff"/>
<rect width="86.200" height="17" fill="#d4e4ee"/>
<g filter="url(#b0)"><rect x="58" y="0" width="28" height="17" fill="#e4eef4"/><ellipse cx="76" cy="7" rx="3.500" ry="4" fill="#d9b09a"/><path d="M72 5c0-4 6-5 8-2 1 2 1 4 0 6-1-3-4-4-8-4z" fill="#2a2422"/><path d="M70 17c0-5 4-7 7-7s6 2 6 7z" fill="#f4f6f8"/></g>
<rect x="0" y="6.600" width="52" height="10.400" fill="#1f7d8c"/>
<g font-family="'Liberation Sans',sans-serif" fill="#e8f4f6" font-size="2.700"><text x="2.600" y="10.600">Company Name</text><text x="2.600" y="15" textLength="46" lengthAdjust="spacingAndGlyphs">Medical Office Startup Overview</text></g>
<rect x="0" y="20.800" width="86.200" height="3.400" fill="#1c6c7c"/><rect x="0" y="72.400" width="86.200" height="3.400" fill="#1c6c7c"/>
<g fill="#f5d2ac"><rect x="37" y="29.600" width="15" height="2.600"/><rect x="54" y="29.600" width="15" height="2.600"/><rect x="71" y="29.600" width="15.200" height="2.600"/><rect x="37" y="52.600" width="15" height="2.600"/><rect x="54" y="52.600" width="15" height="2.600"/><rect x="71" y="52.600" width="15.200" height="2.600"/><rect x="37" y="66" width="15" height="2.600"/><rect x="54" y="66" width="15" height="2.600"/><rect x="71" y="66" width="15.200" height="2.600"/><rect x="71" y="83" width="15.200" height="4"/></g>
<g fill="#3a80c8"><rect x="8" y="30" width="12" height="1"/><rect x="8" y="53" width="11" height="1"/><rect x="8" y="66.600" width="19" height="1"/><rect x="6" y="78.600" width="8" height="1"/></g>
<g fill="#b0b0b0"><rect x="18" y="34.600" width="17" height=".8"/><rect x="22" y="37.600" width="13" height=".8"/><rect x="26" y="40.600" width="9" height=".8"/><rect x="28" y="43.600" width="7" height=".8"/><rect x="29" y="46.600" width="6" height=".8"/><rect x="28" y="57.600" width="7" height=".8"/><rect x="29" y="60.600" width="6" height=".8"/><rect x="22" y="63.200" width="13" height=".8"/><rect x="28" y="82.600" width="7" height=".8"/><rect x="28" y="85.400" width="7" height=".8"/>
<rect x="42" y="34.600" width="9" height=".8"/><rect x="42" y="37.600" width="9" height=".8"/><rect x="43" y="40.600" width="8" height=".8"/><rect x="42" y="43.600" width="9" height=".8"/><rect x="44" y="46.600" width="7" height=".8"/><rect x="59" y="34.600" width="9" height=".8"/><rect x="59" y="37.600" width="9" height=".8"/><rect x="60" y="40.600" width="8" height=".8"/><rect x="59" y="43.600" width="9" height=".8"/><rect x="61" y="46.600" width="7" height=".8"/><rect x="78" y="34.600" width="7" height=".8"/>
<rect x="42" y="57.600" width="9" height=".8"/><rect x="42" y="60.600" width="9" height=".8"/><rect x="42" y="63.200" width="9" height=".8"/><rect x="59" y="57.600" width="9" height=".8"/><rect x="59" y="60.600" width="9" height=".8"/><rect x="59" y="63.200" width="9" height=".8"/><rect x="78" y="63.200" width="7" height=".8"/><rect x="42" y="82.600" width="9" height=".8"/><rect x="59" y="82.600" width="9" height=".8"/><rect x="42" y="85.400" width="9" height=".8"/><rect x="59" y="85.400" width="9" height=".8"/></g>
<rect x="78" y="60.400" width="7" height=".9" fill="#e8785a"/>
</svg>
<!-- thumb 14: Thanksgiving -->
<svg class="th" style="left:853.900px;top:990px" width="111.400" height="94.200" viewBox="0 0 111.400 94.200">
<rect width="111.400" height="94.200" fill="#690f0a"/>
<path d="M12.400 94.200V12.400H98.600V94.200" fill="none" stroke="#f0c040" stroke-width="1.100"/>
<g fill="#f28a16"><path d="M84 18c6-8 14-12 24-14l3.400 2v8c-8 0-14 4-20 10z"/><path d="M92 26c6-4 12-6 19.400-6v10c-8 0-14 2-20 6z"/><path d="M88 48c8-6 16-8 23.400-8v16c-8 0-16 2-24 8z"/><path d="M86 62c4-2 8-2 12 0l-8 6z"/><path d="M0 78c4 0 8 2 12 6l4 10.200H0z"/><path d="M2 70c4 0 6 2 8 6l-8 2z"/><path d="M94 36l17.400-4v6l-15 4z"/></g>
<path d="M96 66l10-3 1 3-10 4z" fill="#f0c040"/>
<g text-anchor="middle">
<text x="55.800" y="33.400" font-family="'Liberation Serif',serif" font-size="3.200" fill="#e8c8a0">4567 Main St Buffalo, NY 98052</text>
<text x="55.800" y="42.900" font-family="'Liberation Serif',serif" font-size="6.200" fill="#f0c88a" textLength="48" lengthAdjust="spacingAndGlyphs">School of Fine Art</text>
<text x="55.800" y="57.800" font-family="'DejaVu Sans','Liberation Sans',sans-serif" font-weight="700" font-size="12.600" fill="#fff" textLength="51.300" lengthAdjust="spacingAndGlyphs">THANKS</text>
<text x="55.800" y="69.300" font-family="'DejaVu Sans','Liberation Sans',sans-serif" font-weight="700" font-size="12.600" fill="#fff" textLength="46" lengthAdjust="spacingAndGlyphs">GIVING</text>
<text x="55.800" y="81.800" font-family="'Liberation Serif',serif" font-size="10.800" fill="#e8b85a" textLength="51.500" lengthAdjust="spacingAndGlyphs">Event Title</text>
</g>
<rect x="45.700" y="89" width="19.300" height="5.200" fill="#fff"/><rect x="50" y="91" width="10.600" height="1.300" fill="#b8201a"/>
</svg>
<!-- thumb 15: Memorial day -->
<svg class="th" style="left:1049.200px;top:990px" width="111" height="94.200" viewBox="0 0 111 94.200">
<rect width="111" height="94.200" fill="#4a90d9"/>
<path d="M8 94.200l6-30 8 2-4 28z" fill="#3a7cc4"/>
<path d="M44.800 57A20.500 20.500 0 0 0 14 84z" fill="#e8353b"/>
<path d="M13.500 58c-2.500-2-1.500-6 2-6.500" stroke="#1a1a1a" stroke-width="1.100" fill="none"/>
<rect x="13.700" y="87.400" width="45.100" height="3.400" rx="1.200" fill="#2a2a2a"/><rect x="16" y="90.800" width="40" height="3.400" fill="#1d1d1d"/>
<rect x="20" y="84.400" width="11" height="3" rx="1" fill="#7a3a2a"/><rect x="38" y="84.400" width="11" height="3" rx="1" fill="#7a3a2a"/>
<g font-family="'Liberation Sans',sans-serif" font-weight="700" fill="#fff"><text x="7.500" y="24.900" font-size="11.700" textLength="91.700" lengthAdjust="spacingAndGlyphs">MEMORIAL DAY</text><text x="7.500" y="38.900" font-size="11.700" textLength="68" lengthAdjust="spacingAndGlyphs">BARBEQUE</text></g>
<g font-family="'Liberation Sans',sans-serif" fill="#e6f0fa" font-size="3.500" text-anchor="end"><text x="103.200" y="66.900">MONDAY, MAY 31, 20XX</text><text x="103.200" y="74.600">7:00PM • LAKESHORE PARK</text></g>
</svg>
<!-- thumb 16: Thank you teachers -->
<svg class="th" style="left:1244.800px;top:990px" width="110.400" height="94.200" viewBox="0 0 110.400 94.200">
<defs><pattern id="t16p" width="22" height="22" patternUnits="userSpaceOnUse"><rect width="22" height="22" fill="#fff"/><rect x="2" y="2" width="7" height="9" rx="2.500" fill="none" stroke="#7aa8e0" stroke-width=".8"/><rect x="3.500" y="6" width="4" height="3" rx="1" fill="none" stroke="#7aa8e0" stroke-width=".6"/><path d="M12 4l7-2 1 3-7 2z" fill="none" stroke="#f0a0a0" stroke-width=".7"/><circle cx="16" cy="9" r="2" fill="none" stroke="#8ab8e8" stroke-width=".7"/><rect x="11" y="14" width="9" height="5" rx="1.500" fill="none" stroke="#f0c840" stroke-width=".8"/><circle cx="13" cy="19.500" r="1" fill="none" stroke="#f0c840" stroke-width=".6"/><circle cx="18" cy="19.500" r="1" fill="none" stroke="#f0c840" stroke-width=".6"/><path d="M3 14l1 6M6 13v6" stroke="#f09090" stroke-width=".7"/><circle cx="5" cy="20" r="1.300" fill="none" stroke="#a8c878" stroke-width=".6"/></pattern></defs>
<rect width="110.400" height="94.200" fill="url(#t16p)"/>
<path d="M14 36l8-6-4-6 12-2 6-8 16 2 8-4 10 2 14-6-2 8 14-2-6 8 12 0-8 8 10 6-12 4 6 8-12 2 2 10-14-2-6 8-12-4-10 8-8-8-14 2 2-10-12-2 8-8-10-4 8-6z" fill="#1c4778" transform="translate(.2 7.900) scale(1.014 1.077)"/>
<g font-family="'DejaVu Sans','Liberation Sans',sans-serif" fill="#fff" font-size="9.200" transform="rotate(-3 55 50)" text-anchor="middle"><text x="55.500" y="46.600" textLength="57" lengthAdjust="spacingAndGlyphs">THANK YOU</text><text x="56" y="62" textLength="58" lengthAdjust="spacingAndGlyphs">TEACHERS!</text></g>
</svg>
<!-- preview page -->
<svg style="left:1494.800px;top:257.200px" width="611.200" height="788.500" viewBox="0 0 611.200 788.500">
<defs>
<filter id="b1" x="-5%" y="-5%" width="110%" height="110%"><feGaussianBlur stdDeviation="1.1"/></filter>
<filter id="b2" x="-10%" y="-10%" width="120%" height="120%"><feGaussianBlur stdDeviation="2.6"/></filter>
<filter id="b4" x="-20%" y="-20%" width="140%" height="140%"><feGaussianBlur stdDeviation="6"/></filter>
<clipPath id="cbee"><rect x="0" y="0" width="288.1" height="234.3"/></clipPath>
<clipPath id="cpl"><rect x="299" y="0" width="312.2" height="469.6"/></clipPath>
<clipPath id="cga"><rect x="0" y="246" width="288.1" height="223.6"/></clipPath>
<clipPath id="cvo"><rect x="0" y="587" width="267.2" height="201.5"/></clipPath>
<linearGradient id="gbee" x1="0" y1="0" x2="1" y2="1"><stop offset="0" stop-color="#e6e7e9"/><stop offset=".5" stop-color="#f3f3f4"/><stop offset="1" stop-color="#ecebea"/></linearGradient>
<linearGradient id="gsky" x1="0" y1="0" x2="0" y2="1"><stop offset="0" stop-color="#c9e2f5"/><stop offset=".22" stop-color="#dcebf7"/><stop offset=".38" stop-color="#eef3f6"/><stop offset=".42" stop-color="#dfe3ea"/><stop offset=".5" stop-color="#a9b7cf"/><stop offset=".6" stop-color="#b9c2d4"/><stop offset=".66" stop-color="#cfd0d6"/><stop offset=".67" stop-color="#2a2622"/><stop offset="1" stop-color="#1f1b18"/></linearGradient>
<linearGradient id="ggar" x1="0" y1="0" x2="0" y2="1"><stop offset="0" stop-color="#e8edef"/><stop offset=".3" stop-color="#e2e9ea"/><stop offset=".34" stop-color="#5d7442"/><stop offset=".55" stop-color="#5f8238"/><stop offset=".75" stop-color="#7da344"/><stop offset=".86" stop-color="#6d6a3a"/><stop offset="1" stop-color="#5e4030"/></linearGradient>
<linearGradient id="gwall" x1="0" y1="0" x2="1" y2="0"><stop offset="0" stop-color="#aca092"/><stop offset=".45" stop-color="#b9ae9f"/><stop offset="1" stop-color="#a89c8d"/></linearGradient>
</defs>
<!-- ============ BEE ============ -->
<g clip-path="url(#cbee)">
<rect x="0" y="0" width="288.1" height="234.3" fill="url(#gbee)"/>
<g filter="url(#b1)">
<path d="M30 236L21 206 33 196 24 181 42 180 56 153 80 150 100 139 118 127 143 113 160 121 176 108 190 100 197 84 213 90 224 76 241 73 262 78 285 78 290 95V236z" fill="#fb8a08"/>
<path d="M60 155c14-4 30 2 40 10 10 8 22 12 36 20 6 4-2 10-12 8-20-6-40-14-56-26-6-5-10-10-8-12z" fill="#e5400c"/>
<path d="M98 148c10-2 20 4 26 12-8 6-18 6-26 0-4-4-4-8 0-12z" fill="#d92c08"/>
<path d="M236 128c12 4 22 14 26 30-2 18-10 30-22 38 4-20 2-44-4-68z" fill="#e0320a"/>
<path d="M262 150c10-6 20-4 28 0v40c-12 2-22-2-30-10 4-10 4-20 2-30z" fill="#ee5a0a"/>
<path d="M200 92c16-8 34-4 44 6 6 30 2 60-14 84-14-10-24-26-28-44-2-16-2-32-2-46z" fill="#ff9812"/>
<path d="M120 150c20-10 44-8 60 4 10 22 8 44-4 62-24 6-48 0-62-18-6-18-4-34 6-48z" fill="#ff9410"/>
<path d="M22 206c20-14 50-16 76-8 16 10 24 22 26 36H30z" fill="#ff920c"/>
<path d="M160 121c10-12 26-20 38-22 2 20-2 40-12 58-14-8-24-20-26-36z" fill="#f97f06"/>
<path d="M130 190c24-10 52-8 72 6 14 12 22 26 22 40H122c-2-18 0-34 8-46z" fill="#fa8a0a"/>
<path d="M205 188c18-12 40-14 58-6 14 10 22 30 25 54h-70c-8-16-12-32-13-48z" fill="#ef7a0c"/>
<path d="M243 196c6 10 8 24 6 38h-20c6-12 10-24 14-38z" fill="#a8320a" opacity=".7"/>
<path d="M57 153c10 14 26 22 44 26-10 8-26 10-40 4-10-8-12-20-4-30z" fill="#f97c08"/>
</g>
<g filter="url(#b1)">
<ellipse cx="112" cy="100" rx="25" ry="17" fill="#8d5e22"/>
<ellipse cx="118" cy="93" rx="20" ry="10" fill="#b98a32"/>
<ellipse cx="76" cy="120" rx="22" ry="26" fill="#4a3626"/>
<ellipse cx="70" cy="112" rx="14" ry="14" fill="#7a5a3c"/>
<ellipse cx="66" cy="134" rx="8" ry="9" fill="#9a8466"/>
<ellipse cx="100" cy="120" rx="16" ry="14" fill="#2a2018"/>
<ellipse cx="130" cy="124" rx="10" ry="12" fill="#17120f"/>
<ellipse cx="120" cy="132" rx="10" ry="7" fill="#2a1c14"/>
<path d="M30 89l70 9-4 5-38-8z" fill="#5d4634"/>
<path d="M38 94c10-2 24 2 34 6l-6 4c-10-2-20-4-28-10z" fill="#b9b2aa" opacity=".7"/>
<path d="M64 138l5 20-3 2-6-18z" fill="#2a3038"/>
<path d="M106 132l12 14-3 2z" fill="#1d1410"/>
</g>
</g>

<!-- ============ PLANTING ============ -->
<g clip-path="url(#cpl)"><g transform="translate(299,0)">
<rect x="0" y="0" width="312.2" height="469.6" fill="url(#gsky)"/>
<g filter="url(#b2)">
<ellipse cx="250" cy="216" rx="90" ry="10" fill="#8fa0bd"/>
<ellipse cx="90" cy="222" rx="110" ry="9" fill="#9dadc8"/>
<ellipse cx="60" cy="206" rx="50" ry="6" fill="#e9edf2"/>
<ellipse cx="275" cy="200" rx="40" ry="5" fill="#eef0f3"/>
<ellipse cx="180" cy="250" rx="140" ry="10" fill="#a5b2c9"/>
<ellipse cx="285" cy="258" rx="40" ry="5" fill="#ecd9d2"/>
<ellipse cx="120" cy="272" rx="60" ry="6" fill="#dfe2e8"/>
<ellipse cx="290" cy="288" rx="40" ry="5" fill="#f0c9b4"/>
<ellipse cx="200" cy="290" rx="120" ry="10" fill="#c3c8d3"/>
</g>
<g filter="url(#b1)">
<path d="M0 226c6-4 12 0 18 8v80H0z" fill="#1f3a1e"/>
<path d="M84 296c10-14 26-20 40-10 6 8 6 18 2 28H84z" fill="#2c4a2a"/>
<path d="M288 300c8-12 16-16 24-12v24h-24z" fill="#4a5a3a"/>
<rect x="0" y="306" width="312.200" height="8" fill="#3f5a2c"/>
<rect x="0" y="312" width="312.200" height="160" fill="#26211d"/>
<ellipse cx="150" cy="420" rx="150" ry="30" fill="#2f2924"/>
<ellipse cx="160" cy="372" rx="46" ry="14" fill="#14110f"/>
</g>
<!-- tree -->
<g fill="none" stroke="#6b4a38" stroke-linecap="round" stroke-linejoin="round">
<path d="M153 372L154 300 150 250 143 183 134 128 136 88 140 66" stroke-width="3"/>
<path d="M143 183L121.600 151.200" stroke-width="1.400"/>
<path d="M154 318L180 262 202 217 223.600 163.700 250.400 74.300 254 58" stroke-width="3"/>
<path d="M224 163.700L271.800 117.200" stroke-width="1.800"/>
<path d="M222 170L218 124" stroke-width="1.300"/>
<path d="M190 240L196 205" stroke-width="1.200"/>
</g>
<g stroke="#55702f" stroke-width=".7" fill="none">
<path d="M136.0 88.6L80.5 90.4"/>
<path d="M136.0 83.0L93.0 70.8"/>
<path d="M136.0 78.0L104.6 37.7"/>
<path d="M137.7 74.3L177.0 48.4"/>
<path d="M137.7 81.5L177.0 76.0"/>
<path d="M132.4 142.3L87.7 153.0"/>
<path d="M130.6 138.7L104.6 119.0"/>
<path d="M137.7 144.0L161.0 147.6"/>
<path d="M250.4 74.3L202.0 74.3"/>
<path d="M250.4 70.7L216.4 51.0"/>
<path d="M252.0 63.6L243.0 27.8"/>
<path d="M254.0 61.8L289.7 15.3"/>
<path d="M254.0 65.4L288.0 54.7"/>
<path d="M245.0 95.8L180.6 106.5"/>
<path d="M220.0 124.4L195.0 131.5"/>
<path d="M263.0 81.5L291.5 95.8"/>
<path d="M271.8 117.2L309.4 128.0"/>
<path d="M271.8 117.2L245.0 124.4"/>
<path d="M170.0 205.0L200.3 201.3"/>
</g>
<g>
<ellipse cx="116.1" cy="94.0" rx="5.4" ry="2.5" fill="#4f7f2f" transform="rotate(116 116.1 94.0)"/>
<ellipse cx="115.4" cy="84.8" rx="5.3" ry="2.4" fill="#3d6a26" transform="rotate(236 115.4 84.8)"/>
<ellipse cx="108.4" cy="94.1" rx="5.3" ry="2.3" fill="#5c8c36" transform="rotate(117 108.4 94.1)"/>
<ellipse cx="106.3" cy="85.8" rx="5.8" ry="2.6" fill="#4f7f2f" transform="rotate(218 106.3 85.8)"/>
<ellipse cx="101.1" cy="95.3" rx="6.1" ry="2.4" fill="#4f7f2f" transform="rotate(111 101.1 95.3)"/>
<ellipse cx="99.6" cy="85.3" rx="5.8" ry="2.7" fill="#4f7f2f" transform="rotate(230 99.6 85.3)"/>
<ellipse cx="93.6" cy="94.9" rx="5.4" ry="2.3" fill="#3d6a26" transform="rotate(112 93.6 94.9)"/>
<ellipse cx="91.3" cy="86.4" rx="5.6" ry="2.6" fill="#5c8c36" transform="rotate(219 91.3 86.4)"/>
<ellipse cx="85.2" cy="95.4" rx="6.0" ry="2.1" fill="#4f7f2f" transform="rotate(119 85.2 95.4)"/>
<ellipse cx="84.6" cy="86.1" rx="5.3" ry="2.0" fill="#5c8c36" transform="rotate(229 84.6 86.1)"/>
<ellipse cx="78.2" cy="95.9" rx="5.9" ry="2.5" fill="#6a9a3c" transform="rotate(113 78.2 95.9)"/>
<ellipse cx="76.8" cy="85.9" rx="5.8" ry="2.2" fill="#5c8c36" transform="rotate(230 76.8 85.9)"/>
<ellipse cx="75.1" cy="90.6" rx="5.4" ry="2" fill="#5c8c36" transform="rotate(178 75.1 90.6)"/>
<ellipse cx="117.3" cy="82.8" rx="5.6" ry="2.3" fill="#43702a" transform="rotate(-226 117.3 82.8)"/>
<ellipse cx="119.8" cy="73.4" rx="5.6" ry="2.7" fill="#4f7f2f" transform="rotate(-104 119.8 73.4)"/>
<ellipse cx="110.9" cy="81.1" rx="5.4" ry="2.2" fill="#6a9a3c" transform="rotate(-233 110.9 81.1)"/>
<ellipse cx="111.7" cy="70.7" rx="6.5" ry="2.1" fill="#3d6a26" transform="rotate(-112 111.7 70.7)"/>
<ellipse cx="103.3" cy="80.0" rx="6.4" ry="2.2" fill="#43702a" transform="rotate(-234 103.3 80.0)"/>
<ellipse cx="105.3" cy="69.1" rx="6.0" ry="2.3" fill="#4f7f2f" transform="rotate(-108 105.3 69.1)"/>
<ellipse cx="97.1" cy="77.9" rx="5.9" ry="2.5" fill="#4f7f2f" transform="rotate(-240 97.1 77.9)"/>
<ellipse cx="98.7" cy="67.3" rx="5.6" ry="2.4" fill="#6a9a3c" transform="rotate(-104 98.7 67.3)"/>
<ellipse cx="89.2" cy="75.1" rx="5.7" ry="2.5" fill="#4f7f2f" transform="rotate(-229 89.2 75.1)"/>
<ellipse cx="92.1" cy="65.2" rx="5.7" ry="2.4" fill="#6a9a3c" transform="rotate(-99 92.1 65.2)"/>
<ellipse cx="87.8" cy="69.3" rx="5.4" ry="2" fill="#4f7f2f" transform="rotate(-164 87.8 69.3)"/>
<ellipse cx="120.6" cy="66.7" rx="5.6" ry="2.5" fill="#6a9a3c" transform="rotate(-195 120.6 66.7)"/>
<ellipse cx="128.5" cy="59.3" rx="6.4" ry="2.1" fill="#6a9a3c" transform="rotate(-68 128.5 59.3)"/>
<ellipse cx="116.5" cy="61.5" rx="5.6" ry="2.1" fill="#6a9a3c" transform="rotate(-198 116.5 61.5)"/>
<ellipse cx="124.9" cy="55.1" rx="5.6" ry="2.3" fill="#43702a" transform="rotate(-56 124.9 55.1)"/>
<ellipse cx="112.2" cy="56.5" rx="5.7" ry="2.2" fill="#4f7f2f" transform="rotate(-204 112.2 56.5)"/>
<ellipse cx="119.1" cy="48.9" rx="5.5" ry="2.2" fill="#6a9a3c" transform="rotate(-73 119.1 48.9)"/>
<ellipse cx="108.3" cy="51.2" rx="5.5" ry="2.2" fill="#5c8c36" transform="rotate(-207 108.3 51.2)"/>
<ellipse cx="115.4" cy="43.5" rx="5.7" ry="2.4" fill="#5c8c36" transform="rotate(-67 115.4 43.5)"/>
<ellipse cx="103.5" cy="45.6" rx="5.9" ry="2.4" fill="#4f7f2f" transform="rotate(-204 103.5 45.6)"/>
<ellipse cx="111.5" cy="37.3" rx="6.4" ry="2.7" fill="#3d6a26" transform="rotate(-66 111.5 37.3)"/>
<ellipse cx="99.1" cy="39.5" rx="5.8" ry="2.1" fill="#6a9a3c" transform="rotate(-198 99.1 39.5)"/>
<ellipse cx="105.9" cy="32.6" rx="5.3" ry="2.1" fill="#5c8c36" transform="rotate(-76 105.9 32.6)"/>
<ellipse cx="101.3" cy="33.4" rx="5.4" ry="2" fill="#4f7f2f" transform="rotate(-128 101.3 33.4)"/>
<ellipse cx="151.4" cy="60.1" rx="5.3" ry="2.0" fill="#5c8c36" transform="rotate(-88 151.4 60.1)"/>
<ellipse cx="156.3" cy="69.4" rx="6.5" ry="2.4" fill="#4f7f2f" transform="rotate(38 156.3 69.4)"/>
<ellipse cx="156.5" cy="55.2" rx="6.1" ry="2.1" fill="#43702a" transform="rotate(-101 156.5 55.2)"/>
<ellipse cx="161.9" cy="65.5" rx="6.0" ry="2.3" fill="#4f7f2f" transform="rotate(46 161.9 65.5)"/>
<ellipse cx="162.9" cy="50.4" rx="6.6" ry="2.3" fill="#6a9a3c" transform="rotate(-100 162.9 50.4)"/>
<ellipse cx="168.6" cy="59.9" rx="5.4" ry="2.5" fill="#43702a" transform="rotate(34 168.6 59.9)"/>
<ellipse cx="170.4" cy="46.5" rx="6.2" ry="2.4" fill="#5c8c36" transform="rotate(-91 170.4 46.5)"/>
<ellipse cx="174.7" cy="56.9" rx="5.9" ry="2.1" fill="#3d6a26" transform="rotate(46 174.7 56.9)"/>
<ellipse cx="175.7" cy="42.3" rx="6.3" ry="2.2" fill="#4f7f2f" transform="rotate(-102 175.7 42.3)"/>
<ellipse cx="181.2" cy="52.1" rx="5.6" ry="2.3" fill="#5c8c36" transform="rotate(41 181.2 52.1)"/>
<ellipse cx="181.5" cy="45.4" rx="5.4" ry="2" fill="#43702a" transform="rotate(-33 181.5 45.4)"/>
<ellipse cx="155.2" cy="73.9" rx="5.9" ry="2.5" fill="#43702a" transform="rotate(-67 155.2 73.9)"/>
<ellipse cx="155.7" cy="84.7" rx="6.1" ry="2.6" fill="#5c8c36" transform="rotate(61 155.7 84.7)"/>
<ellipse cx="163.3" cy="72.4" rx="6.3" ry="2.5" fill="#5c8c36" transform="rotate(-68 163.3 72.4)"/>
<ellipse cx="164.3" cy="83.0" rx="5.9" ry="2.5" fill="#4f7f2f" transform="rotate(54 164.3 83.0)"/>
<ellipse cx="171.2" cy="71.7" rx="5.9" ry="2.1" fill="#3d6a26" transform="rotate(-67 171.2 71.7)"/>
<ellipse cx="171.3" cy="82.5" rx="5.8" ry="2.7" fill="#43702a" transform="rotate(67 171.3 82.5)"/>
<ellipse cx="178.8" cy="70.6" rx="5.7" ry="2.2" fill="#5c8c36" transform="rotate(-71 178.8 70.6)"/>
<ellipse cx="179.9" cy="80.8" rx="5.7" ry="2.3" fill="#3d6a26" transform="rotate(59 179.9 80.8)"/>
<ellipse cx="182.3" cy="75.3" rx="5.4" ry="2" fill="#4f7f2f" transform="rotate(-8 182.3 75.3)"/>
<ellipse cx="115.0" cy="151.8" rx="6.1" ry="2.6" fill="#4f7f2f" transform="rotate(109 115.0 151.8)"/>
<ellipse cx="113.1" cy="142.4" rx="5.4" ry="2.3" fill="#5c8c36" transform="rotate(222 113.1 142.4)"/>
<ellipse cx="107.9" cy="152.9" rx="5.4" ry="2.6" fill="#43702a" transform="rotate(109 107.9 152.9)"/>
<ellipse cx="103.8" cy="145.0" rx="6.5" ry="2.5" fill="#6a9a3c" transform="rotate(205 103.8 145.0)"/>
<ellipse cx="100.1" cy="155.6" rx="6.5" ry="2.5" fill="#5c8c36" transform="rotate(111 100.1 155.6)"/>
<ellipse cx="98.7" cy="145.7" rx="5.2" ry="2.4" fill="#6a9a3c" transform="rotate(226 98.7 145.7)"/>
<ellipse cx="93.9" cy="156.5" rx="5.4" ry="2.6" fill="#6a9a3c" transform="rotate(102 93.9 156.5)"/>
<ellipse cx="90.5" cy="147.7" rx="5.7" ry="2.4" fill="#5c8c36" transform="rotate(218 90.5 147.7)"/>
<ellipse cx="85.4" cy="158.9" rx="6.3" ry="2.5" fill="#4f7f2f" transform="rotate(111 85.4 158.9)"/>
<ellipse cx="82.4" cy="149.3" rx="6.5" ry="2.3" fill="#5c8c36" transform="rotate(215 82.4 149.3)"/>
<ellipse cx="82.4" cy="154.3" rx="5.4" ry="2" fill="#5c8c36" transform="rotate(167 82.4 154.3)"/>
<ellipse cx="115.6" cy="133.5" rx="5.5" ry="2.4" fill="#3d6a26" transform="rotate(-205 115.6 133.5)"/>
<ellipse cx="120.8" cy="125.2" rx="6.0" ry="2.6" fill="#4f7f2f" transform="rotate(-88 120.8 125.2)"/>
<ellipse cx="111.0" cy="130.9" rx="5.7" ry="2.3" fill="#3d6a26" transform="rotate(-222 111.0 130.9)"/>
<ellipse cx="116.7" cy="121.3" rx="5.9" ry="2.6" fill="#3d6a26" transform="rotate(-76 116.7 121.3)"/>
<ellipse cx="105.1" cy="125.5" rx="5.4" ry="2.4" fill="#6a9a3c" transform="rotate(-207 105.1 125.5)"/>
<ellipse cx="111.3" cy="117.1" rx="6.1" ry="2.5" fill="#5c8c36" transform="rotate(-77 111.3 117.1)"/>
<ellipse cx="99.4" cy="121.8" rx="5.9" ry="2.5" fill="#3d6a26" transform="rotate(-208 99.4 121.8)"/>
<ellipse cx="104.1" cy="112.9" rx="6.2" ry="2.4" fill="#6a9a3c" transform="rotate(-95 104.1 112.9)"/>
<ellipse cx="100.3" cy="115.7" rx="5.4" ry="2" fill="#4f7f2f" transform="rotate(-143 100.3 115.7)"/>
<ellipse cx="151.7" cy="141.6" rx="5.3" ry="2.1" fill="#4f7f2f" transform="rotate(-49 151.7 141.6)"/>
<ellipse cx="150.1" cy="151.3" rx="5.9" ry="2.4" fill="#4f7f2f" transform="rotate(72 150.1 151.3)"/>
<ellipse cx="159.4" cy="142.8" rx="6.1" ry="2.4" fill="#3d6a26" transform="rotate(-39 159.4 142.8)"/>
<ellipse cx="156.7" cy="151.8" rx="5.6" ry="2.4" fill="#6a9a3c" transform="rotate(68 156.7 151.8)"/>
<ellipse cx="165.2" cy="144.0" rx="5.5" ry="2.4" fill="#43702a" transform="rotate(-40 165.2 144.0)"/>
<ellipse cx="162.6" cy="153.8" rx="6.4" ry="2.1" fill="#6a9a3c" transform="rotate(75 162.6 153.8)"/>
<ellipse cx="166.3" cy="148.4" rx="5.4" ry="2" fill="#5c8c36" transform="rotate(9 166.3 148.4)"/>
<ellipse cx="232.6" cy="79.5" rx="5.7" ry="2.2" fill="#5c8c36" transform="rotate(116 232.6 79.5)"/>
<ellipse cx="231.4" cy="70.2" rx="5.5" ry="2.2" fill="#4f7f2f" transform="rotate(229 231.4 70.2)"/>
<ellipse cx="226.3" cy="79.2" rx="5.4" ry="2.5" fill="#43702a" transform="rotate(114 226.3 79.2)"/>
<ellipse cx="223.7" cy="70.0" rx="6.4" ry="2.7" fill="#5c8c36" transform="rotate(222 223.7 70.0)"/>
<ellipse cx="220.0" cy="79.3" rx="5.3" ry="2.6" fill="#5c8c36" transform="rotate(111 220.0 79.3)"/>
<ellipse cx="218.9" cy="68.7" rx="6.4" ry="2.1" fill="#6a9a3c" transform="rotate(242 218.9 68.7)"/>
<ellipse cx="213.1" cy="79.6" rx="5.8" ry="2.3" fill="#43702a" transform="rotate(112 213.1 79.6)"/>
<ellipse cx="210.9" cy="69.8" rx="6.2" ry="2.0" fill="#3d6a26" transform="rotate(226 210.9 69.8)"/>
<ellipse cx="206.0" cy="79.9" rx="6.2" ry="2.3" fill="#3d6a26" transform="rotate(115 206.0 79.9)"/>
<ellipse cx="205.1" cy="69.5" rx="5.9" ry="2.0" fill="#5c8c36" transform="rotate(233 205.1 69.5)"/>
<ellipse cx="199.9" cy="79.2" rx="5.3" ry="2.2" fill="#4f7f2f" transform="rotate(113 199.9 79.2)"/>
<ellipse cx="199.3" cy="69.6" rx="5.5" ry="2.5" fill="#6a9a3c" transform="rotate(240 199.3 69.6)"/>
<ellipse cx="196.6" cy="74.3" rx="5.4" ry="2" fill="#43702a" transform="rotate(180 196.6 74.3)"/>
<ellipse cx="232.7" cy="66.9" rx="6.0" ry="2.4" fill="#6a9a3c" transform="rotate(-219 232.7 66.9)"/>
<ellipse cx="237.6" cy="57.8" rx="5.3" ry="2.0" fill="#5c8c36" transform="rotate(-87 237.6 57.8)"/>
<ellipse cx="226.2" cy="62.4" rx="5.3" ry="2.7" fill="#4f7f2f" transform="rotate(-219 226.2 62.4)"/>
<ellipse cx="230.8" cy="53.8" rx="5.3" ry="2.6" fill="#4f7f2f" transform="rotate(-85 230.8 53.8)"/>
<ellipse cx="219.0" cy="58.2" rx="5.4" ry="2.0" fill="#3d6a26" transform="rotate(-216 219.0 58.2)"/>
<ellipse cx="222.9" cy="48.6" rx="6.5" ry="2.4" fill="#4f7f2f" transform="rotate(-94 222.9 48.6)"/>
<ellipse cx="212.2" cy="54.6" rx="5.5" ry="2.1" fill="#5c8c36" transform="rotate(-221 212.2 54.6)"/>
<ellipse cx="215.6" cy="45.6" rx="5.5" ry="2.7" fill="#43702a" transform="rotate(-98 215.6 45.6)"/>
<ellipse cx="211.7" cy="48.3" rx="5.4" ry="2" fill="#3d6a26" transform="rotate(-150 211.7 48.3)"/>
<ellipse cx="242.9" cy="49.9" rx="5.6" ry="2.4" fill="#5c8c36" transform="rotate(-181 242.9 49.9)"/>
<ellipse cx="253.3" cy="45.6" rx="6.3" ry="2.7" fill="#4f7f2f" transform="rotate(-42 253.3 45.6)"/>
<ellipse cx="240.7" cy="40.9" rx="6.2" ry="2.4" fill="#5c8c36" transform="rotate(-165 240.7 40.9)"/>
<ellipse cx="251.2" cy="39.2" rx="5.5" ry="2.3" fill="#6a9a3c" transform="rotate(-36 251.2 39.2)"/>
<ellipse cx="238.9" cy="35.0" rx="6.0" ry="2.6" fill="#3d6a26" transform="rotate(-179 238.9 35.0)"/>
<ellipse cx="249.0" cy="31.5" rx="5.5" ry="2.2" fill="#5c8c36" transform="rotate(-41 249.0 31.5)"/>
<ellipse cx="236.8" cy="28.1" rx="6.2" ry="2.4" fill="#6a9a3c" transform="rotate(-183 236.8 28.1)"/>
<ellipse cx="249.0" cy="25.0" rx="6.6" ry="2.6" fill="#4f7f2f" transform="rotate(-25 249.0 25.0)"/>
<ellipse cx="241.7" cy="22.6" rx="5.4" ry="2" fill="#4f7f2f" transform="rotate(-104 241.7 22.6)"/>
<ellipse cx="261.5" cy="42.3" rx="6.4" ry="2.3" fill="#4f7f2f" transform="rotate(-119 261.5 42.3)"/>
<ellipse cx="270.9" cy="49.3" rx="6.4" ry="2.6" fill="#43702a" transform="rotate(12 270.9 49.3)"/>
<ellipse cx="265.9" cy="37.1" rx="6.2" ry="2.0" fill="#5c8c36" transform="rotate(-118 265.9 37.1)"/>
<ellipse cx="274.5" cy="43.8" rx="5.8" ry="2.2" fill="#43702a" transform="rotate(13 274.5 43.8)"/>
<ellipse cx="269.4" cy="32.3" rx="6.0" ry="2.2" fill="#43702a" transform="rotate(-127 269.4 32.3)"/>
<ellipse cx="278.3" cy="38.4" rx="5.5" ry="2.2" fill="#4f7f2f" transform="rotate(14 278.3 38.4)"/>
<ellipse cx="274.7" cy="26.3" rx="5.9" ry="2.1" fill="#3d6a26" transform="rotate(-115 274.7 26.3)"/>
<ellipse cx="282.0" cy="33.9" rx="5.3" ry="2.6" fill="#5c8c36" transform="rotate(25 282.0 33.9)"/>
<ellipse cx="279.3" cy="21.4" rx="5.3" ry="2.0" fill="#43702a" transform="rotate(-113 279.3 21.4)"/>
<ellipse cx="286.3" cy="28.2" rx="5.3" ry="2.7" fill="#5c8c36" transform="rotate(22 286.3 28.2)"/>
<ellipse cx="282.5" cy="15.3" rx="6.2" ry="2.6" fill="#6a9a3c" transform="rotate(-119 282.5 15.3)"/>
<ellipse cx="291.2" cy="23.4" rx="6.2" ry="2.3" fill="#43702a" transform="rotate(25 291.2 23.4)"/>
<ellipse cx="286.6" cy="10.1" rx="6.1" ry="2.0" fill="#3d6a26" transform="rotate(-121 286.6 10.1)"/>
<ellipse cx="295.5" cy="17.7" rx="6.2" ry="2.6" fill="#5c8c36" transform="rotate(22 295.5 17.7)"/>
<ellipse cx="293.0" cy="11.0" rx="5.4" ry="2" fill="#3d6a26" transform="rotate(-52 293.0 11.0)"/>
<ellipse cx="268.3" cy="55.4" rx="6.0" ry="2.6" fill="#4f7f2f" transform="rotate(-78 268.3 55.4)"/>
<ellipse cx="270.4" cy="66.3" rx="6.0" ry="2.6" fill="#5c8c36" transform="rotate(57 270.4 66.3)"/>
<ellipse cx="276.6" cy="54.5" rx="5.3" ry="2.4" fill="#4f7f2f" transform="rotate(-62 276.6 54.5)"/>
<ellipse cx="277.9" cy="63.5" rx="5.8" ry="2.0" fill="#4f7f2f" transform="rotate(49 277.9 63.5)"/>
<ellipse cx="282.6" cy="50.9" rx="6.2" ry="2.3" fill="#4f7f2f" transform="rotate(-75 282.6 50.9)"/>
<ellipse cx="284.4" cy="61.0" rx="5.3" ry="2.7" fill="#3d6a26" transform="rotate(51 284.4 61.0)"/>
<ellipse cx="290.8" cy="49.5" rx="5.9" ry="2.5" fill="#6a9a3c" transform="rotate(-62 290.8 49.5)"/>
<ellipse cx="291.6" cy="58.6" rx="5.3" ry="2.2" fill="#5c8c36" transform="rotate(47 291.6 58.6)"/>
<ellipse cx="293.2" cy="53.1" rx="5.4" ry="2" fill="#5c8c36" transform="rotate(-17 293.2 53.1)"/>
<ellipse cx="224.8" cy="105.1" rx="6.6" ry="2.3" fill="#6a9a3c" transform="rotate(108 224.8 105.1)"/>
<ellipse cx="221.2" cy="95.7" rx="6.5" ry="2.2" fill="#4f7f2f" transform="rotate(209 221.2 95.7)"/>
<ellipse cx="218.1" cy="105.6" rx="6.1" ry="2.1" fill="#5c8c36" transform="rotate(110 218.1 105.6)"/>
<ellipse cx="215.2" cy="96.4" rx="6.1" ry="2.5" fill="#3d6a26" transform="rotate(215 215.2 96.4)"/>
<ellipse cx="211.7" cy="105.9" rx="5.2" ry="2.0" fill="#43702a" transform="rotate(111 211.7 105.9)"/>
<ellipse cx="210.2" cy="96.9" rx="5.3" ry="2.2" fill="#6a9a3c" transform="rotate(230 210.2 96.9)"/>
<ellipse cx="204.9" cy="107.7" rx="5.9" ry="2.3" fill="#6a9a3c" transform="rotate(110 204.9 107.7)"/>
<ellipse cx="202.4" cy="97.4" rx="6.6" ry="2.4" fill="#43702a" transform="rotate(225 202.4 97.4)"/>
<ellipse cx="198.9" cy="109.6" rx="6.5" ry="2.0" fill="#6a9a3c" transform="rotate(103 198.9 109.6)"/>
<ellipse cx="195.2" cy="100.3" rx="5.9" ry="2.7" fill="#43702a" transform="rotate(209 195.2 100.3)"/>
<ellipse cx="191.1" cy="110.2" rx="6.5" ry="2.7" fill="#4f7f2f" transform="rotate(115 191.1 110.2)"/>
<ellipse cx="189.7" cy="100.8" rx="5.4" ry="2.4" fill="#43702a" transform="rotate(221 189.7 100.8)"/>
<ellipse cx="184.7" cy="111.3" rx="6.3" ry="2.4" fill="#4f7f2f" transform="rotate(113 184.7 111.3)"/>
<ellipse cx="183.2" cy="101.6" rx="5.5" ry="2.6" fill="#6a9a3c" transform="rotate(224 183.2 101.6)"/>
<ellipse cx="178.3" cy="111.4" rx="5.4" ry="2.7" fill="#6a9a3c" transform="rotate(115 178.3 111.4)"/>
<ellipse cx="175.6" cy="102.8" rx="6.2" ry="2.3" fill="#6a9a3c" transform="rotate(217 175.6 102.8)"/>
<ellipse cx="175.3" cy="107.4" rx="5.4" ry="2" fill="#43702a" transform="rotate(171 175.3 107.4)"/>
<ellipse cx="206.4" cy="132.8" rx="5.7" ry="2.2" fill="#43702a" transform="rotate(114 206.4 132.8)"/>
<ellipse cx="204.5" cy="124.2" rx="5.4" ry="2.6" fill="#4f7f2f" transform="rotate(220 204.5 124.2)"/>
<ellipse cx="201.0" cy="135.1" rx="5.6" ry="2.3" fill="#6a9a3c" transform="rotate(98 201.0 135.1)"/>
<ellipse cx="196.2" cy="126.5" rx="6.4" ry="2.1" fill="#6a9a3c" transform="rotate(209 196.2 126.5)"/>
<ellipse cx="193.8" cy="137.8" rx="6.4" ry="2.2" fill="#4f7f2f" transform="rotate(101 193.8 137.8)"/>
<ellipse cx="190.7" cy="127.9" rx="5.6" ry="2.7" fill="#5c8c36" transform="rotate(219 190.7 127.9)"/>
<ellipse cx="189.8" cy="133.0" rx="5.4" ry="2" fill="#43702a" transform="rotate(164 189.8 133.0)"/>
<ellipse cx="281.3" cy="86.3" rx="5.6" ry="2.5" fill="#6a9a3c" transform="rotate(-18 281.3 86.3)"/>
<ellipse cx="275.7" cy="94.3" rx="6.3" ry="2.4" fill="#3d6a26" transform="rotate(92 275.7 94.3)"/>
<ellipse cx="289.5" cy="89.7" rx="6.2" ry="2.0" fill="#6a9a3c" transform="rotate(-20 289.5 89.7)"/>
<ellipse cx="284.4" cy="98.1" rx="6.3" ry="2.5" fill="#43702a" transform="rotate(84 284.4 98.1)"/>
<ellipse cx="297.6" cy="93.7" rx="6.5" ry="2.4" fill="#5c8c36" transform="rotate(-19 297.6 93.7)"/>
<ellipse cx="292.1" cy="101.5" rx="5.7" ry="2.2" fill="#43702a" transform="rotate(84 292.1 101.5)"/>
<ellipse cx="296.3" cy="98.2" rx="5.4" ry="2" fill="#6a9a3c" transform="rotate(27 296.3 98.2)"/>
<ellipse cx="290.9" cy="118.1" rx="5.6" ry="2.4" fill="#6a9a3c" transform="rotate(-35 290.9 118.1)"/>
<ellipse cx="288.7" cy="126.9" rx="6.1" ry="2.1" fill="#3d6a26" transform="rotate(66 288.7 126.9)"/>
<ellipse cx="298.4" cy="119.7" rx="5.9" ry="2.2" fill="#43702a" transform="rotate(-41 298.4 119.7)"/>
<ellipse cx="294.6" cy="129.4" rx="5.8" ry="2.1" fill="#5c8c36" transform="rotate(84 294.6 129.4)"/>
<ellipse cx="306.6" cy="123.5" rx="5.4" ry="2.4" fill="#43702a" transform="rotate(-25 306.6 123.5)"/>
<ellipse cx="303.7" cy="131.0" rx="5.6" ry="2.4" fill="#4f7f2f" transform="rotate(69 303.7 131.0)"/>
<ellipse cx="314.0" cy="124.5" rx="5.8" ry="2.3" fill="#3d6a26" transform="rotate(-37 314.0 124.5)"/>
<ellipse cx="311.5" cy="133.2" rx="5.6" ry="2.5" fill="#6a9a3c" transform="rotate(68 311.5 133.2)"/>
<ellipse cx="314.6" cy="129.5" rx="5.4" ry="2" fill="#43702a" transform="rotate(16 314.6 129.5)"/>
<ellipse cx="258.1" cy="126.0" rx="5.7" ry="2.5" fill="#3d6a26" transform="rotate(105 258.1 126.0)"/>
<ellipse cx="254.4" cy="116.7" rx="6.4" ry="2.2" fill="#43702a" transform="rotate(216 254.4 116.7)"/>
<ellipse cx="251.4" cy="128.1" rx="5.7" ry="2.5" fill="#6a9a3c" transform="rotate(99 251.4 128.1)"/>
<ellipse cx="247.7" cy="118.1" rx="6.4" ry="2.6" fill="#4f7f2f" transform="rotate(223 247.7 118.1)"/>
<ellipse cx="242.6" cy="129.7" rx="5.8" ry="2.5" fill="#6a9a3c" transform="rotate(114 242.6 129.7)"/>
<ellipse cx="240.7" cy="120.3" rx="5.9" ry="2.1" fill="#3d6a26" transform="rotate(224 240.7 120.3)"/>
<ellipse cx="239.8" cy="125.8" rx="5.4" ry="2" fill="#6a9a3c" transform="rotate(165 239.8 125.8)"/>
<ellipse cx="185.6" cy="198.1" rx="5.5" ry="2.1" fill="#5c8c36" transform="rotate(-71 185.6 198.1)"/>
<ellipse cx="187.6" cy="208.7" rx="6.6" ry="2.1" fill="#6a9a3c" transform="rotate(54 187.6 208.7)"/>
<ellipse cx="196.2" cy="197.6" rx="6.3" ry="2.0" fill="#5c8c36" transform="rotate(-49 196.2 197.6)"/>
<ellipse cx="195.7" cy="207.7" rx="6.5" ry="2.5" fill="#43702a" transform="rotate(56 195.7 207.7)"/>
<ellipse cx="202.3" cy="195.6" rx="6.1" ry="2.4" fill="#6a9a3c" transform="rotate(-70 202.3 195.6)"/>
<ellipse cx="202.7" cy="206.1" rx="5.4" ry="2.0" fill="#3d6a26" transform="rotate(63 202.7 206.1)"/>
<ellipse cx="205.7" cy="200.6" rx="5.4" ry="2" fill="#3d6a26" transform="rotate(-7 205.7 200.6)"/>
</g>
<!-- people -->
<g filter="url(#b1)">
<!-- left standing -->
<path d="M14 262l4 -10 46 6-6 40-22 34-24 4z" fill="#3b414d"/>
<path d="M34 164c10-8 24-8 36-2l10 30 8 42-10 10-14 16-22 8-30-8-6-6 12-60z" fill="#5b7ea5"/>
<path d="M60 168l8 52-6 34-10-40z" fill="#d9d6d2"/>
<path d="M70 240c6-4 14-4 20 2l-2 14-14 4z" fill="#d7a386"/>
<ellipse cx="68" cy="160" rx="10" ry="13" fill="#e0b296"/>
<path d="M50 150c2-14 22-18 34-6 2 6 0 10-2 14-8-8-18-6-28 4-3-4-4-8-4-12z" fill="#2b2a27"/>
<path d="M78 246c4-6 14-6 18 0l-2 22c-4 4-10 4-12 0z" fill="none" stroke="#e8531c" stroke-width="4"/>
<!-- center woman -->
<path d="M142 300h40l-4 56-16 10-18-10z" fill="#25416f"/>
<path d="M126 252c2-30 8-50 14-62l36-2c8 14 12 34 14 62l-14 22-36 2z" fill="#2f5f9b"/>
<path d="M124 212c4-14 12-22 22-24l8 60-6 72-18-6c-4-20-4-40 0-60z" fill="#f1bf1d"/>
<path d="M170 188c10 2 18 10 20 24l4 54c2 14 2 28-2 42l-14 6-8-70z" fill="#f1bf1d"/>
<ellipse cx="161" cy="188" rx="11" ry="13" fill="#e2b69c"/>
<path d="M146 186c-2-14 8-24 18-22 10 0 16 10 12 24-4-10-10-14-16-12-6 0-10 4-14 10z" fill="#e4e0dc"/>
<ellipse cx="150" cy="272" rx="10" ry="8" fill="#d9a98c"/>
<ellipse cx="178" cy="270" rx="9" ry="7" fill="#d9a98c"/>
<!-- man -->
<path d="M170 300c14-12 36-14 50-2l16 40-20 30-48-6-8-30z" fill="#b06c3a"/>
<path d="M176 352l52-2 16 40-20 16-44-8-12-24z" fill="#5c5446"/>
<ellipse cx="207" cy="268" rx="12" ry="15" fill="#c99274"/>
<path d="M194 262c0-14 12-20 24-14 6 4 8 10 6 18-6-8-16-10-30-4z" fill="#3a2a20"/>
<path d="M198 276c4 10 14 12 20 4l-2 12c-6 4-12 4-16-2z" fill="#4a3526"/>
<ellipse cx="160" cy="334" rx="12" ry="9" fill="#c78e6e"/>
<!-- right woman -->
<path d="M246 372c14-8 40-8 62 0l6 34-30 14-38-16z" fill="#6b5b49"/>
<path d="M204 330c10-20 30-44 52-54 20-4 40 2 56 14v92c-16 2-30-2-40-10l-12-40-40 22-22-6z" fill="#7ba3cd"/>
<path d="M200 336l-34 10-4 8 40 4z" fill="#6b4630"/>
<path d="M214 356l-40 24 8 8 42-18z" fill="#6b4630"/>
<ellipse cx="231" cy="281" rx="13" ry="15" fill="#5b3b2b"/>
<path d="M226 288c4 4 10 4 14-2l-2 6c-4 3-8 3-12 0z" fill="#f4f0ea"/>
<path d="M204 268c10-10 26-14 44-10 10 4 16 10 20 16-20-6-44-4-62 6-4-4-4-8-2-12z" fill="#4a3a31"/>
<path d="M216 262c2-10 10-16 20-16s16 6 18 16c-12-4-26-4-38 0z" fill="#54433a"/>
<path d="M252 300c8-4 14 0 16 10l-4 30c-6 4-12 2-14-4z" fill="#2b1f18"/>
<!-- kneeling woman -->
<path d="M2 352c10-30 30-50 56-58l30 6 22 30 12 14-6 14-30-8 16 34-34 18-40 4-28-10z" fill="#c9946b"/>
<path d="M0 392c20-12 50-14 80-6l14 18-20 16-60 8-14-8z" fill="#c58f66"/>
<path d="M106 342l42 8 2 8-44 0z" fill="#dcae90"/>
<path d="M96 378l30 20-4 8-32-16z" fill="#dcae90"/>
<path d="M2 396l12-4 16 34-10 6z" fill="#a5644a"/>
<ellipse cx="77" cy="286" rx="12" ry="14" fill="#e6b99c"/>
<path d="M62 292c0 16 6 34 18 44l8-4c-8-12-10-26-8-40z" fill="#8d8a8c"/>
<path d="M50 282c4-12 20-22 34-20 10 2 16 8 18 18-12-6-28-6-46 6-4 0-6-2-6-4z" fill="#54463c"/>
<path d="M60 274c0-10 8-16 18-16 8 0 14 6 14 14-10-4-22-2-32 2z" fill="#5d4e43"/>
</g>
</g></g>

<!-- ============ GARDEN ============ -->
<g clip-path="url(#cga)"><g transform="translate(0,246)">
<rect x="0" y="0" width="288.100" height="223.600" fill="url(#ggar)"/>
<g filter="url(#b2)">
<path d="M0 70c14-8 30-6 44 0 10-10 24-12 36-6 8-2 14 2 20 8l4 50H0z" fill="#3f5533"/>
<path d="M98 88c4-30 20-60 44-70 18 0 28 20 30 50l-4 40H100z" fill="#557f30"/>
<path d="M120 60c8-20 20-30 34-28 8 10 10 26 8 44-14 4-30 0-42-16z" fill="#68973a"/>
<path d="M232 74c16-8 36-10 56-6v60h-56z" fill="#5f7f3d"/>
<rect x="0" y="118" width="288" height="40" fill="#5c7f37"/>
<ellipse cx="150" cy="160" rx="70" ry="14" fill="#a3c04a"/>
<ellipse cx="250" cy="150" rx="40" ry="24" fill="#6f9a3b"/>
<ellipse cx="40" cy="168" rx="50" ry="16" fill="#4f6f33"/>
<ellipse cx="130" cy="210" rx="110" ry="12" fill="#6a4534"/><ellipse cx="30" cy="204" rx="40" ry="10" fill="#55803a"/><ellipse cx="190" cy="196" rx="40" ry="10" fill="#6d9a40"/>
<ellipse cx="260" cy="200" rx="24" ry="14" fill="#86c03a"/>
<ellipse cx="205" cy="178" rx="12" ry="22" fill="#8fb65a"/>
<ellipse cx="50" cy="214" rx="30" ry="9" fill="#5e9a36"/>
<ellipse cx="215" cy="219" rx="40" ry="7" fill="#5e9a36"/>
</g>
<g filter="url(#b1)">
<path d="M93 110l34-2 3 6-2 32-12 4-2-30-22 0z" fill="#a9714c"/>
<rect x="10.600" y="139" width="9" height="43" fill="#5a3a2b"/>
<rect x="130" y="88" width="3.600" height="60" fill="#7a5843"/>
<path d="M0 117l132-15M133 102l155-9" stroke="#d9d2c8" stroke-width="1.300" fill="none"/>
<path d="M0 152l40-5 120 18 104 4" stroke="#b9a89a" stroke-width="1" fill="none"/>
<path d="M247 70v90M252 76v90M259 70v96" stroke="#a4714e" stroke-width="1.200" fill="none"/>
<g fill="#f29a16"><circle cx="6" cy="184" r="2.600"/><circle cx="16" cy="180" r="2.400"/><circle cx="24" cy="188" r="2.400"/><circle cx="4" cy="194" r="2.400"/><circle cx="30" cy="196" r="2.200"/><circle cx="22" cy="178" r="2"/><circle cx="104" cy="156" r="3"/></g>
<!-- man -->
<path d="M166 122c14-6 40-6 62 0l2 50-4 46-22 2-6-70-14 70-20 2z" fill="#5b84b3"/>
<path d="M172 40c12-8 40-10 54 2l14 48-10 6-8 32c-18 6-40 6-54 0l4-40z" fill="#5c6056"/>
<path d="M164 50l12-8 4 40-14 8c-4-12-4-26-2-40z" fill="#666a5f"/>
<path d="M166 90l10 4-2 26-6 2c-4-10-4-20-2-32z" fill="#c28f70"/>
<path d="M232 94l10-4 8 30 2 20-8 2-8-24z" fill="#c28f70"/>
<rect x="238" y="106" width="9" height="3.500" fill="#2a2a2a"/>
<ellipse cx="181" cy="26" rx="12" ry="15" fill="#c99a7b"/>
<path d="M166 20c0-14 12-22 24-20 10 2 14 10 12 20-8-8-20-8-32 6-3-2-4-4-4-6z" fill="#8e8e8b"/>
<path d="M172 32c4 8 12 10 18 6l-2 8c-6 2-12 0-16-6z" fill="#d6d3cf"/>
<!-- woman -->
<path d="M52 128c6-4 14-4 20 0l-4 30-14 30-8 28-14 1c2-32 8-62 20-89z" fill="#5b8bbb"/>
<path d="M86 156c4-3 9-3 13 0l4 42-9 3z" fill="#4f7fb0"/>
<path d="M48 120c8-8 20-11 30-9 12 2 22 8 30 16l18 34-10 9-16-22-22 22-16-4c-6-14-12-30-14-46z" fill="#b8d6e8"/>
<path d="M62 168l6-4 18 36-7 4z" fill="#d4a688"/>
<path d="M114 164l7-2 6 34-8 3z" fill="#d4a688"/>
<ellipse cx="94" cy="144" rx="9" ry="10" fill="#dba98c"/>
<path d="M82 112c10-3 20 2 25 12 3 9 2 18-1 24-3-6-7-9-12-8-2 8-8 14-16 16-4-8-6-18-4-28 1-7 4-13 8-16z" fill="#dcae7e"/>
<path d="M84 118c6-2 12 0 16 6-6 2-12 8-16 16-2-8-2-16 0-22z" fill="#e8c49a"/>
<ellipse cx="112" cy="207" rx="17" ry="11" fill="#6a3e2a"/>
<ellipse cx="108" cy="203" rx="9" ry="5" fill="#8a5438"/>
</g>
</g></g>
<!-- ============ BANNER ============ -->
<g fill="#fdbe11">
<circle cx="56.500" cy="527.500" r="29.600"/>
<g id="rays"><path d="M56.500 476.500l8.600 17.500h-17.200z"/><path d="M56.500 578.500l8.600-17.500h-17.200z"/><path d="M5.500 527.500l17.500-8.600v17.200z"/><path d="M107.500 527.500l-17.500-8.600v17.200z"/></g>
<use href="#rays" transform="rotate(45 56.500 527.500)"/>
</g>
<text x="115.100" y="534.500" font-family="'Liberation Sans',sans-serif" font-weight="700" font-size="51.600" fill="#0e9aa7" stroke="#0e9aa7" stroke-width="3" stroke-linejoin="miter" stroke-miterlimit="3" textLength="487" lengthAdjust="spacingAndGlyphs">ANNUAL REPORT</text>
<text x="129.100" y="557.800" font-family="'Liberation Sans',sans-serif" font-weight="700" font-size="21" fill="#fb6b3d" stroke="#fb6b3d" stroke-width="1.700" stroke-linejoin="miter" stroke-miterlimit="3" textLength="464.300" lengthAdjust="spacingAndGlyphs">Improving natural spaces since 1960</text>

<!-- ============ VOLUNTEERS ============ -->
<g clip-path="url(#cvo)"><g transform="translate(0,587)">
<rect x="0" y="0" width="267.200" height="201.500" fill="url(#gwall)"/>
<g filter="url(#b1)">
<!-- right person -->
<path d="M160 0h70l2 8c-14 8-50 8-70 0z" fill="#c9977a"/>
<path d="M157 14c10-8 24-12 36-12 10 6 26 6 38 0 14 2 26 6 36 12v188H168l-8-100-12 2-22-30c10-24 20-44 31-60z" fill="#0a63ab"/>
<path d="M170 40c20 8 60 8 97 0v20c-30 10-70 10-97 0z" fill="#0f6cb6" opacity=".6"/>
<path d="M126 76l22 30-16 10-30-14-6-40 14-6z" fill="#c9977a"/>
<!-- crushed bottle -->
<path d="M100 14l8-2 4 10 8 20 2 30 6 24-10 12-20 2-12-14-2-28 8-30z" fill="#cdc6bd" opacity=".9"/>
<path d="M98 40l16 10-4 20 12 16-16 10-14-20z" fill="#e6e1da" opacity=".6"/>
<rect x="100" y="16" width="11" height="3" fill="#e8343a"/>
<path d="M84 52c6-6 14-4 18 2l-2 14-14 6c-4-8-4-16-2-22z" fill="#d3a184"/>
<!-- left person -->
<path d="M30 0h34l-4 8c-8 4-18 4-26 0z" fill="#c9977a"/>
<path d="M0 12c10-6 22-10 32-10 8 6 20 6 28 0 10 4 18 10 24 18l6 30-8 8 2 60 4 40-10 46H0z" fill="#0a63ab"/>
<path d="M0 90c20 10 50 10 82 0v30c-30 12-60 12-82 0z" fill="#0f6cb6" opacity=".5"/>
<path d="M82 116l30 22 10 6-4 10-20-2-24-14z" fill="#c9977a"/>
<path d="M104 142c10-4 26-2 36 6l-4 8-30-4z" fill="#d3a184"/>
<path d="M0 150c14 6 30 12 50 14l16 6-6 12-20 2-40-12z" fill="#c9977a"/>
<!-- bag -->
<path d="M50 176c10-16 30-24 56-26 24 2 44 12 56 30l10 22H56z" fill="#1b1b19"/>
<path d="M70 170c16-8 34-10 52-6l-10 38H84z" fill="#2b2b28"/>
<path d="M124 160c10 8 16 24 18 42h-14z" fill="#0f0f0e"/>
<!-- bottles -->
<path d="M193 36h10l2 10c8 8 10 18 10 30l-2 30 2 24-6 8h-20l-6-8 2-26-2-28c0-12 2-22 8-30z" fill="#4f86c4" opacity=".95"/>
<path d="M190 60c6-4 14-4 20 0l-2 40c-4 4-12 4-16 0z" fill="#8fb4dc" opacity=".7"/>
<path d="M188 116c6 6 16 6 24 0v16c-8 6-16 6-24 0z" fill="#9fc0e2" opacity=".7"/>
<rect x="192" y="37" width="11" height="2.600" fill="#e8343a"/>
<path d="M232 44h14l2 10c4 4 6 10 6 18v44c0 4-2 6-6 6h-18c-4 0-6-2-6-6V72c0-8 2-14 6-18z" fill="#ebe7df"/>
<rect x="232" y="46" width="14" height="2.600" fill="#3fae4a"/>
<path d="M258 60c4-4 8-4 10 0v50l-12-4z" fill="#4f86c2"/>
<!-- right hand -->
<path d="M190 82c10-6 30-6 44 2l14 12 20 10v18l-26-10-20 4-30-8c-6-8-6-20-2-28z" fill="#c9977a"/>
<path d="M190 92h28M190 100h26M194 108h20" stroke="#b07f63" stroke-width="1.200" fill="none"/>
<circle cx="244.700" cy="101" r="8.400" fill="#1d1d1d"/>
<circle cx="246" cy="100" r="5" fill="#cfd3d8"/>
</g>
<text x="30" y="71.600" font-family="'Liberation Sans',sans-serif" font-weight="700" font-style="italic" font-size="8.600" fill="#e9eef4" textLength="44.500" lengthAdjust="spacingAndGlyphs" transform="rotate(4 30 71.600)">VOLUNTEER</text>
<text x="175.400" y="53.600" font-family="'Liberation Sans',sans-serif" font-weight="700" font-style="italic" font-size="9.400" fill="#e9eef4" textLength="54.600" lengthAdjust="spacingAndGlyphs" transform="rotate(2 175.400 53.600)">VOLUNTEER</text>
</g></g>
<!-- ============ GREEN BOX ============ -->
<rect x="278.200" y="587" width="333" height="201.500" fill="#4caf50"/>
<text x="444.900" y="626" text-anchor="middle" font-family="'Liberation Sans',sans-serif" font-weight="700" font-size="32" fill="#fff" textLength="266.400" lengthAdjust="spacingAndGlyphs">We need your help!</text>
<g font-family="'Liberation Serif',serif" font-size="14.300" fill="#fff">
<text x="292.500" y="658.200" textLength="307.700" lengthAdjust="spacing">Volunteering to reduce waste plays a crucial role in</text>
<text x="292.500" y="674.200" textLength="307.700" lengthAdjust="spacing">protecting our environment and building more</text>
<text x="292.500" y="690.200" textLength="307.700" lengthAdjust="spacing">sustainable communities. By participating in clean-up</text>
<text x="292.500" y="706.200" textLength="307.700" lengthAdjust="spacing">efforts, recycling programs, and education initiatives,</text>
<text x="292.500" y="722.200" textLength="307.700" lengthAdjust="spacing">volunteers help divert waste from landfills, conserve</text>
<text x="292.500" y="738.200" textLength="307.700" lengthAdjust="spacing">natural resources, and raise awareness about responsible</text>
<text x="292.500" y="754.200" textLength="307.700" lengthAdjust="spacing">consumption. These efforts not only improve local</text>
<text x="292.500" y="770.200" textLength="243" lengthAdjust="spacing">ecosystems but also inspire long term change.</text>
</g>

</svg>
<!-- status bar -->
<div class="abs" style="left:234px;top:1084.200px;width:1914px;height:51px;background:#f9f9fb;border-top:1.400px solid #dcdcde"></div>
<span class="t" style="left:245.70px;top:1101.34px;font-size:17.50px;letter-spacing:0.211px;">C:\Users\SharpenedProductions\Documents\Files\Work\Green Annual Report.pdf</span>
<div class="sep" style="left:2100.600px;top:1092.600px;height:31px;background:#dadadc"></div>
<svg style="left:2064px;top:1094px" width="80" height="30" viewBox="2064 1094 80 30"><g class="ic" style="stroke-width:1.600;stroke:#222"><circle cx="2076.600" cy="1106.600" r="7"/><path d="M2081.800 1111.800l6.400 6.400"/><circle cx="2121.400" cy="1106.600" r="7"/><path d="M2126.600 1111.800l6.400 6.400"/></g><g stroke="#1db954" stroke-width="1.300" fill="none"><path d="M2074 1103.800v5.600M2079.200 1103.800v5.600"/><path d="M2076.600 1105.200v.2M2076.600 1107.800v.2" stroke-linecap="round"/><path d="M2118.600 1109.400l5.600-5.600M2118.400 1106.400v3.200h3.200M2121.200 1103.600h3.200v3.200"/></g></svg>
</div></div>
</div>
</body>
</html>
